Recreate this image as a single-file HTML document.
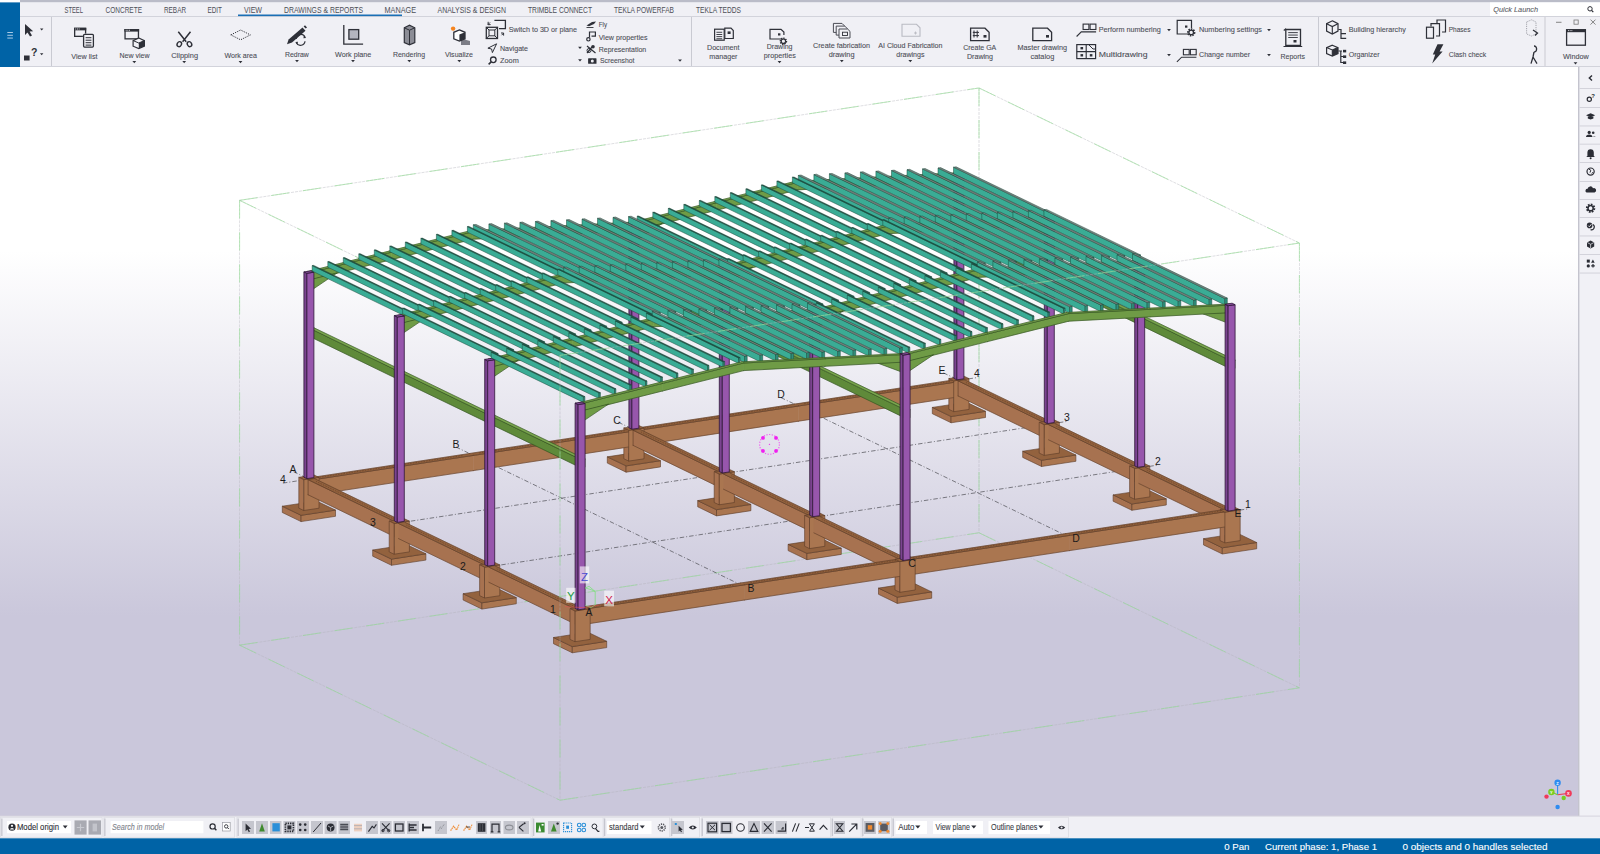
<!DOCTYPE html><html><head><meta charset="utf-8"><style>html,body{margin:0;padding:0;background:#fff;overflow:hidden}svg{display:block;font-family:"Liberation Sans",sans-serif}</style></head><body>
<svg width="1600" height="854" viewBox="0 0 1600 854">
<defs><linearGradient id="bg" x1="0" y1="0" x2="0" y2="1"><stop offset="0" stop-color="#ffffff"/><stop offset="0.245" stop-color="#ffffff"/><stop offset="0.732" stop-color="#cac7db"/><stop offset="1" stop-color="#cac7db"/></linearGradient></defs>
<rect x="0" y="67" width="1600" height="750" fill="url(#bg)"/>
<rect x="0" y="0" width="1600" height="67" fill="#f0f0f5"/>
<rect x="20" y="0" width="1580" height="2.2" fill="#babcc8"/>
<rect x="0" y="0" width="20" height="2.4" fill="#ffffff"/>
<rect x="0" y="2.4" width="20" height="64.6" fill="#0063a6"/>
<rect x="7.3" y="32.0" width="5.6" height="0.9" fill="#bcd6ee"/>
<rect x="7.3" y="34.8" width="5.6" height="0.9" fill="#bcd6ee"/>
<rect x="7.3" y="37.6" width="5.6" height="0.9" fill="#bcd6ee"/>
<rect x="20" y="16" width="1580" height="1" fill="#d2d3db"/>
<rect x="20" y="66" width="1580" height="1" fill="#d2d3db"/>
<text x="64.50" y="12.57" font-size="8.6" fill="#4d4f57" textLength="18.50" lengthAdjust="spacingAndGlyphs">STEEL</text>
<text x="105.50" y="12.57" font-size="8.6" fill="#4d4f57" textLength="36.50" lengthAdjust="spacingAndGlyphs">CONCRETE</text>
<text x="164.00" y="12.57" font-size="8.6" fill="#4d4f57" textLength="22.00" lengthAdjust="spacingAndGlyphs">REBAR</text>
<text x="207.50" y="12.57" font-size="8.6" fill="#4d4f57" textLength="14.50" lengthAdjust="spacingAndGlyphs">EDIT</text>
<text x="244.00" y="12.57" font-size="8.6" fill="#4d4f57" textLength="18.00" lengthAdjust="spacingAndGlyphs">VIEW</text>
<text x="284.00" y="12.57" font-size="8.6" fill="#4d4f57" textLength="79.00" lengthAdjust="spacingAndGlyphs">DRAWINGS &amp; REPORTS</text>
<text x="384.50" y="12.57" font-size="8.6" fill="#4d4f57" textLength="31.50" lengthAdjust="spacingAndGlyphs">MANAGE</text>
<text x="437.50" y="12.57" font-size="8.6" fill="#4d4f57" textLength="68.50" lengthAdjust="spacingAndGlyphs">ANALYSIS &amp; DESIGN</text>
<text x="528.00" y="12.57" font-size="8.6" fill="#4d4f57" textLength="64.00" lengthAdjust="spacingAndGlyphs">TRIMBLE CONNECT</text>
<text x="614.00" y="12.57" font-size="8.6" fill="#4d4f57" textLength="60.00" lengthAdjust="spacingAndGlyphs">TEKLA POWERFAB</text>
<text x="696.00" y="12.57" font-size="8.6" fill="#4d4f57" textLength="45.00" lengthAdjust="spacingAndGlyphs">TEKLA TEDDS</text>
<rect x="238" y="14.5" width="164" height="1.6" fill="#1a6fb5"/>
<rect x="1490" y="2.5" width="110" height="13.5" fill="#ffffff"/>
<text x="1493.30" y="12.22" font-size="8.00" fill="#5b5d66" stroke="#5b5d66" stroke-width="0.1" textLength="44.70" lengthAdjust="spacingAndGlyphs" font-style="italic">Quick Launch</text>
<circle cx="1590" cy="8.8" r="2.2" fill="none" stroke="#2b2d35" stroke-width="1"/><line x1="1591.6" y1="10.4" x2="1593.3" y2="12.2" stroke="#2b2d35" stroke-width="1.2"/>
<rect x="51.0" y="17" width="1" height="49" fill="#c9cad2"/>
<rect x="691.0" y="17" width="1" height="49" fill="#c9cad2"/>
<rect x="1318.0" y="17" width="1" height="49" fill="#c9cad2"/>
<rect x="1544.5" y="17" width="1" height="49" fill="#c9cad2"/>
<path d="M25,24 L25,35 L27.5,32.5 L30,36.5 L32,35.5 L29.6,31.6 L33.2,31.3 Z" fill="#2e3038"/>
<path d="M40,28.6 L43.4,28.6 L41.7,30.6Z" fill="#2e3038"/>
<rect x="24" y="55.5" width="5.6" height="5" fill="#2e3038"/>
<text x="31" y="56" font-size="10.5" font-weight="bold" fill="#2e3038">?</text>
<path d="M40,53.2 L43.4,53.2 L41.7,55.2Z" fill="#2e3038"/>
<text x="71.25" y="58.99" font-size="7.90" fill="#4b4d55" stroke="#4b4d55" stroke-width="0.1" textLength="26.25" lengthAdjust="spacingAndGlyphs">View list</text>
<text x="119.50" y="57.69" font-size="7.90" fill="#4b4d55" stroke="#4b4d55" stroke-width="0.1" textLength="30.00" lengthAdjust="spacingAndGlyphs">New view</text>
<path d="M132.4,61.0 L136.2,61.0 L134.3,63.2 Z" fill="#2e3038"/>
<text x="171.25" y="57.69" font-size="7.90" fill="#4b4d55" stroke="#4b4d55" stroke-width="0.1" textLength="26.75" lengthAdjust="spacingAndGlyphs">Clipping</text>
<path d="M182.3,61.0 L186.1,61.0 L184.2,63.2 Z" fill="#2e3038"/>
<text x="224.50" y="57.69" font-size="7.90" fill="#4b4d55" stroke="#4b4d55" stroke-width="0.1" textLength="32.50" lengthAdjust="spacingAndGlyphs">Work area</text>
<path d="M238.6,61.0 L242.4,61.0 L240.5,63.2 Z" fill="#2e3038"/>
<text x="285.00" y="57.19" font-size="7.90" fill="#4b4d55" stroke="#4b4d55" stroke-width="0.1" textLength="23.75" lengthAdjust="spacingAndGlyphs">Redraw</text>
<path d="M295.1,60.0 L298.9,60.0 L297.0,62.2 Z" fill="#2e3038"/>
<text x="335.00" y="57.19" font-size="7.90" fill="#4b4d55" stroke="#4b4d55" stroke-width="0.1" textLength="36.25" lengthAdjust="spacingAndGlyphs">Work plane</text>
<path d="M351.1,60.0 L354.9,60.0 L353.0,62.2 Z" fill="#2e3038"/>
<text x="393.00" y="56.69" font-size="7.90" fill="#4b4d55" stroke="#4b4d55" stroke-width="0.1" textLength="32.00" lengthAdjust="spacingAndGlyphs">Rendering</text>
<path d="M407.4,60.0 L411.2,60.0 L409.3,62.2 Z" fill="#2e3038"/>
<text x="445.00" y="56.69" font-size="7.90" fill="#4b4d55" stroke="#4b4d55" stroke-width="0.1" textLength="28.00" lengthAdjust="spacingAndGlyphs">Visualize</text>
<path d="M457.4,60.0 L461.2,60.0 L459.3,62.2 Z" fill="#2e3038"/>
<text x="508.75" y="31.69" font-size="7.90" fill="#4b4d55" stroke="#4b4d55" stroke-width="0.1" textLength="68.25" lengthAdjust="spacingAndGlyphs">Switch to 3D or plane</text>
<text x="500.00" y="50.69" font-size="7.90" fill="#4b4d55" stroke="#4b4d55" stroke-width="0.1" textLength="28.00" lengthAdjust="spacingAndGlyphs">Navigate</text>
<text x="500.00" y="63.19" font-size="7.90" fill="#4b4d55" stroke="#4b4d55" stroke-width="0.1" textLength="18.75" lengthAdjust="spacingAndGlyphs">Zoom</text>
<path d="M578.1,46.8 L581.9,46.8 L580.0,49.0 Z" fill="#2e3038"/>
<path d="M578.1,59.2 L581.9,59.2 L580.0,61.4 Z" fill="#2e3038"/>
<text x="598.75" y="27.19" font-size="7.90" fill="#4b4d55" stroke="#4b4d55" stroke-width="0.1" textLength="8.25" lengthAdjust="spacingAndGlyphs">Fly</text>
<text x="598.75" y="39.69" font-size="7.90" fill="#4b4d55" stroke="#4b4d55" stroke-width="0.1" textLength="48.75" lengthAdjust="spacingAndGlyphs">View properties</text>
<text x="598.75" y="51.69" font-size="7.90" fill="#4b4d55" stroke="#4b4d55" stroke-width="0.1" textLength="47.50" lengthAdjust="spacingAndGlyphs">Representation</text>
<text x="600.00" y="63.19" font-size="7.90" fill="#4b4d55" stroke="#4b4d55" stroke-width="0.1" textLength="34.50" lengthAdjust="spacingAndGlyphs">Screenshot</text>
<path d="M678.1,59.5 L681.9,59.5 L680.0,61.7 Z" fill="#2e3038"/>
<text x="707.00" y="49.69" font-size="7.90" fill="#4b4d55" stroke="#4b4d55" stroke-width="0.1" textLength="32.50" lengthAdjust="spacingAndGlyphs">Document</text>
<text x="709.25" y="59.19" font-size="7.90" fill="#4b4d55" stroke="#4b4d55" stroke-width="0.1" textLength="28.25" lengthAdjust="spacingAndGlyphs">manager</text>
<text x="766.75" y="48.69" font-size="7.90" fill="#4b4d55" stroke="#4b4d55" stroke-width="0.1" textLength="25.75" lengthAdjust="spacingAndGlyphs">Drawing</text>
<text x="763.75" y="57.69" font-size="7.90" fill="#4b4d55" stroke="#4b4d55" stroke-width="0.1" textLength="32.00" lengthAdjust="spacingAndGlyphs">properties</text>
<path d="M777.6,61.0 L781.4,61.0 L779.5,63.2 Z" fill="#2e3038"/>
<text x="813.00" y="47.69" font-size="7.90" fill="#4b4d55" stroke="#4b4d55" stroke-width="0.1" textLength="57.00" lengthAdjust="spacingAndGlyphs">Create fabrication</text>
<text x="828.75" y="57.19" font-size="7.90" fill="#4b4d55" stroke="#4b4d55" stroke-width="0.1" textLength="25.75" lengthAdjust="spacingAndGlyphs">drawing</text>
<path d="M839.9,60.0 L843.7,60.0 L841.8,62.2 Z" fill="#2e3038"/>
<text x="878.25" y="47.69" font-size="7.90" fill="#4b4d55" stroke="#4b4d55" stroke-width="0.1" textLength="64.25" lengthAdjust="spacingAndGlyphs">AI Cloud Fabrication</text>
<text x="896.25" y="57.19" font-size="7.90" fill="#4b4d55" stroke="#4b4d55" stroke-width="0.1" textLength="28.25" lengthAdjust="spacingAndGlyphs">drawings</text>
<path d="M908.4,60.0 L912.2,60.0 L910.3,62.2 Z" fill="#2e3038"/>
<text x="963.25" y="49.69" font-size="7.90" fill="#4b4d55" stroke="#4b4d55" stroke-width="0.1" textLength="33.00" lengthAdjust="spacingAndGlyphs">Create GA</text>
<text x="967.00" y="59.19" font-size="7.90" fill="#4b4d55" stroke="#4b4d55" stroke-width="0.1" textLength="26.00" lengthAdjust="spacingAndGlyphs">Drawing</text>
<text x="1017.50" y="49.69" font-size="7.90" fill="#4b4d55" stroke="#4b4d55" stroke-width="0.1" textLength="49.50" lengthAdjust="spacingAndGlyphs">Master drawing</text>
<text x="1030.50" y="59.19" font-size="7.90" fill="#4b4d55" stroke="#4b4d55" stroke-width="0.1" textLength="23.75" lengthAdjust="spacingAndGlyphs">catalog</text>
<text x="1098.75" y="32.19" font-size="7.90" fill="#4b4d55" stroke="#4b4d55" stroke-width="0.1" textLength="62.00" lengthAdjust="spacingAndGlyphs">Perform numbering</text>
<path d="M1167.1,29.0 L1170.9,29.0 L1169.0,31.2 Z" fill="#2e3038"/>
<text x="1098.75" y="57.19" font-size="7.90" fill="#4b4d55" stroke="#4b4d55" stroke-width="0.1" textLength="48.75" lengthAdjust="spacingAndGlyphs">Multidrawing</text>
<path d="M1167.1,54.0 L1170.9,54.0 L1169.0,56.2 Z" fill="#2e3038"/>
<text x="1199.00" y="32.19" font-size="7.90" fill="#4b4d55" stroke="#4b4d55" stroke-width="0.1" textLength="63.00" lengthAdjust="spacingAndGlyphs">Numbering settings</text>
<path d="M1267.1,29.0 L1270.9,29.0 L1269.0,31.2 Z" fill="#2e3038"/>
<text x="1199.00" y="57.19" font-size="7.90" fill="#4b4d55" stroke="#4b4d55" stroke-width="0.1" textLength="51.00" lengthAdjust="spacingAndGlyphs">Change number</text>
<path d="M1267.1,54.0 L1270.9,54.0 L1269.0,56.2 Z" fill="#2e3038"/>
<text x="1280.50" y="59.19" font-size="7.90" fill="#4b4d55" stroke="#4b4d55" stroke-width="0.1" textLength="24.50" lengthAdjust="spacingAndGlyphs">Reports</text>
<text x="1348.75" y="32.19" font-size="7.90" fill="#4b4d55" stroke="#4b4d55" stroke-width="0.1" textLength="57.00" lengthAdjust="spacingAndGlyphs">Building hierarchy</text>
<text x="1348.75" y="57.19" font-size="7.90" fill="#4b4d55" stroke="#4b4d55" stroke-width="0.1" textLength="30.75" lengthAdjust="spacingAndGlyphs">Organizer</text>
<text x="1448.75" y="32.19" font-size="7.90" fill="#4b4d55" stroke="#4b4d55" stroke-width="0.1" textLength="21.75" lengthAdjust="spacingAndGlyphs">Phases</text>
<text x="1448.75" y="57.19" font-size="7.90" fill="#4b4d55" stroke="#4b4d55" stroke-width="0.1" textLength="37.50" lengthAdjust="spacingAndGlyphs">Clash check</text>
<text x="1563.00" y="59.19" font-size="7.90" fill="#4b4d55" stroke="#4b4d55" stroke-width="0.1" textLength="25.75" lengthAdjust="spacingAndGlyphs">Window</text>
<path d="M1573.6,62.3 L1577.4,62.3 L1575.5,64.5 Z" fill="#2e3038"/>
<rect x="1556" y="21.8" width="5.5" height="0.9" fill="#777"/>
<rect x="1574" y="20" width="4.2" height="4.2" fill="none" stroke="#777" stroke-width="0.8"/>
<path d="M1590.5,19.6 L1595.5,24.6 M1595.5,19.6 L1590.5,24.6" stroke="#777" stroke-width="0.9"/>
<rect x="74.65" y="28.40" width="10.95" height="7.95" fill="none" stroke="#2e3038" stroke-width="1.30"/>
<rect x="74.00" y="27.75" width="12.25" height="2.6" fill="#2e3038"/>
<rect x="75.30" y="28.55" width="0.9" height="0.9" fill="#f0f0f5"/>
<rect x="77.00" y="28.55" width="0.9" height="0.9" fill="#f0f0f5"/>
<rect x="78.70" y="28.55" width="0.9" height="0.9" fill="#f0f0f5"/>
<rect x="82.9" y="33.6" width="11.2" height="14.15" fill="#f0f0f5"/>
<rect x="83.6" y="34.3" width="9.8" height="12.75" rx="1" fill="none" stroke="#2e3038" stroke-width="1.3"/>
<rect x="85.6" y="37.2" width="5.8" height="1" fill="#2e3038"/>
<rect x="85.6" y="39.7" width="5.8" height="1" fill="#2e3038"/>
<rect x="85.6" y="42.2" width="5.8" height="1" fill="#2e3038"/>
<rect x="85.6" y="44.6" width="5.8" height="1" fill="#2e3038"/>
<rect x="125.05" y="29.65" width="13.40" height="9.20" fill="none" stroke="#2e3038" stroke-width="1.30"/>
<rect x="124.40" y="29.00" width="14.70" height="2.6" fill="#2e3038"/>
<rect x="125.70" y="29.80" width="0.9" height="0.9" fill="#f0f0f5"/>
<rect x="127.40" y="29.80" width="0.9" height="0.9" fill="#f0f0f5"/>
<rect x="129.10" y="29.80" width="0.9" height="0.9" fill="#f0f0f5"/>
<path d="M138.8,38 L144.4,40.6 L144.4,46.2 L138.8,48.6 L133.1,46.2 L133.1,40.6 Z" fill="#f0f0f5" stroke="#2e3038" stroke-width="1.2"/>
<path d="M138.8,43 L144.4,40.6 L144.4,46.2 L138.8,48.6 Z" fill="#2e3038"/><path d="M133.1,40.6 L138.8,43 L144.4,40.6" stroke="#2e3038" stroke-width="1" fill="none"/>
<path d="M178.3,31.8 L186.2,41.8 M190.5,31.8 L182.6,41.8" stroke="#2e3038" stroke-width="1.5"/>
<ellipse cx="179.3" cy="44.2" rx="2.1" ry="2.6" fill="none" stroke="#2e3038" stroke-width="1.4" transform="rotate(30 179.3 44.2)"/>
<ellipse cx="189.5" cy="44.2" rx="2.1" ry="2.6" fill="none" stroke="#2e3038" stroke-width="1.4" transform="rotate(-30 189.5 44.2)"/>
<path d="M230.8,34.9 L240.6,30 L250.4,34.9 L240.6,39.8 Z" fill="none" stroke="#2e3038" stroke-width="1" stroke-dasharray="1.2,1.2"/>
<path d="M287,44.2 L288.6,39.5 L302.5,27.5 L305.5,30.8 L292,42.6 Z" fill="#2e3038"/>
<path d="M303.6,26.4 L305,25.2 L307,27.4 L305.7,28.6 Z" fill="#2e3038"/>
<path d="M296.2,39 A4.6,4.6 0 0 1 305,37.2 M305,41.2 A4.6,4.6 0 0 1 296.4,43" stroke="#2e3038" stroke-width="1.2" fill="none"/>
<path d="M304,35.6 L306.2,37.9 L303.4,38.2Z M297.4,44.4 L295.2,42 L298,41.8Z" fill="#2e3038"/>
<path d="M343.8,24.9 L343.8,44.2 L363.1,44.2" stroke="#2e3038" stroke-width="1.3" fill="none"/>
<rect x="348.9" y="29.6" width="9.8" height="9.6" fill="#b4b5bf" stroke="#2e3038" stroke-width="1.3"/>
<path d="M404.3,27.8 L409.5,25.2 L414.8,27.8 L414.8,42.5 L409.5,44.8 L404.3,42.5 Z" fill="#8c8d96" stroke="#2e3038" stroke-width="1.2"/>
<path d="M404.3,27.8 L409.5,30.2 L414.8,27.8 M409.5,30.2 L409.5,44.8" stroke="#2e3038" stroke-width="1" fill="none"/>
<path d="M461,38.6 L470,41 L470,44.9 L461,44.9Z" fill="#7c7d86"/>
<path d="M459.4,29.9 L465,32.3 L465,38.8 L459.4,41.1 L453.8,38.8 L453.8,32.3 Z" fill="#fff" stroke="#2e3038" stroke-width="1.3"/>
<path d="M459.4,34.6 L465,32.3 L465,38.8 L459.4,41.1 Z" fill="#2e3038"/>
<circle cx="453.1" cy="28.6" r="2.2" fill="#f5841f"/>
<rect x="486.3" y="27.3" width="11.2" height="11.2" fill="none" stroke="#2e3038" stroke-width="1.3"/>
<rect x="489" y="30" width="5.8" height="5.8" fill="none" stroke="#2e3038" stroke-width="1"/>
<path d="M486.3,27.3 L489,30 M497.5,27.3 L494.8,30 M486.3,38.5 L489,35.8 M497.5,38.5 L494.8,35.8" stroke="#2e3038" stroke-width="1"/>
<path d="M494.4,20.4 L505.4,20.4 L505.4,28.6 L499,28.6" stroke="#2e3038" stroke-width="1.3" fill="none"/>
<path d="M490,22.5 L488,24.5 M488.2,21.8 L488,24.7 L490.6,24.6" stroke="#2e3038" stroke-width="1" fill="none"/>
<path d="M501.6,35.2 L503.6,33.2 M501,33 L503.6,33 L503.6,35.6" stroke="#2e3038" stroke-width="1" fill="none"/>
<path d="M487.9,48.2 L496.6,43.8 L492.4,52.6 L491.6,49 Z" fill="none" stroke="#2e3038" stroke-width="1"/>
<circle cx="493.3" cy="59.8" r="2.8" fill="none" stroke="#2e3038" stroke-width="1.3"/><path d="M491.2,61.9 L488.6,64.4" stroke="#2e3038" stroke-width="1.5"/>
<path d="M586.5,25.5 L592,22 L596,21.4 L594,24 L589,26.2 Z" fill="#2e3038"/><rect x="586.5" y="27" width="7" height="0.9" fill="#2e3038"/>
<path d="M589.5,37.5 L589.5,32 L595.4,32 L595.4,36.2 L591.5,36.2" stroke="#2e3038" stroke-width="1.2" fill="none"/><circle cx="588.4" cy="39.3" r="1.7" fill="none" stroke="#2e3038" stroke-width="1.2"/>
<path d="M587,46 L595.5,53 M587,53 L592,47" stroke="#2e3038" stroke-width="1.2"/><circle cx="593" cy="46.8" r="1.8" fill="#2e3038"/><circle cx="589" cy="50.5" r="2" fill="none" stroke="#2e3038" stroke-width="1"/>
<rect x="588.1" y="58.2" width="8.4" height="5.6" rx="0.6" fill="#2e3038"/><circle cx="592.3" cy="61" r="1.5" fill="#f0f0f5"/>
<rect x="714.6" y="29.2" width="9.6" height="11" fill="#f0f0f5" stroke="#2e3038" stroke-width="1.2"/>
<rect x="716.4" y="31.8" width="5.8" height="0.9" fill="#2e3038"/>
<rect x="716.4" y="34.0" width="5.8" height="0.9" fill="#2e3038"/>
<rect x="716.4" y="36.2" width="5.8" height="0.9" fill="#2e3038"/>
<rect x="716.4" y="38.3" width="5.8" height="0.9" fill="#2e3038"/>
<path d="M724.8,28.2 L731,28.2 L733.3,30.5 L733.3,38.5 L724.8,38.5 Z" fill="#f0f0f5" stroke="#2e3038" stroke-width="1.2"/><rect x="727.6" y="31.4" width="3" height="2.6" fill="#2e3038"/>
<path d="M781,39 L770,39 L770,29.3 L781,29.3 L783.9,32 L783.9,35" stroke="#2e3038" stroke-width="1.2" fill="none"/><rect x="778" y="33.3" width="2.4" height="2.2" fill="#2e3038"/>
<circle cx="783.4" cy="41.2" r="2.9" fill="none" stroke="#2e3038" stroke-width="1.8" stroke-dasharray="1.3,0.9"/><circle cx="783.4" cy="41.2" r="2.2" fill="none" stroke="#2e3038" stroke-width="1.2"/>
<path d="M833.4,23.4 l8.6,0 l2.4,2.4 l0,6.6 l-11,0 Z" fill="#f0f0f5" stroke="#4a4c54" stroke-width="1"/>
<path d="M836.2,26.1 l8.6,0 l2.4,2.4 l0,6.6 l-11,0 Z" fill="#f0f0f5" stroke="#4a4c54" stroke-width="1"/>
<path d="M839.0,29.0 l8.6,0 l2.4,2.4 l0,6.6 l-11,0 Z" fill="#f0f0f5" stroke="#4a4c54" stroke-width="1"/>
<rect x="842.5" y="32.2" width="5" height="3.3" fill="none" stroke="#2e3038" stroke-width="0.9"/>
<path d="M902,24.3 L916.5,24.3 L920,27.8 L920,36.2 L902,36.2 Z" fill="none" stroke="#b9bac2" stroke-width="1.1"/><path d="M914,33 l3,0 m-1.5,-1.5 l0,3" stroke="#b9bac2" stroke-width="0.9"/>
<path d="M970.6,28.2 L985,28.2 L989.1,32.3 L989.1,40.7 L970.6,40.7 Z" fill="none" stroke="#2e3038" stroke-width="1.3"/>
<path d="M974,30.5 L974,37.5 M977.2,30.5 L977.2,37.5 M972.8,32.4 L979,32.4 M972.8,35.6 L979,35.6" stroke="#2e3038" stroke-width="1"/><rect x="983.5" y="35" width="3" height="2.6" fill="#2e3038"/>
<path d="M1032.8,28.2 L1047.5,28.2 L1051.6,32.3 L1051.6,40.7 L1032.8,40.7 Z" fill="none" stroke="#2e3038" stroke-width="1.3"/><rect x="1046" y="35" width="3" height="2.6" fill="#2e3038"/>
<rect x="1083.1" y="24.1" width="5.8" height="5.4" fill="none" stroke="#2e3038" stroke-width="1.1"/>
<rect x="1090.1" y="24.1" width="5.8" height="5.4" fill="none" stroke="#2e3038" stroke-width="1.1"/>
<path d="M1076.6,36.5 L1081.3,31.9 L1096.1,31.9" stroke="#2e3038" stroke-width="1.1" fill="none"/>
<rect x="1183.4" y="49.4" width="5.8" height="5.4" fill="none" stroke="#2e3038" stroke-width="1.1"/>
<rect x="1190.4" y="49.4" width="5.8" height="5.4" fill="none" stroke="#2e3038" stroke-width="1.1"/>
<path d="M1176.9,61.8 L1181.6,57.2 L1196.4,57.2" stroke="#2e3038" stroke-width="1.1" fill="none"/>
<rect x="1076.8" y="44.6" width="18.8" height="14" fill="none" stroke="#2e3038" stroke-width="1.2"/><path d="M1076.8,51.6 L1095.6,51.6 M1086.2,44.6 L1086.2,58.6" stroke="#2e3038" stroke-width="1.1"/>
<rect x="1080.5" y="47.0" width="2.6" height="2.4" fill="#2e3038"/>
<rect x="1080.5" y="54.1" width="2.6" height="2.4" fill="#2e3038"/>
<rect x="1089.8" y="54.1" width="2.6" height="2.4" fill="#2e3038"/>
<path d="M1089,45 L1093,49 L1095,49" stroke="#2e3038" stroke-width="1" fill="none"/>
<path d="M1188,34 L1177.2,34 L1177.2,20.3 L1191.5,20.3 L1191.5,28" stroke="#2e3038" stroke-width="1.2" fill="none"/><rect x="1185" y="25.5" width="2.4" height="2.2" fill="#2e3038"/>
<circle cx="1191.2" cy="32.4" r="3.2" fill="none" stroke="#2e3038" stroke-width="2" stroke-dasharray="1.4,1"/><circle cx="1191.2" cy="32.4" r="2.3" fill="none" stroke="#2e3038" stroke-width="1.3"/>
<path d="M1285.8,29.5 L1300.5,29.5 L1300.5,45.5 L1285.8,45.5 Z" fill="none" stroke="#2e3038" stroke-width="1.3"/><path d="M1283.8,30.5 L1286,28.6 M1283.5,46.5 L1302.2,46.5" stroke="#2e3038" stroke-width="1.2"/>
<rect x="1288.2" y="32.2" width="9.6" height="0.9" fill="#2e3038"/>
<rect x="1288.2" y="34.6" width="9.6" height="0.9" fill="#2e3038"/>
<rect x="1288.2" y="37.0" width="9.6" height="0.9" fill="#2e3038"/>
<rect x="1293.5" y="40" width="3" height="2.5" fill="#2e3038"/>
<path d="M1332.3,20.8 L1338.0,23.7 L1338.0,31.1 L1332.3,34.0 L1326.6,31.1 L1326.6,23.7 Z" fill="#f0f0f5" stroke="#2e3038" stroke-width="1.2"/>
<path d="M1326.6,23.7 L1332.3,26.6 L1338.0,23.7 M1332.3,26.6 L1332.3,34.0" stroke="#2e3038" stroke-width="1.1" fill="none"/>
<path d="M1341,29 L1341,38.4 L1346.2,38.4 M1341,33.6 L1346,33.6 M1338.4,29.5 L1341,29.5" stroke="#2e3038" stroke-width="1.2" fill="none"/>
<path d="M1332.3,45.2 L1338.0,47.6 L1338.0,53.6 L1332.3,56.0 L1326.6,53.6 L1326.6,47.6 Z" fill="#f0f0f5" stroke="#2e3038" stroke-width="1.2"/>
<path d="M1326.6,47.6 L1332.3,50.0 L1338.0,47.6 M1332.3,50.0 L1332.3,56.0" stroke="#2e3038" stroke-width="1.1" fill="none"/>
<path d="M1332.3,50.0 L1338.0,47.6 L1338.0,53.6 L1332.3,56.0 Z" fill="#2e3038"/>
<path d="M1340.8,51 L1340.8,63 M1338.4,51 L1342,51 M1340.8,56.5 L1343,56.5 M1340.8,62.5 L1343,62.5" stroke="#2e3038" stroke-width="1.2" fill="none"/>
<rect x="1343" y="49.8" width="3.2" height="2.6" fill="#2e3038"/>
<rect x="1343" y="55.4" width="3.2" height="2.6" fill="#2e3038"/>
<rect x="1343" y="61.4" width="3.2" height="2.6" fill="#2e3038"/>
<rect x="1426.5" y="27.2" width="7" height="11" fill="none" stroke="#2e3038" stroke-width="1.2"/><path d="M1436,36 L1439.5,36 L1439.5,23.6 L1431,23.6 L1431,26.6" stroke="#2e3038" stroke-width="1.2" fill="none"/><path d="M1442,32 L1445.5,32 L1445.5,20 L1437,20 L1437,23" stroke="#2e3038" stroke-width="1.2" fill="none"/>
<path d="M1437.5,44.2 L1443.4,44.2 L1439.6,51.4 L1442.6,51.4 L1432.2,63.4 L1435.2,54.4 L1432.8,54.4 Z" fill="#2e3038"/>
<path d="M1526.6,22 L1531.5,19.8 L1536,22 L1536,34 L1531.5,36 L1526.6,34Z" fill="none" stroke="#9a9ba3" stroke-width="0.9" stroke-dasharray="1.2,1"/><path d="M1533,30 L1537.5,33 L1535,35.5" stroke="#2e3038" stroke-width="1.3" fill="none"/>
<path d="M1534,46 A2.5,3 0 1 1 1534.2,52 M1534,52 L1533,57 L1531,63.6 M1533,57 L1537,63.6" stroke="#2e3038" stroke-width="1.3" fill="none"/>
<rect x="1566.6" y="29.8" width="18.8" height="15.4" fill="none" stroke="#2e3038" stroke-width="1.3"/><rect x="1566" y="29.2" width="20" height="3" fill="#2e3038"/>
<rect x="1568.0" y="30.2" width="0.9" height="0.9" fill="#f0f0f5"/>
<rect x="1569.7" y="30.2" width="0.9" height="0.9" fill="#f0f0f5"/>
<rect x="1571.4" y="30.2" width="0.9" height="0.9" fill="#f0f0f5"/>
<rect x="1578.6" y="67" width="21.4" height="749" fill="#f1f1f6"/>
<rect x="1578" y="67" width="1.4" height="749" fill="#c4c4ce"/>
<rect x="1579.4" y="88.0" width="20.6" height="0.9" fill="#d0d0d8"/>
<rect x="1579.4" y="107.0" width="20.6" height="0.9" fill="#d0d0d8"/>
<rect x="1579.4" y="125.5" width="20.6" height="0.9" fill="#d0d0d8"/>
<rect x="1579.4" y="143.7" width="20.6" height="0.9" fill="#d0d0d8"/>
<rect x="1579.4" y="162.0" width="20.6" height="0.9" fill="#d0d0d8"/>
<rect x="1579.4" y="181.0" width="20.6" height="0.9" fill="#d0d0d8"/>
<rect x="1579.4" y="199.0" width="20.6" height="0.9" fill="#d0d0d8"/>
<rect x="1579.4" y="217.0" width="20.6" height="0.9" fill="#d0d0d8"/>
<rect x="1579.4" y="235.5" width="20.6" height="0.9" fill="#d0d0d8"/>
<rect x="1579.4" y="254.0" width="20.6" height="0.9" fill="#d0d0d8"/>
<rect x="1579.4" y="272.6" width="20.6" height="0.9" fill="#d0d0d8"/>
<path d="M1592,75.5 L1589.3,78 L1592,80.5" stroke="#2b2d35" stroke-width="1.4" fill="none"/>
<circle cx="1589.3" cy="99.3" r="2.1" fill="none" stroke="#2b2d35" stroke-width="1.2"/><text x="1591.2" y="98" font-size="6" font-weight="bold" fill="#2b2d35">?</text>
<path d="M1586,115.2 L1590.6,113.2 L1595.2,115.2 L1590.6,117.2Z" fill="#2b2d35"/><path d="M1587.8,116.4 L1587.8,118.6 L1590.6,119.6 L1593.4,118.6 L1593.4,116.4" fill="#2b2d35"/>
<circle cx="1589.2" cy="132.4" r="1.6" fill="#2b2d35"/><path d="M1586,137 A3.2,2.6 0 0 1 1592.4,137 Z" fill="#2b2d35"/><circle cx="1593.2" cy="132.8" r="1.3" fill="#2b2d35"/><path d="M1592.6,136.6 A2.6,2.2 0 0 1 1596,136.6Z" fill="#2b2d35"/>
<path d="M1587.4,156 L1587.4,152.6 A3.2,3.4 0 0 1 1593.8,152.6 L1593.8,156 L1595,157 L1586.2,157 Z" fill="#2b2d35"/><circle cx="1590.6" cy="158.3" r="1" fill="#2b2d35"/>
<circle cx="1590.6" cy="171.6" r="3.6" fill="none" stroke="#2b2d35" stroke-width="1.2"/><path d="M1588.6,169 L1590.8,170.2 L1590,172.6 M1591.8,173.6 L1593.2,172" stroke="#2b2d35" stroke-width="1" fill="none"/>
<path d="M1586.6,192.6 A2,2 0 0 1 1587.6,188.8 A2.8,2.8 0 0 1 1593,188.2 A2.2,2.2 0 0 1 1594.6,192.6 Z" fill="#2b2d35"/>
<circle cx="1590.6" cy="208.2" r="3.5" fill="none" stroke="#2b2d35" stroke-width="2.4" stroke-dasharray="1.6,1.1"/><circle cx="1590.6" cy="208.2" r="2.6" fill="none" stroke="#2b2d35" stroke-width="1.4"/>
<circle cx="1589.6" cy="225.4" r="2.8" fill="#2b2d35"/><path d="M1588.2,225.6 L1589.4,226.8 L1591.4,224.2" stroke="#f1f1f6" stroke-width="0.9" fill="none"/><path d="M1593,224.6 A2.8,2.8 0 0 1 1590.6,229.6" stroke="#2b2d35" stroke-width="1.2" fill="none"/>
<path d="M1590.6,240.6 L1594.2,242.4 L1594.2,246.6 L1590.6,248.4 L1587,246.6 L1587,242.4Z" fill="#2b2d35"/><path d="M1587.4,242.6 L1590.6,244.3 L1593.8,242.6 M1590.6,244.3 L1590.6,248" stroke="#f1f1f6" stroke-width="0.7" fill="none"/>
<rect x="1586.8" y="259.6" width="3" height="3" fill="#2b2d35"/><path d="M1592.9,259.4 L1594.7,262.7 L1591.1,262.7Z" fill="#2b2d35"/><circle cx="1588.3" cy="265.9" r="1.6" fill="#2b2d35"/><path d="M1593,264 L1593,267.6 M1591.2,265.8 L1594.8,265.8" stroke="#2b2d35" stroke-width="1.2"/>
<line x1="1557.6" y1="794.8" x2="1557.6" y2="783" stroke="#2f8cf0" stroke-width="1.1"/>
<line x1="1557.6" y1="794.8" x2="1568.5" y2="793.4" stroke="#f03a5a" stroke-width="1.1"/>
<line x1="1557.6" y1="794.8" x2="1551.4" y2="792" stroke="#7acc22" stroke-width="1.1"/>
<circle cx="1557.6" cy="782.8" r="3.2" fill="#2f8cf0"/><circle cx="1551.4" cy="792" r="3.2" fill="#7acc22"/><circle cx="1568.5" cy="793.4" r="3.3" fill="#f03a5a"/>
<circle cx="1546.5" cy="796.6" r="2.2" fill="#f03a5a"/><circle cx="1563.7" cy="798" r="2.2" fill="#7acc22"/><circle cx="1557.6" cy="807" r="2.2" fill="#2f8cf0"/>
<text x="1556.2" y="784.5" font-size="4" fill="#fff" font-weight="bold">Z</text><text x="1550" y="793.7" font-size="4" fill="#fff" font-weight="bold">Y</text><text x="1567.1" y="795.1" font-size="4" fill="#fff" font-weight="bold">X</text>
<rect x="0" y="816" width="1600" height="22.3" fill="#f0f0f5"/>
<rect x="0" y="815.6" width="1600" height="1" fill="#d6d5de"/>
<rect x="0" y="838.3" width="1600" height="15.7" fill="#0063a6"/>
<rect x="0.4" y="817.3" width="101.7" height="20" fill="none" stroke="#dcdce3" stroke-width="0.8"/>
<rect x="103.9" y="817.3" width="130.7" height="20" fill="none" stroke="#dcdce3" stroke-width="0.8"/>
<rect x="236.9" y="817.3" width="294.2" height="20" fill="none" stroke="#dcdce3" stroke-width="0.8"/>
<rect x="532.4" y="817.3" width="70.7" height="20" fill="none" stroke="#dcdce3" stroke-width="0.8"/>
<rect x="603.9" y="817.3" width="65.7" height="20" fill="none" stroke="#dcdce3" stroke-width="0.8"/>
<rect x="670.9" y="817.3" width="28.7" height="20" fill="none" stroke="#dcdce3" stroke-width="0.8"/>
<rect x="701.9" y="817.3" width="128.7" height="20" fill="none" stroke="#dcdce3" stroke-width="0.8"/>
<rect x="831.9" y="817.3" width="29.2" height="20" fill="none" stroke="#dcdce3" stroke-width="0.8"/>
<rect x="862.4" y="817.3" width="29.2" height="20" fill="none" stroke="#dcdce3" stroke-width="0.8"/>
<rect x="892.9" y="817.3" width="175.7" height="20" fill="none" stroke="#dcdce3" stroke-width="0.8"/>
<rect x="1.2" y="818.5" width="1.3" height="17.5" fill="#c6c6cf"/>
<rect x="104.2" y="818.5" width="1.3" height="17.5" fill="#c6c6cf"/>
<rect x="237.5" y="818.5" width="1.3" height="17.5" fill="#c6c6cf"/>
<rect x="533.0" y="818.5" width="1.3" height="17.5" fill="#c6c6cf"/>
<rect x="604.0" y="818.5" width="1.3" height="17.5" fill="#c6c6cf"/>
<rect x="671.0" y="818.5" width="1.3" height="17.5" fill="#c6c6cf"/>
<rect x="701.6" y="818.5" width="1.3" height="17.5" fill="#c6c6cf"/>
<rect x="831.8" y="818.5" width="1.3" height="17.5" fill="#c6c6cf"/>
<rect x="862.2" y="818.5" width="1.3" height="17.5" fill="#c6c6cf"/>
<rect x="892.6" y="818.5" width="1.3" height="17.5" fill="#c6c6cf"/>
<rect x="7" y="821" width="64" height="12.2" fill="#ffffff"/>
<circle cx="12" cy="827.2" r="3.6" fill="#2b2d35"/><circle cx="12" cy="825.8" r="1.1" fill="#fff"/><path d="M10,829.6 A2,1.6 0 0 1 14,829.6Z" fill="#fff"/>
<text x="16.90" y="830.12" font-size="8.60" fill="#2b2d35" stroke="#2b2d35" stroke-width="0.1" textLength="42.10" lengthAdjust="spacingAndGlyphs">Model origin</text>
<path d="M62.8,825.6 L67.6,825.6 L65.2,828.6Z" fill="#2b2d35"/>
<rect x="74.5" y="820.4" width="12.1" height="14.2" fill="#a9aab2"/><path d="M80.5,823.8 L80.5,831.2 M76.8,827.5 L84.2,827.5" stroke="#c8c9d0" stroke-width="1.2"/>
<rect x="88.5" y="820.4" width="12.5" height="14.2" fill="#a9aab2"/><rect x="92.6" y="823.6" width="4.4" height="7.8" fill="#c3c4cb"/>
<rect x="110.6" y="821" width="92.8" height="12.2" fill="#ffffff"/>
<text x="112.00" y="830.06" font-size="8.40" fill="#80828a" stroke="#80828a" stroke-width="0.1" textLength="52.00" lengthAdjust="spacingAndGlyphs" font-style="italic">Search in model</text>
<circle cx="212.6" cy="826.4" r="2.6" fill="none" stroke="#2b2d35" stroke-width="1.2"/><path d="M214.5,828.3 L216.4,830.2" stroke="#2b2d35" stroke-width="1.4"/>
<rect x="222.6" y="822.4" width="7.6" height="8.6" fill="#fff" stroke="#9a9ba3" stroke-width="0.7"/><circle cx="226.2" cy="826.4" r="1.7" fill="none" stroke="#2b2d35" stroke-width="0.9"/><path d="M227.4,827.6 L228.8,829" stroke="#2b2d35" stroke-width="1"/>
<rect x="242.0" y="821" width="12.0" height="13" fill="#c5c6ce"/>
<rect x="256.0" y="821" width="12.0" height="13" fill="#c5c6ce"/>
<rect x="270.0" y="821" width="11.5" height="13" fill="#c5c6ce"/>
<rect x="283.4" y="821" width="12.0" height="13" fill="#c5c6ce"/>
<rect x="297.0" y="821" width="12.0" height="13" fill="#c5c6ce"/>
<rect x="311.0" y="821" width="12.0" height="13" fill="#c5c6ce"/>
<rect x="324.6" y="821" width="12.0" height="13" fill="#c5c6ce"/>
<rect x="338.5" y="821" width="11.5" height="13" fill="#c5c6ce"/>
<rect x="366.0" y="821" width="12.0" height="13" fill="#c5c6ce"/>
<rect x="380.0" y="821" width="11.6" height="13" fill="#c5c6ce"/>
<rect x="393.4" y="821" width="11.6" height="13" fill="#c5c6ce"/>
<rect x="407.0" y="821" width="12.0" height="13" fill="#c5c6ce"/>
<rect x="435.0" y="821" width="12.0" height="13" fill="#c5c6ce"/>
<rect x="476.0" y="821" width="11.0" height="13" fill="#c5c6ce"/>
<rect x="490.0" y="821" width="11.0" height="13" fill="#c5c6ce"/>
<rect x="503.5" y="821" width="11.5" height="13" fill="#c5c6ce"/>
<rect x="517.0" y="821" width="12.0" height="13" fill="#c5c6ce"/>
<rect x="548.0" y="821" width="12.0" height="13" fill="#c5c6ce"/>
<rect x="672.0" y="821" width="12.0" height="13" fill="#c5c6ce"/>
<rect x="706.0" y="821" width="12.5" height="13" fill="#c5c6ce"/>
<rect x="720.0" y="821" width="12.5" height="13" fill="#c5c6ce"/>
<rect x="748.0" y="821" width="12.0" height="13" fill="#c5c6ce"/>
<rect x="761.6" y="821" width="12.4" height="13" fill="#c5c6ce"/>
<rect x="775.6" y="821" width="11.4" height="13" fill="#c5c6ce"/>
<rect x="834.0" y="821" width="11.0" height="13" fill="#c5c6ce"/>
<rect x="864.0" y="821" width="12.0" height="13" fill="#c5c6ce"/>
<rect x="878.0" y="821" width="12.0" height="13" fill="#c5c6ce"/>
<path d="M245.6,823.6 L245.6,831.2 L247.4,829.6 L248.8,832.2 L250,831.6 L248.6,829 L251,828.8Z" fill="#2b2d35"/>
<path d="M262,823.2 L259.2,831.6 L264.8,831.6Z" fill="#3f8a2e"/>
<rect x="272.4" y="823.2" width="7.4" height="8.2" fill="#2a8fd8"/>
<rect x="285.4" y="823.4" width="8" height="8" fill="none" stroke="#2b2d35" stroke-width="1.6" stroke-dasharray="1.4,0.9"/><rect x="287.4" y="825.4" width="4" height="4" fill="#2b2d35"/>
<circle cx="300.2" cy="824.6" r="1.3" fill="#2b2d35"/>
<circle cx="305.2" cy="824.6" r="1.3" fill="#2b2d35"/>
<circle cx="300.2" cy="830.0" r="1.3" fill="#2b2d35"/>
<circle cx="305.2" cy="830.0" r="1.3" fill="#2b2d35"/>
<path d="M313.2,832 L321,823" stroke="#2b2d35" stroke-width="1"/>
<circle cx="330.6" cy="827.5" r="3.9" fill="#2b2d35"/><path d="M328,826 L330.6,827.5 L333.4,826 M330.6,827.5 L330.6,831" stroke="#c5c6ce" stroke-width="0.8" fill="none"/>
<rect x="340.2" y="823.8" width="8" height="1" fill="#2b2d35"/>
<rect x="340.2" y="825.6" width="8" height="1" fill="#2b2d35"/>
<rect x="340.2" y="827.4" width="8" height="1" fill="#2b2d35"/>
<rect x="340.2" y="829.2" width="8" height="1" fill="#2b2d35"/>
<path d="M355,823.8 L355,831.4 M357,823.8 L357,831.4 M359,823.8 L359,831.4 M361,823.8 L361,831.4" stroke="#e8a070" stroke-width="0.8"/><path d="M354,825.6 L362,825.6 M354,828.8 L362,828.8" stroke="#a9aab2" stroke-width="0.8"/>
<path d="M368.4,831.6 L372.2,826.4 L374,828 L376.4,824.4" stroke="#2b2d35" stroke-width="1.1" fill="none"/>
<path d="M382,823.4 L389.6,831.4 M389.6,823.4 L382,831.4" stroke="#2b2d35" stroke-width="1.1"/><circle cx="383" cy="830.6" r="1.2" fill="none" stroke="#2b2d35" stroke-width="0.9"/><circle cx="388.6" cy="830.6" r="1.2" fill="none" stroke="#2b2d35" stroke-width="0.9"/>
<rect x="395.4" y="824" width="7.6" height="7" fill="none" stroke="#2b2d35" stroke-width="1.3"/>
<path d="M409.2,823.4 L409.2,831.6 M409.2,825 L416.6,825 M409.2,830 L416.6,830 M410,827.5 L414,827.5" stroke="#2b2d35" stroke-width="1.3"/>
<path d="M423,823.8 L423,831.2 M423,827.5 L431.2,827.5" stroke="#2b2d35" stroke-width="1.8"/>
<path d="M438,831 L441,826 M441,829 L444.4,824" stroke="#8e9097" stroke-width="0.9" stroke-dasharray="1.2,0.6"/>
<path d="M450.6,830.6 L453.6,826.2 L456.6,830 L459,824.6" stroke="#f08a30" stroke-width="1.1" fill="none" stroke-dasharray="1.5,0.6"/>
<path d="M463.6,830.6 L466.6,826.2 L469.6,830 L472,824.6" stroke="#f08a30" stroke-width="1.1" fill="none" stroke-dasharray="1.5,0.6"/><path d="M466,827 L470,827" stroke="#2b2d35" stroke-width="0.8"/>
<rect x="477.8" y="823.2" width="7.6" height="8.6" fill="#2b2d35"/><path d="M480,824 L480,831 M482.6,824 L482.6,831" stroke="#6a6b72" stroke-width="0.6"/>
<path d="M492,831.8 L492,824.2 L499,824.2 L499,831.8 M490.8,831.8 L493.4,831.8 M497.6,831.8 L500.2,831.8" stroke="#2b2d35" stroke-width="1.2" fill="none"/>
<ellipse cx="509.2" cy="827.5" rx="3.8" ry="2.4" fill="none" stroke="#8e9097" stroke-width="1.1"/>
<path d="M519,827.4 L523.6,823.8 M519,827.4 L523.4,831.4" stroke="#2b2d35" stroke-width="1.2"/><circle cx="524.6" cy="823.2" r="1" fill="#2b2d35"/>
<rect x="536" y="822.6" width="8.6" height="9.8" fill="#3b8b32"/><path d="M538.2,831.6 L539.6,825 L541.2,831.6Z" fill="#fff"/><rect x="541.6" y="824" width="2" height="1.6" fill="#fff"/>
<path d="M553.8,823.4 L551,831.6 L556.6,831.6Z" fill="#3f8a2e"/><circle cx="557.6" cy="823.6" r="1.2" fill="#2b2d35"/>
<rect x="563.6" y="823" width="8" height="8.6" fill="none" stroke="#2a8fd8" stroke-width="1.1" stroke-dasharray="1.2,0.8"/><rect x="566.2" y="825.6" width="2.8" height="3.2" fill="#2a8fd8"/>
<circle cx="579.2" cy="825.0" r="1.8" fill="none" stroke="#2a8fd8" stroke-width="1.1"/>
<circle cx="583.8" cy="825.0" r="1.8" fill="none" stroke="#2a8fd8" stroke-width="1.1"/>
<circle cx="579.2" cy="830.0" r="1.8" fill="none" stroke="#2a8fd8" stroke-width="1.1"/>
<circle cx="583.8" cy="830.0" r="1.8" fill="none" stroke="#2a8fd8" stroke-width="1.1"/>
<circle cx="594.4" cy="826.4" r="2.4" fill="none" stroke="#2b2d35" stroke-width="1"/><path d="M595.6,828.6 L598,831.4 L599.4,831.4" stroke="#2b2d35" stroke-width="1.2" fill="none"/>
<rect x="607" y="821" width="44.5" height="13" fill="#fff"/>
<text x="609.10" y="830.32" font-size="8.60" fill="#3a3c44" stroke="#3a3c44" stroke-width="0.1" textLength="29.30" lengthAdjust="spacingAndGlyphs">standard</text>
<path d="M639.7,825.6 L644.8,825.6 L642.3,828.6Z" fill="#2b2d35"/>
<circle cx="661.8" cy="827.5" r="3.4" fill="none" stroke="#5a5b62" stroke-width="1.6" stroke-dasharray="1.2,0.9"/><circle cx="661.8" cy="827.5" r="1.5" fill="#5a5b62"/>
<rect x="674.8" y="823" width="2" height="2" fill="#2a8fd8"/><path d="M678.6,825.8 L678.6,831.6 L680,830.4 L681,832.2 L682,831.8 L681,830 L682.8,829.8Z" fill="#2b2d35"/>
<path d="M688.8,827.5 Q692.8,823.6 696.8,827.5 Q692.8,831.4 688.8,827.5Z" fill="#2b2d35"/><circle cx="692.8" cy="827.5" r="1.1" fill="#f0f0f5"/>
<rect x="708" y="823.2" width="8.6" height="8.6" fill="none" stroke="#2b2d35" stroke-width="1.2"/><path d="M709.6,824.8 L715,830.2 M715,824.8 L709.6,830.2" stroke="#2b2d35" stroke-width="1"/>
<rect x="722" y="823.4" width="8.4" height="8.2" fill="none" stroke="#2b2d35" stroke-width="1.3"/>
<circle cx="740.5" cy="827.5" r="3.8" fill="none" stroke="#2b2d35" stroke-width="1.1"/>
<path d="M754,823.6 L750.2,831.4 L757.8,831.4Z" fill="none" stroke="#2b2d35" stroke-width="1.1"/>
<path d="M764,823.4 L771.6,831.6 M771.6,823.4 L764,831.6" stroke="#2b2d35" stroke-width="1.1"/>
<path d="M777.6,831.2 L785.6,831.2 L785.6,823.4 M781.2,829 L783,829 L783,827" stroke="#2b2d35" stroke-width="1.2" fill="none"/>
<path d="M792.4,831.6 L795.6,823.4 M796,831.6 L799.2,823.4" stroke="#2b2d35" stroke-width="1.1"/>
<path d="M805,827.5 L809,827.5 M809.4,823.8 L814.4,823.8 L809.6,831.2 L814.4,831.2 Z" stroke="#2b2d35" stroke-width="1" fill="none"/>
<path d="M819.6,829.6 L823.4,825.4 L827.4,829.6" stroke="#2b2d35" stroke-width="1.2" fill="none"/>
<path d="M836.4,823.8 L842.8,823.8 L836.6,831.2 L842.8,831.2 Z" stroke="#2b2d35" stroke-width="1.1" fill="none"/>
<path d="M849.2,831.6 L856.6,824.2 M851.4,824 L856.8,824 L856.8,829.4" stroke="#2b2d35" stroke-width="1.2" fill="none"/>
<rect x="865.6" y="823" width="8.8" height="8.8" fill="#5a5b62"/><rect x="867.8" y="825.2" width="4.4" height="4.4" fill="#f08a30"/>
<rect x="880.2" y="823.6" width="7.6" height="7.6" fill="#5a5b62"/>
<circle cx="880.2" cy="823.6" r="1.5" fill="#f08a30"/>
<circle cx="887.8" cy="823.6" r="1.5" fill="#f08a30"/>
<circle cx="880.2" cy="831.2" r="1.5" fill="#f08a30"/>
<circle cx="887.8" cy="831.2" r="1.5" fill="#f08a30"/>
<rect x="895.6" y="821" width="31.4" height="13" fill="#fff"/>
<text x="898.20" y="830.32" font-size="8.60" fill="#3a3c44" stroke="#3a3c44" stroke-width="0.1" textLength="16.20" lengthAdjust="spacingAndGlyphs">Auto</text>
<path d="M915.2,825.6 L920.4,825.6 L917.8,828.6Z" fill="#2b2d35"/>
<rect x="933.0" y="821" width="50.0" height="13" fill="#fff"/>
<text x="935.60" y="830.32" font-size="8.60" fill="#3a3c44" stroke="#3a3c44" stroke-width="0.1" textLength="34.20" lengthAdjust="spacingAndGlyphs">View plane</text>
<path d="M971.2,825.6 L976.4,825.6 L973.8,828.6Z" fill="#2b2d35"/>
<rect x="988.5" y="821" width="61.5" height="13" fill="#fff"/>
<text x="991.10" y="830.32" font-size="8.60" fill="#3a3c44" stroke="#3a3c44" stroke-width="0.1" textLength="46.20" lengthAdjust="spacingAndGlyphs">Outline planes</text>
<path d="M1038.3,825.6 L1043.5,825.6 L1040.9,828.6Z" fill="#2b2d35"/>
<path d="M1058,827.5 Q1061.6,823.8 1065.2,827.5 Q1061.6,831.2 1058,827.5Z" fill="#2b2d35"/><circle cx="1061.6" cy="827.5" r="1.1" fill="#f0f0f5"/>
<text x="1224.25" y="850.13" font-size="9.80" fill="#ffffff" stroke="#ffffff" stroke-width="0.1" textLength="25.25" lengthAdjust="spacingAndGlyphs">0 Pan</text>
<text x="1265.00" y="850.13" font-size="9.80" fill="#ffffff" stroke="#ffffff" stroke-width="0.1" textLength="112.00" lengthAdjust="spacingAndGlyphs">Current phase: 1, Phase 1</text>
<text x="1402.50" y="850.13" font-size="9.80" fill="#ffffff" stroke="#ffffff" stroke-width="0.1" textLength="145.00" lengthAdjust="spacingAndGlyphs">0 objects and 0 handles selected</text>
<line x1="239.62" y1="200.35" x2="979.00" y2="87.97" stroke="#b4b4bc" stroke-width="0.6" stroke-dasharray="3,1" opacity="0.7"/>
<line x1="239.62" y1="200.35" x2="979.00" y2="87.97" stroke="#8ee08e" stroke-width="0.8" stroke-dasharray="18,14" opacity="0.7"/>
<line x1="979.00" y1="87.97" x2="1299.38" y2="243.02" stroke="#b4b4bc" stroke-width="0.6" stroke-dasharray="3,1" opacity="0.7"/>
<line x1="979.00" y1="87.97" x2="1299.38" y2="243.02" stroke="#8ee08e" stroke-width="0.8" stroke-dasharray="18,14" opacity="0.7"/>
<line x1="979.00" y1="87.97" x2="979.00" y2="532.78" stroke="#b4b4bc" stroke-width="0.6" stroke-dasharray="3,1" opacity="0.7"/>
<line x1="979.00" y1="87.97" x2="979.00" y2="532.78" stroke="#8ee08e" stroke-width="0.8" stroke-dasharray="18,14" opacity="0.7"/>
<line x1="239.62" y1="645.17" x2="979.00" y2="532.78" stroke="#b4b4bc" stroke-width="0.6" stroke-dasharray="3,1" opacity="0.7"/>
<line x1="239.62" y1="645.17" x2="979.00" y2="532.78" stroke="#8ee08e" stroke-width="0.8" stroke-dasharray="18,14" opacity="0.7"/>
<line x1="979.00" y1="532.78" x2="1299.38" y2="687.83" stroke="#b4b4bc" stroke-width="0.6" stroke-dasharray="3,1" opacity="0.7"/>
<line x1="979.00" y1="532.78" x2="1299.38" y2="687.83" stroke="#8ee08e" stroke-width="0.8" stroke-dasharray="18,14" opacity="0.7"/>
<line x1="239.62" y1="200.35" x2="239.62" y2="645.17" stroke="#b4b4bc" stroke-width="0.6" stroke-dasharray="3,1" opacity="0.7"/>
<line x1="239.62" y1="200.35" x2="239.62" y2="645.17" stroke="#8ee08e" stroke-width="0.8" stroke-dasharray="18,14" opacity="0.7"/>
<line x1="1299.38" y1="243.02" x2="1299.38" y2="687.83" stroke="#b4b4bc" stroke-width="0.6" stroke-dasharray="3,1" opacity="0.7"/>
<line x1="1299.38" y1="243.02" x2="1299.38" y2="687.83" stroke="#8ee08e" stroke-width="0.8" stroke-dasharray="18,14" opacity="0.7"/>
<line x1="239.62" y1="645.17" x2="560.00" y2="800.22" stroke="#b4b4bc" stroke-width="0.6" stroke-dasharray="3,1" opacity="0.7"/>
<line x1="239.62" y1="645.17" x2="560.00" y2="800.22" stroke="#8ee08e" stroke-width="0.8" stroke-dasharray="18,14" opacity="0.7"/>
<line x1="560.00" y1="800.22" x2="1299.38" y2="687.83" stroke="#b4b4bc" stroke-width="0.6" stroke-dasharray="3,1" opacity="0.7"/>
<line x1="560.00" y1="800.22" x2="1299.38" y2="687.83" stroke="#8ee08e" stroke-width="0.8" stroke-dasharray="18,14" opacity="0.7"/>
<line x1="239.62" y1="200.35" x2="560.00" y2="355.40" stroke="#b4b4bc" stroke-width="0.6" stroke-dasharray="3,1" opacity="0.7"/>
<line x1="239.62" y1="200.35" x2="560.00" y2="355.40" stroke="#8ee08e" stroke-width="0.8" stroke-dasharray="18,14" opacity="0.7"/>
<line x1="554.10" y1="614.35" x2="1247.97" y2="508.88" stroke="#55565c" stroke-width="0.75" stroke-dasharray="4.5,2,1,2" fill="none"/>
<line x1="463.70" y1="570.60" x2="1157.57" y2="465.13" stroke="#55565c" stroke-width="0.75" stroke-dasharray="4.5,2,1,2" fill="none"/>
<line x1="373.30" y1="526.85" x2="1067.17" y2="421.38" stroke="#55565c" stroke-width="0.75" stroke-dasharray="4.5,2,1,2" fill="none"/>
<line x1="282.90" y1="483.10" x2="976.77" y2="377.63" stroke="#55565c" stroke-width="0.75" stroke-dasharray="4.5,2,1,2" fill="none"/>
<line x1="588.24" y1="614.34" x2="293.53" y2="471.71" stroke="#55565c" stroke-width="0.75" stroke-dasharray="4.5,2,1,2" fill="none"/>
<line x1="750.74" y1="589.64" x2="456.03" y2="447.01" stroke="#55565c" stroke-width="0.75" stroke-dasharray="4.5,2,1,2" fill="none"/>
<line x1="913.24" y1="564.94" x2="618.53" y2="422.31" stroke="#55565c" stroke-width="0.75" stroke-dasharray="4.5,2,1,2" fill="none"/>
<line x1="1075.74" y1="540.24" x2="781.03" y2="397.61" stroke="#55565c" stroke-width="0.75" stroke-dasharray="4.5,2,1,2" fill="none"/>
<line x1="1238.24" y1="515.54" x2="943.53" y2="372.91" stroke="#55565c" stroke-width="0.75" stroke-dasharray="4.5,2,1,2" fill="none"/>
<path d="M951.1,422.8 L951.1,416.5 L932.3,407.4 L932.3,413.7 Z" fill="#a77250" stroke="#5a3a26" stroke-width="0.60" stroke-linejoin="round"/>
<path d="M951.1,422.8 L985.5,417.5 L985.5,411.3 L951.1,416.5 Z" fill="#aa7650" stroke="#5a3a26" stroke-width="0.60" stroke-linejoin="round"/>
<path d="M951.1,416.5 L985.5,411.3 L966.7,402.2 L932.3,407.4 Z" fill="#93623e" stroke="#5a3a26" stroke-width="0.60" stroke-linejoin="round"/>
<path d="M953.7,411.7 L953.7,380.9 L948.8,378.5 L948.8,409.3 Z" fill="#a77250" stroke="#5a3a26" stroke-width="0.60" stroke-linejoin="round"/>
<path d="M798.3,421.2 L798.3,406.0 L794.5,404.1 L794.5,419.3 Z" fill="#a77250" stroke="#a77250" stroke-width="0.3"/>
<path d="M798.3,421.2 L960.8,396.5 L960.8,381.3 L798.3,406.0 Z" fill="#aa7650" stroke="#aa7650" stroke-width="0.3"/>
<path d="M798.3,421.2L960.8,396.5M960.8,396.5L960.8,381.3M960.8,381.3L798.3,406.0" fill="none" stroke="#5a3a26" stroke-width="0.60" stroke-linecap="round"/>
<path d="M798.3,406.0 L960.8,381.3 L957.0,379.4 L794.5,404.1 Z" fill="#93623e" stroke="#93623e" stroke-width="0.3"/>
<path d="M798.3,406.0L960.8,381.3M960.8,381.3L957.0,379.4M957.0,379.4L794.5,404.1" fill="none" stroke="#5a3a26" stroke-width="0.60" stroke-linecap="round"/>
<path d="M804.2,403.6 L950.4,381.4" fill="none" stroke="#6b4428" stroke-width="0.70" stroke-dasharray="1.6,1.1"/>
<path d="M953.7,411.7 L969.0,409.4 L969.0,378.6 L953.7,380.9 Z" fill="#aa7650" stroke="#5a3a26" stroke-width="0.60" stroke-linejoin="round"/>
<path d="M1050.1,281.5 L1050.1,273.3 L959.7,229.5 L959.7,237.7 Z" fill="#5f8a3a" stroke="#5f8a3a" stroke-width="0.3"/>
<path d="M1050.1,273.3L959.7,229.5M959.7,229.5L959.7,237.7M959.7,237.7L1050.1,281.5" fill="none" stroke="#2c4a1c" stroke-width="0.60" stroke-linecap="round"/>
<path d="M1050.1,281.5 L1054.2,280.9 L1054.2,272.6 L1050.1,273.3 Z" fill="#6f9b46" stroke="#6f9b46" stroke-width="0.3"/>
<path d="M1050.1,273.3 L1054.2,272.6 L963.8,228.9 L959.7,229.5 Z" fill="#78a44c" stroke="#78a44c" stroke-width="0.3"/>
<path d="M1054.2,272.6L963.8,228.9M963.8,228.9L959.7,229.5M959.7,229.5L1050.1,273.3" fill="none" stroke="#2c4a1c" stroke-width="0.60" stroke-linecap="round"/>
<path d="M955.9,181.2 L931.6,182.5 L955.9,191.6 Z" fill="#6f9b46" stroke="#2c4a1c" stroke-width="0.60" stroke-linejoin="round"/>
<path d="M1048.5,439.8 L1048.5,424.6 L958.1,380.8 L958.1,396.0 Z" fill="#a77250" stroke="#a77250" stroke-width="0.3"/>
<path d="M1048.5,424.6L958.1,380.8M958.1,380.8L958.1,396.0M958.1,396.0L1048.5,439.8" fill="none" stroke="#5a3a26" stroke-width="0.60" stroke-linecap="round"/>
<path d="M1048.5,439.8 L1055.0,438.8 L1055.0,423.6 L1048.5,424.6 Z" fill="#aa7650" stroke="#aa7650" stroke-width="0.3"/>
<path d="M1048.5,424.6 L1055.0,423.6 L964.6,379.8 L958.1,380.8 Z" fill="#93623e" stroke="#93623e" stroke-width="0.3"/>
<path d="M1055.0,423.6L964.6,379.8M964.6,379.8L958.1,380.8M958.1,380.8L1048.5,424.6" fill="none" stroke="#5a3a26" stroke-width="0.60" stroke-linecap="round"/>
<path d="M1047.2,421.9 L965.9,382.5" fill="none" stroke="#6b4428" stroke-width="0.70" stroke-dasharray="1.6,1.1"/>
<path d="M878.8,185.6 L878.8,178.1 L876.5,177.0 L876.5,184.5 Z" fill="#5f8a3a" stroke="#5f8a3a" stroke-width="0.3"/>
<path d="M878.8,185.6 L960.0,181.3 L960.0,173.8 L878.8,178.1 Z" fill="#6f9b46" stroke="#6f9b46" stroke-width="0.3"/>
<path d="M878.8,185.6L960.0,181.3M960.0,181.3L960.0,173.8M960.0,173.8L878.8,178.1" fill="none" stroke="#2c4a1c" stroke-width="0.60" stroke-linecap="round"/>
<path d="M878.8,178.1 L960.0,173.8 L957.8,172.7 L876.5,177.0 Z" fill="#78a44c" stroke="#78a44c" stroke-width="0.3"/>
<path d="M878.8,178.1L960.0,173.8M960.0,173.8L957.8,172.7M957.8,172.7L876.5,177.0" fill="none" stroke="#2c4a1c" stroke-width="0.60" stroke-linecap="round"/>
<path d="M953.7,380.9 L969.0,378.6 L964.1,376.2 L948.8,378.5 Z" fill="#93623e" stroke="#5a3a26" stroke-width="0.60" stroke-linejoin="round"/>
<path d="M956.9,379.8 L956.9,174.5 L953.9,173.1 L953.9,378.4 Z" fill="#7b4490" stroke="#2e1838" stroke-width="0.80" stroke-linejoin="round"/>
<path d="M956.9,379.8 L963.9,378.8 L963.9,173.4 L956.9,174.5 Z" fill="#9756ac" stroke="#2e1838" stroke-width="0.80" stroke-linejoin="round"/>
<path d="M956.9,174.5 L963.9,173.4 L960.9,172.0 L953.9,173.1 Z" fill="#8b4ca0" stroke="#2e1838" stroke-width="0.80" stroke-linejoin="round"/>
<path d="M797.5,189.9 L797.5,182.4 L795.3,181.3 L795.3,188.8 Z" fill="#5f8a3a" stroke="#5f8a3a" stroke-width="0.3"/>
<path d="M797.5,189.9 L878.8,185.6 L878.8,178.1 L797.5,182.4 Z" fill="#6f9b46" stroke="#6f9b46" stroke-width="0.3"/>
<path d="M797.5,189.9L878.8,185.6M878.8,178.1L797.5,182.4" fill="none" stroke="#2c4a1c" stroke-width="0.60" stroke-linecap="round"/>
<path d="M797.5,182.4 L878.8,178.1 L876.5,177.0 L795.3,181.3 Z" fill="#78a44c" stroke="#78a44c" stroke-width="0.3"/>
<path d="M797.5,182.4L878.8,178.1M876.5,177.0L795.3,181.3" fill="none" stroke="#2c4a1c" stroke-width="0.60" stroke-linecap="round"/>
<path d="M635.8,445.9 L635.8,430.7 L632.0,428.8 L632.0,444.0 Z" fill="#a77250" stroke="#a77250" stroke-width="0.3"/>
<path d="M635.8,445.9 L798.3,421.2 L798.3,406.0 L635.8,430.7 Z" fill="#aa7650" stroke="#aa7650" stroke-width="0.3"/>
<path d="M635.8,445.9L798.3,421.2M798.3,406.0L635.8,430.7" fill="none" stroke="#5a3a26" stroke-width="0.60" stroke-linecap="round"/>
<path d="M635.8,430.7 L798.3,406.0 L794.5,404.1 L632.0,428.8 Z" fill="#93623e" stroke="#93623e" stroke-width="0.3"/>
<path d="M635.8,430.7L798.3,406.0M794.5,404.1L632.0,428.8" fill="none" stroke="#5a3a26" stroke-width="0.60" stroke-linecap="round"/>
<path d="M641.7,428.3 L787.9,406.1" fill="none" stroke="#6b4428" stroke-width="0.70" stroke-dasharray="1.6,1.1"/>
<path d="M1041.5,466.5 L1041.5,460.3 L1022.7,451.2 L1022.7,457.4 Z" fill="#a77250" stroke="#5a3a26" stroke-width="0.60" stroke-linejoin="round"/>
<path d="M1041.5,466.5 L1075.9,461.3 L1075.9,455.0 L1041.5,460.3 Z" fill="#aa7650" stroke="#5a3a26" stroke-width="0.60" stroke-linejoin="round"/>
<path d="M1041.5,460.3 L1075.9,455.0 L1057.1,445.9 L1022.7,451.2 Z" fill="#93623e" stroke="#5a3a26" stroke-width="0.60" stroke-linejoin="round"/>
<path d="M1045.7,218.3 L1045.7,211.8 L953.5,167.2 L953.5,173.7 Z" fill="#3aac95" stroke="#1c4a3d" stroke-width="0.50" stroke-linejoin="round"/>
<path d="M1045.7,218.3 L1048.3,217.9 L1048.3,211.4 L1045.7,211.8 Z" fill="#2f8e7b" stroke="#1c4a3d" stroke-width="0.50" stroke-linejoin="round"/>
<path d="M1045.7,211.8 L1048.3,211.4 L956.1,166.8 L953.5,167.2 Z" fill="#7d8583" stroke="#1c4a3d" stroke-width="0.50" stroke-linejoin="round"/>
<path d="M1030.2,219.1 L1030.2,212.7 L938.0,168.0 L938.0,174.5 Z" fill="#3aac95" stroke="#1c4a3d" stroke-width="0.50" stroke-linejoin="round"/>
<path d="M1030.2,219.1 L1032.8,218.7 L1032.8,212.3 L1030.2,212.7 Z" fill="#2f8e7b" stroke="#1c4a3d" stroke-width="0.50" stroke-linejoin="round"/>
<path d="M1030.2,212.7 L1032.8,212.3 L940.6,167.6 L938.0,168.0 Z" fill="#7d8583" stroke="#1c4a3d" stroke-width="0.50" stroke-linejoin="round"/>
<path d="M626.1,472.2 L626.1,465.9 L607.3,456.8 L607.3,463.1 Z" fill="#a77250" stroke="#5a3a26" stroke-width="0.60" stroke-linejoin="round"/>
<path d="M626.1,472.2 L660.5,466.9 L660.5,460.7 L626.1,465.9 Z" fill="#aa7650" stroke="#5a3a26" stroke-width="0.60" stroke-linejoin="round"/>
<path d="M626.1,465.9 L660.5,460.7 L641.7,451.6 L607.3,456.8 Z" fill="#93623e" stroke="#5a3a26" stroke-width="0.60" stroke-linejoin="round"/>
<path d="M1014.7,219.9 L1014.7,213.5 L922.5,168.9 L922.5,175.3 Z" fill="#3aac95" stroke="#1c4a3d" stroke-width="0.50" stroke-linejoin="round"/>
<path d="M1014.7,219.9 L1017.3,219.5 L1017.3,213.1 L1014.7,213.5 Z" fill="#2f8e7b" stroke="#1c4a3d" stroke-width="0.50" stroke-linejoin="round"/>
<path d="M1014.7,213.5 L1017.3,213.1 L925.1,168.5 L922.5,168.9 Z" fill="#7d8583" stroke="#1c4a3d" stroke-width="0.50" stroke-linejoin="round"/>
<path d="M628.7,461.1 L628.7,430.3 L623.8,427.9 L623.8,458.7 Z" fill="#a77250" stroke="#5a3a26" stroke-width="0.60" stroke-linejoin="round"/>
<path d="M999.2,220.7 L999.2,214.3 L907.0,169.7 L907.0,176.1 Z" fill="#3aac95" stroke="#1c4a3d" stroke-width="0.50" stroke-linejoin="round"/>
<path d="M999.2,220.7 L1001.8,220.4 L1001.8,213.9 L999.2,214.3 Z" fill="#2f8e7b" stroke="#1c4a3d" stroke-width="0.50" stroke-linejoin="round"/>
<path d="M999.2,214.3 L1001.8,213.9 L909.6,169.3 L907.0,169.7 Z" fill="#7d8583" stroke="#1c4a3d" stroke-width="0.50" stroke-linejoin="round"/>
<path d="M716.3,210.3 L716.3,202.8 L714.0,201.7 L714.0,209.2 Z" fill="#5f8a3a" stroke="#5f8a3a" stroke-width="0.3"/>
<path d="M716.3,210.3 L797.5,189.9 L797.5,182.4 L716.3,202.8 Z" fill="#6f9b46" stroke="#6f9b46" stroke-width="0.3"/>
<path d="M716.3,210.3L797.5,189.9M797.5,182.4L716.3,202.8" fill="none" stroke="#2c4a1c" stroke-width="0.60" stroke-linecap="round"/>
<path d="M716.3,202.8 L797.5,182.4 L795.3,181.3 L714.0,201.7 Z" fill="#78a44c" stroke="#78a44c" stroke-width="0.3"/>
<path d="M716.3,202.8L797.5,182.4M795.3,181.3L714.0,201.7" fill="none" stroke="#2c4a1c" stroke-width="0.60" stroke-linecap="round"/>
<path d="M983.7,221.6 L983.7,215.1 L891.5,170.5 L891.5,176.9 Z" fill="#3aac95" stroke="#1c4a3d" stroke-width="0.50" stroke-linejoin="round"/>
<path d="M983.7,221.6 L986.3,221.2 L986.3,214.7 L983.7,215.1 Z" fill="#2f8e7b" stroke="#1c4a3d" stroke-width="0.50" stroke-linejoin="round"/>
<path d="M983.7,215.1 L986.3,214.7 L894.1,170.1 L891.5,170.5 Z" fill="#7d8583" stroke="#1c4a3d" stroke-width="0.50" stroke-linejoin="round"/>
<path d="M968.2,222.4 L968.2,215.9 L875.9,171.3 L875.9,177.8 Z" fill="#3aac95" stroke="#1c4a3d" stroke-width="0.50" stroke-linejoin="round"/>
<path d="M968.2,222.4 L970.8,222.0 L970.8,215.5 L968.2,215.9 Z" fill="#2f8e7b" stroke="#1c4a3d" stroke-width="0.50" stroke-linejoin="round"/>
<path d="M968.2,215.9 L970.8,215.5 L878.5,170.9 L875.9,171.3 Z" fill="#7d8583" stroke="#1c4a3d" stroke-width="0.50" stroke-linejoin="round"/>
<path d="M952.6,223.2 L952.6,216.8 L860.4,172.1 L860.4,178.6 Z" fill="#3aac95" stroke="#1c4a3d" stroke-width="0.50" stroke-linejoin="round"/>
<path d="M952.6,223.2 L955.2,222.8 L955.2,216.4 L952.6,216.8 Z" fill="#2f8e7b" stroke="#1c4a3d" stroke-width="0.50" stroke-linejoin="round"/>
<path d="M952.6,216.8 L955.2,216.4 L863.0,171.7 L860.4,172.1 Z" fill="#7d8583" stroke="#1c4a3d" stroke-width="0.50" stroke-linejoin="round"/>
<path d="M937.1,224.0 L937.1,217.6 L844.9,173.0 L844.9,179.4 Z" fill="#3aac95" stroke="#1c4a3d" stroke-width="0.50" stroke-linejoin="round"/>
<path d="M937.1,224.0 L939.7,223.6 L939.7,217.2 L937.1,217.6 Z" fill="#2f8e7b" stroke="#1c4a3d" stroke-width="0.50" stroke-linejoin="round"/>
<path d="M937.1,217.6 L939.7,217.2 L847.5,172.6 L844.9,173.0 Z" fill="#7d8583" stroke="#1c4a3d" stroke-width="0.50" stroke-linejoin="round"/>
<path d="M635.0,230.7 L635.0,223.2 L632.8,222.1 L632.8,229.6 Z" fill="#5f8a3a" stroke="#5f8a3a" stroke-width="0.3"/>
<path d="M635.0,230.7 L716.3,210.3 L716.3,202.8 L635.0,223.2 Z" fill="#6f9b46" stroke="#6f9b46" stroke-width="0.3"/>
<path d="M635.0,230.7L716.3,210.3M716.3,202.8L635.0,223.2" fill="none" stroke="#2c4a1c" stroke-width="0.60" stroke-linecap="round"/>
<path d="M635.0,223.2 L716.3,202.8 L714.0,201.7 L632.8,222.1 Z" fill="#78a44c" stroke="#78a44c" stroke-width="0.3"/>
<path d="M635.0,223.2L716.3,202.8M714.0,201.7L632.8,222.1" fill="none" stroke="#2c4a1c" stroke-width="0.60" stroke-linecap="round"/>
<path d="M921.6,224.8 L921.6,218.4 L829.4,173.8 L829.4,180.2 Z" fill="#3aac95" stroke="#1c4a3d" stroke-width="0.50" stroke-linejoin="round"/>
<path d="M921.6,224.8 L924.2,224.5 L924.2,218.0 L921.6,218.4 Z" fill="#2f8e7b" stroke="#1c4a3d" stroke-width="0.50" stroke-linejoin="round"/>
<path d="M921.6,218.4 L924.2,218.0 L832.0,173.4 L829.4,173.8 Z" fill="#7d8583" stroke="#1c4a3d" stroke-width="0.50" stroke-linejoin="round"/>
<path d="M473.3,470.6 L473.3,455.4 L469.5,453.5 L469.5,468.7 Z" fill="#a77250" stroke="#a77250" stroke-width="0.3"/>
<path d="M473.3,470.6 L635.8,445.9 L635.8,430.7 L473.3,455.4 Z" fill="#aa7650" stroke="#aa7650" stroke-width="0.3"/>
<path d="M473.3,470.6L635.8,445.9M635.8,430.7L473.3,455.4" fill="none" stroke="#5a3a26" stroke-width="0.60" stroke-linecap="round"/>
<path d="M473.3,455.4 L635.8,430.7 L632.0,428.8 L469.5,453.5 Z" fill="#93623e" stroke="#93623e" stroke-width="0.3"/>
<path d="M473.3,455.4L635.8,430.7M632.0,428.8L469.5,453.5" fill="none" stroke="#5a3a26" stroke-width="0.60" stroke-linecap="round"/>
<path d="M479.2,453.0 L625.4,430.8" fill="none" stroke="#6b4428" stroke-width="0.70" stroke-dasharray="1.6,1.1"/>
<path d="M1044.1,455.4 L1059.4,453.1 L1059.4,422.3 L1044.1,424.7 Z" fill="#aa7650" stroke="#5a3a26" stroke-width="0.60" stroke-linejoin="round"/>
<path d="M1140.5,325.2 L1140.5,317.0 L1050.1,273.3 L1050.1,281.5 Z" fill="#5f8a3a" stroke="#5f8a3a" stroke-width="0.3"/>
<path d="M1140.5,317.0L1050.1,273.3M1050.1,281.5L1140.5,325.2" fill="none" stroke="#2c4a1c" stroke-width="0.60" stroke-linecap="round"/>
<path d="M1140.5,325.2 L1144.6,324.6 L1144.6,316.4 L1140.5,317.0 Z" fill="#6f9b46" stroke="#6f9b46" stroke-width="0.3"/>
<path d="M1140.5,317.0 L1144.6,316.4 L1054.2,272.6 L1050.1,273.3 Z" fill="#78a44c" stroke="#78a44c" stroke-width="0.3"/>
<path d="M1144.6,316.4L1054.2,272.6M1050.1,273.3L1140.5,317.0" fill="none" stroke="#2c4a1c" stroke-width="0.60" stroke-linecap="round"/>
<path d="M906.1,225.7 L906.1,219.2 L813.9,174.6 L813.9,181.0 Z" fill="#3aac95" stroke="#1c4a3d" stroke-width="0.50" stroke-linejoin="round"/>
<path d="M906.1,225.7 L908.7,225.3 L908.7,218.8 L906.1,219.2 Z" fill="#2f8e7b" stroke="#1c4a3d" stroke-width="0.50" stroke-linejoin="round"/>
<path d="M906.1,219.2 L908.7,218.8 L816.5,174.2 L813.9,174.6 Z" fill="#7d8583" stroke="#1c4a3d" stroke-width="0.50" stroke-linejoin="round"/>
<path d="M1046.3,225.0 L1022.0,226.3 L1046.3,235.3 Z" fill="#6f9b46" stroke="#2c4a1c" stroke-width="0.60" stroke-linejoin="round"/>
<path d="M637.9,229.6 L637.9,239.9 L662.3,223.4 Z" fill="#6f9b46" stroke="#2c4a1c" stroke-width="0.60" stroke-linejoin="round"/>
<path d="M890.6,226.5 L890.6,220.0 L798.3,175.4 L798.3,181.9 Z" fill="#3aac95" stroke="#1c4a3d" stroke-width="0.50" stroke-linejoin="round"/>
<path d="M890.6,226.5 L893.2,226.1 L893.2,219.6 L890.6,220.0 Z" fill="#2f8e7b" stroke="#1c4a3d" stroke-width="0.50" stroke-linejoin="round"/>
<path d="M890.6,220.0 L893.2,219.6 L801.0,175.0 L798.3,175.4 Z" fill="#7d8583" stroke="#1c4a3d" stroke-width="0.50" stroke-linejoin="round"/>
<path d="M1138.9,483.5 L1138.9,468.3 L1048.5,424.6 L1048.5,439.8 Z" fill="#a77250" stroke="#a77250" stroke-width="0.3"/>
<path d="M1138.9,468.3L1048.5,424.6M1048.5,439.8L1138.9,483.5" fill="none" stroke="#5a3a26" stroke-width="0.60" stroke-linecap="round"/>
<path d="M1138.9,483.5 L1145.4,482.6 L1145.4,467.3 L1138.9,468.3 Z" fill="#aa7650" stroke="#aa7650" stroke-width="0.3"/>
<path d="M1138.9,468.3 L1145.4,467.3 L1055.0,423.6 L1048.5,424.6 Z" fill="#93623e" stroke="#93623e" stroke-width="0.3"/>
<path d="M1145.4,467.3L1055.0,423.6M1048.5,424.6L1138.9,468.3" fill="none" stroke="#5a3a26" stroke-width="0.60" stroke-linecap="round"/>
<path d="M884.6,227.4 L884.6,221.8 L792.4,177.2 L792.4,182.8 Z" fill="#3aac95" stroke="#1c4a3d" stroke-width="0.50" stroke-linejoin="round"/>
<path d="M884.6,227.4 L886.1,227.2 L886.1,221.6 L884.6,221.8 Z" fill="#2f8e7b" stroke="#1c4a3d" stroke-width="0.50" stroke-linejoin="round"/>
<path d="M884.6,221.8 L886.1,221.6 L793.9,177.0 L792.4,177.2 Z" fill="#1f5246" stroke="#1c4a3d" stroke-width="0.50" stroke-linejoin="round"/>
<path d="M1137.6,465.6 L1056.3,426.3" fill="none" stroke="#6b4428" stroke-width="0.70" stroke-dasharray="1.6,1.1"/>
<path d="M628.7,461.1 L644.0,458.8 L644.0,428.0 L628.7,430.3 Z" fill="#aa7650" stroke="#5a3a26" stroke-width="0.60" stroke-linejoin="round"/>
<path d="M725.1,330.9 L725.1,322.7 L634.7,278.9 L634.7,287.1 Z" fill="#5f8a3a" stroke="#5f8a3a" stroke-width="0.3"/>
<path d="M725.1,322.7L634.7,278.9M634.7,278.9L634.7,287.1M634.7,287.1L725.1,330.9" fill="none" stroke="#2c4a1c" stroke-width="0.60" stroke-linecap="round"/>
<path d="M725.1,330.9 L729.2,330.3 L729.2,322.0 L725.1,322.7 Z" fill="#6f9b46" stroke="#6f9b46" stroke-width="0.3"/>
<path d="M725.1,322.7 L729.2,322.0 L638.8,278.3 L634.7,278.9 Z" fill="#78a44c" stroke="#78a44c" stroke-width="0.3"/>
<path d="M729.2,322.0L638.8,278.3M638.8,278.3L634.7,278.9M634.7,278.9L725.1,322.7" fill="none" stroke="#2c4a1c" stroke-width="0.60" stroke-linecap="round"/>
<path d="M969.2,229.4 L969.2,221.8 L966.9,220.7 L966.9,228.3 Z" fill="#5f8a3a" stroke="#5f8a3a" stroke-width="0.3"/>
<path d="M969.2,229.4 L1050.4,225.1 L1050.4,217.5 L969.2,221.8 Z" fill="#6f9b46" stroke="#6f9b46" stroke-width="0.3"/>
<path d="M969.2,229.4L1050.4,225.1M1050.4,225.1L1050.4,217.5M1050.4,217.5L969.2,221.8" fill="none" stroke="#2c4a1c" stroke-width="0.60" stroke-linecap="round"/>
<path d="M969.2,221.8 L1050.4,217.5 L1048.2,216.5 L966.9,220.7 Z" fill="#78a44c" stroke="#78a44c" stroke-width="0.3"/>
<path d="M969.2,221.8L1050.4,217.5M1050.4,217.5L1048.2,216.5M1048.2,216.5L966.9,220.7" fill="none" stroke="#2c4a1c" stroke-width="0.60" stroke-linecap="round"/>
<path d="M630.9,230.6 L606.6,231.9 L630.9,241.0 Z" fill="#6f9b46" stroke="#2c4a1c" stroke-width="0.60" stroke-linejoin="round"/>
<path d="M869.1,231.3 L869.1,225.7 L776.9,181.1 L776.9,186.7 Z" fill="#3aac95" stroke="#1c4a3d" stroke-width="0.50" stroke-linejoin="round"/>
<path d="M869.1,231.3 L870.6,231.1 L870.6,225.5 L869.1,225.7 Z" fill="#2f8e7b" stroke="#1c4a3d" stroke-width="0.50" stroke-linejoin="round"/>
<path d="M869.1,225.7 L870.6,225.5 L778.4,180.9 L776.9,181.1 Z" fill="#1f5246" stroke="#1c4a3d" stroke-width="0.50" stroke-linejoin="round"/>
<path d="M1044.1,424.7 L1059.4,422.3 L1054.5,420.0 L1039.2,422.3 Z" fill="#93623e" stroke="#5a3a26" stroke-width="0.60" stroke-linejoin="round"/>
<path d="M1047.3,423.6 L1047.3,218.2 L1044.3,216.8 L1044.3,422.1 Z" fill="#7b4490" stroke="#2e1838" stroke-width="0.80" stroke-linejoin="round"/>
<path d="M1047.3,423.6 L1054.3,422.5 L1054.3,217.2 L1047.3,218.2 Z" fill="#9756ac" stroke="#2e1838" stroke-width="0.80" stroke-linejoin="round"/>
<path d="M1047.3,218.2 L1054.3,217.2 L1051.3,215.7 L1044.3,216.8 Z" fill="#8b4ca0" stroke="#2e1838" stroke-width="0.80" stroke-linejoin="round"/>
<path d="M853.6,235.2 L853.6,229.6 L761.4,185.0 L761.4,190.6 Z" fill="#3aac95" stroke="#1c4a3d" stroke-width="0.50" stroke-linejoin="round"/>
<path d="M853.6,235.2 L855.1,235.0 L855.1,229.4 L853.6,229.6 Z" fill="#2f8e7b" stroke="#1c4a3d" stroke-width="0.50" stroke-linejoin="round"/>
<path d="M853.6,229.6 L855.1,229.4 L762.8,184.8 L761.4,185.0 Z" fill="#1f5246" stroke="#1c4a3d" stroke-width="0.50" stroke-linejoin="round"/>
<path d="M723.5,489.2 L723.5,474.0 L633.1,430.2 L633.1,445.4 Z" fill="#a77250" stroke="#a77250" stroke-width="0.3"/>
<path d="M723.5,474.0L633.1,430.2M633.1,430.2L633.1,445.4M633.1,445.4L723.5,489.2" fill="none" stroke="#5a3a26" stroke-width="0.60" stroke-linecap="round"/>
<path d="M723.5,489.2 L730.0,488.2 L730.0,473.0 L723.5,474.0 Z" fill="#aa7650" stroke="#aa7650" stroke-width="0.3"/>
<path d="M723.5,474.0 L730.0,473.0 L639.6,429.2 L633.1,430.2 Z" fill="#93623e" stroke="#93623e" stroke-width="0.3"/>
<path d="M730.0,473.0L639.6,429.2M639.6,429.2L633.1,430.2M633.1,430.2L723.5,474.0" fill="none" stroke="#5a3a26" stroke-width="0.60" stroke-linecap="round"/>
<path d="M1044.1,455.4 L1044.1,424.7 L1039.2,422.3 L1039.2,453.1 Z" fill="#a77250" stroke="#5a3a26" stroke-width="0.60" stroke-linejoin="round"/>
<path d="M722.2,471.3 L640.9,431.9" fill="none" stroke="#6b4428" stroke-width="0.70" stroke-dasharray="1.6,1.1"/>
<path d="M553.8,235.0 L553.8,227.5 L551.5,226.4 L551.5,233.9 Z" fill="#5f8a3a" stroke="#5f8a3a" stroke-width="0.3"/>
<path d="M553.8,235.0 L635.0,230.7 L635.0,223.2 L553.8,227.5 Z" fill="#6f9b46" stroke="#6f9b46" stroke-width="0.3"/>
<path d="M553.8,235.0L635.0,230.7M635.0,223.2L553.8,227.5" fill="none" stroke="#2c4a1c" stroke-width="0.60" stroke-linecap="round"/>
<path d="M553.8,227.5 L635.0,223.2 L632.8,222.1 L551.5,226.4 Z" fill="#78a44c" stroke="#78a44c" stroke-width="0.3"/>
<path d="M553.8,227.5L635.0,223.2M632.8,222.1L551.5,226.4" fill="none" stroke="#2c4a1c" stroke-width="0.60" stroke-linecap="round"/>
<path d="M838.1,239.1 L838.1,233.5 L745.9,188.9 L745.9,194.5 Z" fill="#3aac95" stroke="#1c4a3d" stroke-width="0.50" stroke-linejoin="round"/>
<path d="M838.1,239.1 L839.5,238.9 L839.5,233.3 L838.1,233.5 Z" fill="#2f8e7b" stroke="#1c4a3d" stroke-width="0.50" stroke-linejoin="round"/>
<path d="M838.1,233.5 L839.5,233.3 L747.3,188.7 L745.9,188.9 Z" fill="#1f5246" stroke="#1c4a3d" stroke-width="0.50" stroke-linejoin="round"/>
<path d="M628.7,430.3 L644.0,428.0 L639.1,425.6 L623.8,427.9 Z" fill="#93623e" stroke="#5a3a26" stroke-width="0.60" stroke-linejoin="round"/>
<path d="M631.9,429.2 L631.9,223.9 L628.9,222.5 L628.9,427.8 Z" fill="#7b4490" stroke="#2e1838" stroke-width="0.80" stroke-linejoin="round"/>
<path d="M631.9,429.2 L638.9,428.2 L638.9,222.8 L631.9,223.9 Z" fill="#9756ac" stroke="#2e1838" stroke-width="0.80" stroke-linejoin="round"/>
<path d="M631.9,223.9 L638.9,222.8 L635.9,221.4 L628.9,222.5 Z" fill="#8b4ca0" stroke="#2e1838" stroke-width="0.80" stroke-linejoin="round"/>
<path d="M822.6,243.0 L822.6,237.4 L730.3,192.8 L730.3,198.4 Z" fill="#3aac95" stroke="#1c4a3d" stroke-width="0.50" stroke-linejoin="round"/>
<path d="M822.6,243.0 L824.0,242.8 L824.0,237.2 L822.6,237.4 Z" fill="#2f8e7b" stroke="#1c4a3d" stroke-width="0.50" stroke-linejoin="round"/>
<path d="M822.6,237.4 L824.0,237.2 L731.8,192.6 L730.3,192.8 Z" fill="#1f5246" stroke="#1c4a3d" stroke-width="0.50" stroke-linejoin="round"/>
<path d="M807.0,246.9 L807.0,241.3 L714.8,196.7 L714.8,202.3 Z" fill="#3aac95" stroke="#1c4a3d" stroke-width="0.50" stroke-linejoin="round"/>
<path d="M807.0,246.9 L808.5,246.7 L808.5,241.1 L807.0,241.3 Z" fill="#2f8e7b" stroke="#1c4a3d" stroke-width="0.50" stroke-linejoin="round"/>
<path d="M807.0,241.3 L808.5,241.1 L716.3,196.5 L714.8,196.7 Z" fill="#1f5246" stroke="#1c4a3d" stroke-width="0.50" stroke-linejoin="round"/>
<path d="M791.5,250.8 L791.5,245.2 L699.3,200.6 L699.3,206.1 Z" fill="#3aac95" stroke="#1c4a3d" stroke-width="0.50" stroke-linejoin="round"/>
<path d="M791.5,250.8 L793.0,250.6 L793.0,245.0 L791.5,245.2 Z" fill="#2f8e7b" stroke="#1c4a3d" stroke-width="0.50" stroke-linejoin="round"/>
<path d="M791.5,245.2 L793.0,245.0 L700.8,200.4 L699.3,200.6 Z" fill="#1f5246" stroke="#1c4a3d" stroke-width="0.50" stroke-linejoin="round"/>
<path d="M887.9,233.7 L887.9,226.1 L885.7,225.0 L885.7,232.6 Z" fill="#5f8a3a" stroke="#5f8a3a" stroke-width="0.3"/>
<path d="M887.9,233.7 L969.2,229.4 L969.2,221.8 L887.9,226.1 Z" fill="#6f9b46" stroke="#6f9b46" stroke-width="0.3"/>
<path d="M887.9,233.7L969.2,229.4M969.2,221.8L887.9,226.1" fill="none" stroke="#2c4a1c" stroke-width="0.60" stroke-linecap="round"/>
<path d="M887.9,226.1 L969.2,221.8 L966.9,220.7 L885.7,225.0 Z" fill="#78a44c" stroke="#78a44c" stroke-width="0.3"/>
<path d="M887.9,226.1L969.2,221.8M966.9,220.7L885.7,225.0" fill="none" stroke="#2c4a1c" stroke-width="0.60" stroke-linecap="round"/>
<path d="M776.0,254.7 L776.0,249.1 L683.8,204.5 L683.8,210.0 Z" fill="#3aac95" stroke="#1c4a3d" stroke-width="0.50" stroke-linejoin="round"/>
<path d="M776.0,254.7 L777.5,254.4 L777.5,248.9 L776.0,249.1 Z" fill="#2f8e7b" stroke="#1c4a3d" stroke-width="0.50" stroke-linejoin="round"/>
<path d="M776.0,249.1 L777.5,248.9 L685.2,204.3 L683.8,204.5 Z" fill="#1f5246" stroke="#1c4a3d" stroke-width="0.50" stroke-linejoin="round"/>
<path d="M1131.9,510.3 L1131.9,504.0 L1113.1,494.9 L1113.1,501.2 Z" fill="#a77250" stroke="#5a3a26" stroke-width="0.60" stroke-linejoin="round"/>
<path d="M1131.9,510.3 L1166.3,505.0 L1166.3,498.8 L1131.9,504.0 Z" fill="#aa7650" stroke="#5a3a26" stroke-width="0.60" stroke-linejoin="round"/>
<path d="M1131.9,504.0 L1166.3,498.8 L1147.5,489.7 L1113.1,494.9 Z" fill="#93623e" stroke="#5a3a26" stroke-width="0.60" stroke-linejoin="round"/>
<path d="M760.5,258.6 L760.5,253.0 L668.3,208.4 L668.3,213.9 Z" fill="#3aac95" stroke="#1c4a3d" stroke-width="0.50" stroke-linejoin="round"/>
<path d="M760.5,258.6 L761.9,258.3 L761.9,252.8 L760.5,253.0 Z" fill="#2f8e7b" stroke="#1c4a3d" stroke-width="0.50" stroke-linejoin="round"/>
<path d="M760.5,253.0 L761.9,252.8 L669.7,208.2 L668.3,208.4 Z" fill="#1f5246" stroke="#1c4a3d" stroke-width="0.50" stroke-linejoin="round"/>
<path d="M1137.9,261.8 L1137.9,255.3 L1043.9,209.8 L1043.9,216.3 Z" fill="#3aac95" stroke="#1c4a3d" stroke-width="0.50" stroke-linejoin="round"/>
<path d="M1137.9,261.8 L1140.5,261.4 L1140.5,254.9 L1137.9,255.3 Z" fill="#2f8e7b" stroke="#1c4a3d" stroke-width="0.50" stroke-linejoin="round"/>
<path d="M1137.9,255.3 L1140.5,254.9 L1046.5,209.4 L1043.9,209.8 Z" fill="#7d8583" stroke="#1c4a3d" stroke-width="0.50" stroke-linejoin="round"/>
<path d="M472.5,239.3 L472.5,231.8 L470.3,230.7 L470.3,238.2 Z" fill="#5f8a3a" stroke="#5f8a3a" stroke-width="0.3"/>
<path d="M472.5,239.3 L553.8,235.0 L553.8,227.5 L472.5,231.8 Z" fill="#6f9b46" stroke="#6f9b46" stroke-width="0.3"/>
<path d="M472.5,239.3L553.8,235.0M553.8,227.5L472.5,231.8" fill="none" stroke="#2c4a1c" stroke-width="0.60" stroke-linecap="round"/>
<path d="M472.5,231.8 L553.8,227.5 L551.5,226.4 L470.3,230.7 Z" fill="#78a44c" stroke="#78a44c" stroke-width="0.3"/>
<path d="M472.5,231.8L553.8,227.5M551.5,226.4L470.3,230.7" fill="none" stroke="#2c4a1c" stroke-width="0.60" stroke-linecap="round"/>
<path d="M310.8,495.3 L310.8,480.1 L307.0,478.2 L307.0,493.4 Z" fill="#a77250" stroke="#5a3a26" stroke-width="0.60" stroke-linejoin="round"/>
<path d="M310.8,495.3 L473.3,470.6 L473.3,455.4 L310.8,480.1 Z" fill="#aa7650" stroke="#aa7650" stroke-width="0.3"/>
<path d="M310.8,495.3L473.3,470.6M473.3,455.4L310.8,480.1M310.8,480.1L310.8,495.3" fill="none" stroke="#5a3a26" stroke-width="0.60" stroke-linecap="round"/>
<path d="M310.8,480.1 L473.3,455.4 L469.5,453.5 L307.0,478.2 Z" fill="#93623e" stroke="#93623e" stroke-width="0.3"/>
<path d="M310.8,480.1L473.3,455.4M469.5,453.5L307.0,478.2M307.0,478.2L310.8,480.1" fill="none" stroke="#5a3a26" stroke-width="0.60" stroke-linecap="round"/>
<path d="M745.0,262.5 L745.0,256.9 L652.8,212.3 L652.8,217.8 Z" fill="#3aac95" stroke="#1c4a3d" stroke-width="0.50" stroke-linejoin="round"/>
<path d="M745.0,262.5 L746.4,262.2 L746.4,256.7 L745.0,256.9 Z" fill="#2f8e7b" stroke="#1c4a3d" stroke-width="0.50" stroke-linejoin="round"/>
<path d="M745.0,256.9 L746.4,256.7 L654.2,212.1 L652.8,212.3 Z" fill="#1f5246" stroke="#1c4a3d" stroke-width="0.50" stroke-linejoin="round"/>
<path d="M1122.4,262.6 L1122.4,256.1 L1028.4,210.6 L1028.4,217.1 Z" fill="#3aac95" stroke="#1c4a3d" stroke-width="0.50" stroke-linejoin="round"/>
<path d="M1122.4,262.6 L1125.0,262.2 L1125.0,255.7 L1122.4,256.1 Z" fill="#2f8e7b" stroke="#1c4a3d" stroke-width="0.50" stroke-linejoin="round"/>
<path d="M1122.4,256.1 L1125.0,255.7 L1031.0,210.2 L1028.4,210.6 Z" fill="#7d8583" stroke="#1c4a3d" stroke-width="0.50" stroke-linejoin="round"/>
<path d="M316.7,477.7 L462.9,455.5" fill="none" stroke="#6b4428" stroke-width="0.70" stroke-dasharray="1.6,1.1"/>
<path d="M729.4,266.4 L729.4,260.8 L637.2,216.2 L637.2,221.7 Z" fill="#3aac95" stroke="#1c4a3d" stroke-width="0.50" stroke-linejoin="round"/>
<path d="M729.4,266.4 L730.9,266.1 L730.9,260.6 L729.4,260.8 Z" fill="#2f8e7b" stroke="#1c4a3d" stroke-width="0.50" stroke-linejoin="round"/>
<path d="M729.4,260.8 L730.9,260.6 L638.7,216.0 L637.2,216.2 Z" fill="#1f5246" stroke="#1c4a3d" stroke-width="0.50" stroke-linejoin="round"/>
<path d="M716.5,515.9 L716.5,509.7 L697.7,500.6 L697.7,506.8 Z" fill="#a77250" stroke="#5a3a26" stroke-width="0.60" stroke-linejoin="round"/>
<path d="M716.5,515.9 L750.9,510.7 L750.9,504.4 L716.5,509.7 Z" fill="#aa7650" stroke="#5a3a26" stroke-width="0.60" stroke-linejoin="round"/>
<path d="M716.5,509.7 L750.9,504.4 L732.1,495.3 L697.7,500.6 Z" fill="#93623e" stroke="#5a3a26" stroke-width="0.60" stroke-linejoin="round"/>
<path d="M1106.9,263.4 L1106.9,257.0 L1012.9,211.5 L1012.9,217.9 Z" fill="#3aac95" stroke="#1c4a3d" stroke-width="0.50" stroke-linejoin="round"/>
<path d="M1106.9,263.4 L1109.5,263.0 L1109.5,256.6 L1106.9,257.0 Z" fill="#2f8e7b" stroke="#1c4a3d" stroke-width="0.50" stroke-linejoin="round"/>
<path d="M1106.9,257.0 L1109.5,256.6 L1015.5,211.1 L1012.9,211.5 Z" fill="#7d8583" stroke="#1c4a3d" stroke-width="0.50" stroke-linejoin="round"/>
<path d="M720.7,267.7 L720.7,261.2 L628.5,216.6 L628.5,223.1 Z" fill="#3aac95" stroke="#1c4a3d" stroke-width="0.50" stroke-linejoin="round"/>
<path d="M720.7,267.7 L723.3,267.3 L723.3,260.8 L720.7,261.2 Z" fill="#2f8e7b" stroke="#1c4a3d" stroke-width="0.50" stroke-linejoin="round"/>
<path d="M720.7,261.2 L723.3,260.8 L631.1,216.2 L628.5,216.6 Z" fill="#7d8583" stroke="#1c4a3d" stroke-width="0.50" stroke-linejoin="round"/>
<path d="M1091.4,264.2 L1091.4,257.8 L997.4,212.3 L997.4,218.7 Z" fill="#3aac95" stroke="#1c4a3d" stroke-width="0.50" stroke-linejoin="round"/>
<path d="M1091.4,264.2 L1094.0,263.8 L1094.0,257.4 L1091.4,257.8 Z" fill="#2f8e7b" stroke="#1c4a3d" stroke-width="0.50" stroke-linejoin="round"/>
<path d="M1091.4,257.8 L1094.0,257.4 L1000.0,211.9 L997.4,212.3 Z" fill="#7d8583" stroke="#1c4a3d" stroke-width="0.50" stroke-linejoin="round"/>
<path d="M705.2,268.5 L705.2,262.1 L613.0,217.4 L613.0,223.9 Z" fill="#3aac95" stroke="#1c4a3d" stroke-width="0.50" stroke-linejoin="round"/>
<path d="M705.2,268.5 L707.8,268.1 L707.8,261.7 L705.2,262.1 Z" fill="#2f8e7b" stroke="#1c4a3d" stroke-width="0.50" stroke-linejoin="round"/>
<path d="M705.2,262.1 L707.8,261.7 L615.6,217.0 L613.0,217.4 Z" fill="#7d8583" stroke="#1c4a3d" stroke-width="0.50" stroke-linejoin="round"/>
<path d="M806.7,254.1 L806.7,246.5 L804.4,245.4 L804.4,253.0 Z" fill="#5f8a3a" stroke="#5f8a3a" stroke-width="0.3"/>
<path d="M806.7,254.1 L887.9,233.7 L887.9,226.1 L806.7,246.5 Z" fill="#6f9b46" stroke="#6f9b46" stroke-width="0.3"/>
<path d="M806.7,254.1L887.9,233.7M887.9,226.1L806.7,246.5" fill="none" stroke="#2c4a1c" stroke-width="0.60" stroke-linecap="round"/>
<path d="M806.7,246.5 L887.9,226.1 L885.7,225.0 L804.4,245.4 Z" fill="#78a44c" stroke="#78a44c" stroke-width="0.3"/>
<path d="M806.7,246.5L887.9,226.1M885.7,225.0L804.4,245.4" fill="none" stroke="#2c4a1c" stroke-width="0.60" stroke-linecap="round"/>
<path d="M301.1,521.6 L301.1,515.3 L282.3,506.2 L282.3,512.5 Z" fill="#a77250" stroke="#5a3a26" stroke-width="0.60" stroke-linejoin="round"/>
<path d="M301.1,521.6 L335.5,516.3 L335.5,510.1 L301.1,515.3 Z" fill="#aa7650" stroke="#5a3a26" stroke-width="0.60" stroke-linejoin="round"/>
<path d="M301.1,515.3 L335.5,510.1 L316.7,501.0 L282.3,506.2 Z" fill="#93623e" stroke="#5a3a26" stroke-width="0.60" stroke-linejoin="round"/>
<path d="M1075.9,265.0 L1075.9,258.6 L981.8,213.1 L981.8,219.5 Z" fill="#3aac95" stroke="#1c4a3d" stroke-width="0.50" stroke-linejoin="round"/>
<path d="M1075.9,265.0 L1078.5,264.6 L1078.5,258.2 L1075.9,258.6 Z" fill="#2f8e7b" stroke="#1c4a3d" stroke-width="0.50" stroke-linejoin="round"/>
<path d="M1075.9,258.6 L1078.5,258.2 L984.4,212.7 L981.8,213.1 Z" fill="#7d8583" stroke="#1c4a3d" stroke-width="0.50" stroke-linejoin="round"/>
<path d="M689.7,269.3 L689.7,262.9 L597.5,218.3 L597.5,224.7 Z" fill="#3aac95" stroke="#1c4a3d" stroke-width="0.50" stroke-linejoin="round"/>
<path d="M689.7,269.3 L692.3,268.9 L692.3,262.5 L689.7,262.9 Z" fill="#2f8e7b" stroke="#1c4a3d" stroke-width="0.50" stroke-linejoin="round"/>
<path d="M689.7,262.9 L692.3,262.5 L600.1,217.9 L597.5,218.3 Z" fill="#7d8583" stroke="#1c4a3d" stroke-width="0.50" stroke-linejoin="round"/>
<path d="M1060.3,265.9 L1060.3,259.4 L966.3,213.9 L966.3,220.4 Z" fill="#3aac95" stroke="#1c4a3d" stroke-width="0.50" stroke-linejoin="round"/>
<path d="M1060.3,265.9 L1062.9,265.5 L1062.9,259.0 L1060.3,259.4 Z" fill="#2f8e7b" stroke="#1c4a3d" stroke-width="0.50" stroke-linejoin="round"/>
<path d="M1060.3,259.4 L1062.9,259.0 L968.9,213.5 L966.3,213.9 Z" fill="#7d8583" stroke="#1c4a3d" stroke-width="0.50" stroke-linejoin="round"/>
<path d="M674.2,270.1 L674.2,263.7 L582.0,219.1 L582.0,225.5 Z" fill="#3aac95" stroke="#1c4a3d" stroke-width="0.50" stroke-linejoin="round"/>
<path d="M674.2,270.1 L676.8,269.8 L676.8,263.3 L674.2,263.7 Z" fill="#2f8e7b" stroke="#1c4a3d" stroke-width="0.50" stroke-linejoin="round"/>
<path d="M674.2,263.7 L676.8,263.3 L584.6,218.7 L582.0,219.1 Z" fill="#7d8583" stroke="#1c4a3d" stroke-width="0.50" stroke-linejoin="round"/>
<path d="M391.3,259.7 L391.3,252.2 L389.0,251.1 L389.0,258.6 Z" fill="#5f8a3a" stroke="#5f8a3a" stroke-width="0.3"/>
<path d="M391.3,259.7 L472.5,239.3 L472.5,231.8 L391.3,252.2 Z" fill="#6f9b46" stroke="#6f9b46" stroke-width="0.3"/>
<path d="M391.3,259.7L472.5,239.3M472.5,231.8L391.3,252.2" fill="none" stroke="#2c4a1c" stroke-width="0.60" stroke-linecap="round"/>
<path d="M391.3,252.2 L472.5,231.8 L470.3,230.7 L389.0,251.1 Z" fill="#78a44c" stroke="#78a44c" stroke-width="0.3"/>
<path d="M391.3,252.2L472.5,231.8M470.3,230.7L389.0,251.1" fill="none" stroke="#2c4a1c" stroke-width="0.60" stroke-linecap="round"/>
<path d="M1044.8,266.7 L1044.8,260.2 L950.8,214.7 L950.8,221.2 Z" fill="#3aac95" stroke="#1c4a3d" stroke-width="0.50" stroke-linejoin="round"/>
<path d="M1044.8,266.7 L1047.4,266.3 L1047.4,259.8 L1044.8,260.2 Z" fill="#2f8e7b" stroke="#1c4a3d" stroke-width="0.50" stroke-linejoin="round"/>
<path d="M1044.8,260.2 L1047.4,259.8 L953.4,214.3 L950.8,214.7 Z" fill="#7d8583" stroke="#1c4a3d" stroke-width="0.50" stroke-linejoin="round"/>
<path d="M658.7,271.0 L658.7,264.5 L566.5,219.9 L566.5,226.3 Z" fill="#3aac95" stroke="#1c4a3d" stroke-width="0.50" stroke-linejoin="round"/>
<path d="M658.7,271.0 L661.3,270.6 L661.3,264.1 L658.7,264.5 Z" fill="#2f8e7b" stroke="#1c4a3d" stroke-width="0.50" stroke-linejoin="round"/>
<path d="M658.7,264.5 L661.3,264.1 L569.1,219.5 L566.5,219.9 Z" fill="#7d8583" stroke="#1c4a3d" stroke-width="0.50" stroke-linejoin="round"/>
<path d="M1029.3,267.5 L1029.3,261.1 L935.3,215.6 L935.3,222.0 Z" fill="#3aac95" stroke="#1c4a3d" stroke-width="0.50" stroke-linejoin="round"/>
<path d="M1029.3,267.5 L1031.9,267.1 L1031.9,260.7 L1029.3,261.1 Z" fill="#2f8e7b" stroke="#1c4a3d" stroke-width="0.50" stroke-linejoin="round"/>
<path d="M1029.3,261.1 L1031.9,260.7 L937.9,215.2 L935.3,215.6 Z" fill="#7d8583" stroke="#1c4a3d" stroke-width="0.50" stroke-linejoin="round"/>
<path d="M643.2,271.8 L643.2,265.3 L550.9,220.7 L550.9,227.2 Z" fill="#3aac95" stroke="#1c4a3d" stroke-width="0.50" stroke-linejoin="round"/>
<path d="M643.2,271.8 L645.8,271.4 L645.8,264.9 L643.2,265.3 Z" fill="#2f8e7b" stroke="#1c4a3d" stroke-width="0.50" stroke-linejoin="round"/>
<path d="M643.2,265.3 L645.8,264.9 L553.5,220.3 L550.9,220.7 Z" fill="#7d8583" stroke="#1c4a3d" stroke-width="0.50" stroke-linejoin="round"/>
<path d="M1013.8,268.3 L1013.8,261.9 L919.8,216.4 L919.8,222.8 Z" fill="#3aac95" stroke="#1c4a3d" stroke-width="0.50" stroke-linejoin="round"/>
<path d="M1013.8,268.3 L1016.4,267.9 L1016.4,261.5 L1013.8,261.9 Z" fill="#2f8e7b" stroke="#1c4a3d" stroke-width="0.50" stroke-linejoin="round"/>
<path d="M1013.8,261.9 L1016.4,261.5 L922.4,216.0 L919.8,216.4 Z" fill="#7d8583" stroke="#1c4a3d" stroke-width="0.50" stroke-linejoin="round"/>
<path d="M725.4,274.5 L725.4,266.9 L723.2,265.9 L723.2,273.4 Z" fill="#5f8a3a" stroke="#5f8a3a" stroke-width="0.3"/>
<path d="M725.4,274.5 L806.7,254.1 L806.7,246.5 L725.4,266.9 Z" fill="#6f9b46" stroke="#6f9b46" stroke-width="0.3"/>
<path d="M725.4,274.5L806.7,254.1M806.7,246.5L725.4,266.9" fill="none" stroke="#2c4a1c" stroke-width="0.60" stroke-linecap="round"/>
<path d="M725.4,266.9 L806.7,246.5 L804.4,245.4 L723.2,265.9 Z" fill="#78a44c" stroke="#78a44c" stroke-width="0.3"/>
<path d="M725.4,266.9L806.7,246.5M804.4,245.4L723.2,265.9" fill="none" stroke="#2c4a1c" stroke-width="0.60" stroke-linecap="round"/>
<path d="M627.6,272.6 L627.6,266.2 L535.4,221.5 L535.4,228.0 Z" fill="#3aac95" stroke="#1c4a3d" stroke-width="0.50" stroke-linejoin="round"/>
<path d="M627.6,272.6 L630.2,272.2 L630.2,265.8 L627.6,266.2 Z" fill="#2f8e7b" stroke="#1c4a3d" stroke-width="0.50" stroke-linejoin="round"/>
<path d="M627.6,266.2 L630.2,265.8 L538.0,221.1 L535.4,221.5 Z" fill="#7d8583" stroke="#1c4a3d" stroke-width="0.50" stroke-linejoin="round"/>
<path d="M998.3,269.1 L998.3,262.7 L904.2,217.2 L904.2,223.6 Z" fill="#3aac95" stroke="#1c4a3d" stroke-width="0.50" stroke-linejoin="round"/>
<path d="M998.3,269.1 L1000.9,268.8 L1000.9,262.3 L998.3,262.7 Z" fill="#2f8e7b" stroke="#1c4a3d" stroke-width="0.50" stroke-linejoin="round"/>
<path d="M998.3,262.7 L1000.9,262.3 L906.8,216.8 L904.2,217.2 Z" fill="#7d8583" stroke="#1c4a3d" stroke-width="0.50" stroke-linejoin="round"/>
<path d="M1134.5,499.2 L1149.8,496.9 L1149.8,466.1 L1134.5,468.4 Z" fill="#aa7650" stroke="#5a3a26" stroke-width="0.60" stroke-linejoin="round"/>
<path d="M1230.9,369.0 L1230.9,360.8 L1140.5,317.0 L1140.5,325.2 Z" fill="#5f8a3a" stroke="#5f8a3a" stroke-width="0.3"/>
<path d="M1230.9,369.0L1230.9,360.8M1230.9,360.8L1140.5,317.0M1140.5,325.2L1230.9,369.0" fill="none" stroke="#2c4a1c" stroke-width="0.60" stroke-linecap="round"/>
<path d="M1230.9,369.0 L1235.0,368.4 L1235.0,360.1 L1230.9,360.8 Z" fill="#6f9b46" stroke="#2c4a1c" stroke-width="0.60" stroke-linejoin="round"/>
<path d="M1230.9,360.8 L1235.0,360.1 L1144.6,316.4 L1140.5,317.0 Z" fill="#78a44c" stroke="#78a44c" stroke-width="0.3"/>
<path d="M1230.9,360.8L1235.0,360.1M1235.0,360.1L1144.6,316.4M1140.5,317.0L1230.9,360.8" fill="none" stroke="#2c4a1c" stroke-width="0.60" stroke-linecap="round"/>
<path d="M612.1,273.4 L612.1,267.0 L519.9,222.4 L519.9,228.8 Z" fill="#3aac95" stroke="#1c4a3d" stroke-width="0.50" stroke-linejoin="round"/>
<path d="M612.1,273.4 L614.7,273.0 L614.7,266.6 L612.1,267.0 Z" fill="#2f8e7b" stroke="#1c4a3d" stroke-width="0.50" stroke-linejoin="round"/>
<path d="M612.1,267.0 L614.7,266.6 L522.5,222.0 L519.9,222.4 Z" fill="#7d8583" stroke="#1c4a3d" stroke-width="0.50" stroke-linejoin="round"/>
<path d="M1136.7,268.7 L1112.4,270.0 L1136.7,279.1 Z" fill="#6f9b46" stroke="#2c4a1c" stroke-width="0.60" stroke-linejoin="round"/>
<path d="M728.3,273.3 L728.3,283.7 L752.7,267.2 Z" fill="#6f9b46" stroke="#2c4a1c" stroke-width="0.60" stroke-linejoin="round"/>
<path d="M982.7,270.0 L982.7,263.5 L888.7,218.0 L888.7,224.5 Z" fill="#3aac95" stroke="#1c4a3d" stroke-width="0.50" stroke-linejoin="round"/>
<path d="M982.7,270.0 L985.3,269.6 L985.3,263.1 L982.7,263.5 Z" fill="#2f8e7b" stroke="#1c4a3d" stroke-width="0.50" stroke-linejoin="round"/>
<path d="M982.7,263.5 L985.3,263.1 L891.3,217.6 L888.7,218.0 Z" fill="#7d8583" stroke="#1c4a3d" stroke-width="0.50" stroke-linejoin="round"/>
<path d="M310.0,280.1 L310.0,272.6 L307.8,271.5 L307.8,279.0 Z" fill="#5f8a3a" stroke="#2c4a1c" stroke-width="0.60" stroke-linejoin="round"/>
<path d="M310.0,280.1 L391.3,259.7 L391.3,252.2 L310.0,272.6 Z" fill="#6f9b46" stroke="#6f9b46" stroke-width="0.3"/>
<path d="M310.0,280.1L391.3,259.7M391.3,252.2L310.0,272.6M310.0,272.6L310.0,280.1" fill="none" stroke="#2c4a1c" stroke-width="0.60" stroke-linecap="round"/>
<path d="M310.0,272.6 L391.3,252.2 L389.0,251.1 L307.8,271.5 Z" fill="#78a44c" stroke="#78a44c" stroke-width="0.3"/>
<path d="M310.0,272.6L391.3,252.2M389.0,251.1L307.8,271.5M307.8,271.5L310.0,272.6" fill="none" stroke="#2c4a1c" stroke-width="0.60" stroke-linecap="round"/>
<path d="M596.6,274.2 L596.6,267.8 L504.4,223.2 L504.4,229.6 Z" fill="#3aac95" stroke="#1c4a3d" stroke-width="0.50" stroke-linejoin="round"/>
<path d="M596.6,274.2 L599.2,273.9 L599.2,267.4 L596.6,267.8 Z" fill="#2f8e7b" stroke="#1c4a3d" stroke-width="0.50" stroke-linejoin="round"/>
<path d="M596.6,267.8 L599.2,267.4 L507.0,222.8 L504.4,223.2 Z" fill="#7d8583" stroke="#1c4a3d" stroke-width="0.50" stroke-linejoin="round"/>
<path d="M976.8,270.9 L976.8,265.3 L882.8,219.8 L882.8,225.4 Z" fill="#3aac95" stroke="#1c4a3d" stroke-width="0.50" stroke-linejoin="round"/>
<path d="M976.8,270.9 L978.3,270.6 L978.3,265.1 L976.8,265.3 Z" fill="#2f8e7b" stroke="#1c4a3d" stroke-width="0.50" stroke-linejoin="round"/>
<path d="M976.8,265.3 L978.3,265.1 L884.3,219.6 L882.8,219.8 Z" fill="#1f5246" stroke="#1c4a3d" stroke-width="0.50" stroke-linejoin="round"/>
<path d="M1229.3,527.3 L1229.3,512.1 L1138.9,468.3 L1138.9,483.5 Z" fill="#a77250" stroke="#a77250" stroke-width="0.3"/>
<path d="M1229.3,527.3L1229.3,512.1M1229.3,512.1L1138.9,468.3M1138.9,483.5L1229.3,527.3" fill="none" stroke="#5a3a26" stroke-width="0.60" stroke-linecap="round"/>
<path d="M1229.3,527.3 L1235.8,526.3 L1235.8,511.1 L1229.3,512.1 Z" fill="#aa7650" stroke="#5a3a26" stroke-width="0.60" stroke-linejoin="round"/>
<path d="M1229.3,512.1 L1235.8,511.1 L1145.4,467.3 L1138.9,468.3 Z" fill="#93623e" stroke="#93623e" stroke-width="0.3"/>
<path d="M1229.3,512.1L1235.8,511.1M1235.8,511.1L1145.4,467.3M1138.9,468.3L1229.3,512.1" fill="none" stroke="#5a3a26" stroke-width="0.60" stroke-linecap="round"/>
<path d="M1228.0,509.4 L1146.7,470.0" fill="none" stroke="#6b4428" stroke-width="0.70" stroke-dasharray="1.6,1.1"/>
<path d="M719.1,504.8 L734.4,502.5 L734.4,471.7 L719.1,474.1 Z" fill="#aa7650" stroke="#5a3a26" stroke-width="0.60" stroke-linejoin="round"/>
<path d="M815.5,374.6 L815.5,366.4 L725.1,322.7 L725.1,330.9 Z" fill="#5f8a3a" stroke="#5f8a3a" stroke-width="0.3"/>
<path d="M815.5,366.4L725.1,322.7M725.1,330.9L815.5,374.6" fill="none" stroke="#2c4a1c" stroke-width="0.60" stroke-linecap="round"/>
<path d="M815.5,374.6 L819.6,374.0 L819.6,365.8 L815.5,366.4 Z" fill="#6f9b46" stroke="#6f9b46" stroke-width="0.3"/>
<path d="M815.5,366.4 L819.6,365.8 L729.2,322.0 L725.1,322.7 Z" fill="#78a44c" stroke="#78a44c" stroke-width="0.3"/>
<path d="M819.6,365.8L729.2,322.0M725.1,322.7L815.5,366.4" fill="none" stroke="#2c4a1c" stroke-width="0.60" stroke-linecap="round"/>
<path d="M1059.6,273.1 L1059.6,265.6 L1057.3,264.5 L1057.3,272.0 Z" fill="#5f8a3a" stroke="#5f8a3a" stroke-width="0.3"/>
<path d="M1059.6,273.1 L1140.8,268.8 L1140.8,261.3 L1059.6,265.6 Z" fill="#6f9b46" stroke="#6f9b46" stroke-width="0.3"/>
<path d="M1059.6,273.1L1140.8,268.8M1140.8,268.8L1140.8,261.3M1140.8,261.3L1059.6,265.6" fill="none" stroke="#2c4a1c" stroke-width="0.60" stroke-linecap="round"/>
<path d="M1059.6,265.6 L1140.8,261.3 L1138.6,260.2 L1057.3,264.5 Z" fill="#78a44c" stroke="#78a44c" stroke-width="0.3"/>
<path d="M1059.6,265.6L1140.8,261.3M1140.8,261.3L1138.6,260.2M1138.6,260.2L1057.3,264.5" fill="none" stroke="#2c4a1c" stroke-width="0.60" stroke-linecap="round"/>
<path d="M961.3,274.8 L961.3,269.2 L867.3,223.7 L867.3,229.3 Z" fill="#3aac95" stroke="#1c4a3d" stroke-width="0.50" stroke-linejoin="round"/>
<path d="M961.3,274.8 L962.8,274.5 L962.8,269.0 L961.3,269.2 Z" fill="#2f8e7b" stroke="#1c4a3d" stroke-width="0.50" stroke-linejoin="round"/>
<path d="M961.3,269.2 L962.8,269.0 L868.7,223.5 L867.3,223.7 Z" fill="#1f5246" stroke="#1c4a3d" stroke-width="0.50" stroke-linejoin="round"/>
<path d="M581.1,275.1 L581.1,268.6 L488.9,224.0 L488.9,230.4 Z" fill="#3aac95" stroke="#1c4a3d" stroke-width="0.50" stroke-linejoin="round"/>
<path d="M581.1,275.1 L583.7,274.7 L583.7,268.2 L581.1,268.6 Z" fill="#2f8e7b" stroke="#1c4a3d" stroke-width="0.50" stroke-linejoin="round"/>
<path d="M581.1,268.6 L583.7,268.2 L491.5,223.6 L488.9,224.0 Z" fill="#7d8583" stroke="#1c4a3d" stroke-width="0.50" stroke-linejoin="round"/>
<path d="M721.3,274.4 L697.0,275.7 L721.3,284.7 Z" fill="#6f9b46" stroke="#2c4a1c" stroke-width="0.60" stroke-linejoin="round"/>
<path d="M312.9,279.0 L312.9,289.3 L337.3,272.8 Z" fill="#6f9b46" stroke="#2c4a1c" stroke-width="0.60" stroke-linejoin="round"/>
<path d="M1134.5,468.4 L1149.8,466.1 L1144.9,463.7 L1129.6,466.0 Z" fill="#93623e" stroke="#5a3a26" stroke-width="0.60" stroke-linejoin="round"/>
<path d="M1137.7,467.3 L1137.7,262.0 L1134.7,260.6 L1134.7,465.9 Z" fill="#7b4490" stroke="#2e1838" stroke-width="0.80" stroke-linejoin="round"/>
<path d="M1137.7,467.3 L1144.7,466.3 L1144.7,260.9 L1137.7,262.0 Z" fill="#9756ac" stroke="#2e1838" stroke-width="0.80" stroke-linejoin="round"/>
<path d="M1137.7,262.0 L1144.7,260.9 L1141.7,259.5 L1134.7,260.6 Z" fill="#8b4ca0" stroke="#2e1838" stroke-width="0.80" stroke-linejoin="round"/>
<path d="M945.8,278.7 L945.8,273.1 L851.8,227.6 L851.8,233.2 Z" fill="#3aac95" stroke="#1c4a3d" stroke-width="0.50" stroke-linejoin="round"/>
<path d="M945.8,278.7 L947.2,278.4 L947.2,272.9 L945.8,273.1 Z" fill="#2f8e7b" stroke="#1c4a3d" stroke-width="0.50" stroke-linejoin="round"/>
<path d="M945.8,273.1 L947.2,272.9 L853.2,227.4 L851.8,227.6 Z" fill="#1f5246" stroke="#1c4a3d" stroke-width="0.50" stroke-linejoin="round"/>
<path d="M565.6,275.9 L565.6,269.4 L473.3,224.8 L473.3,231.3 Z" fill="#3aac95" stroke="#1c4a3d" stroke-width="0.50" stroke-linejoin="round"/>
<path d="M565.6,275.9 L568.2,275.5 L568.2,269.0 L565.6,269.4 Z" fill="#2f8e7b" stroke="#1c4a3d" stroke-width="0.50" stroke-linejoin="round"/>
<path d="M565.6,269.4 L568.2,269.0 L476.0,224.4 L473.3,224.8 Z" fill="#7d8583" stroke="#1c4a3d" stroke-width="0.50" stroke-linejoin="round"/>
<path d="M813.9,532.9 L813.9,517.7 L723.5,474.0 L723.5,489.2 Z" fill="#a77250" stroke="#a77250" stroke-width="0.3"/>
<path d="M813.9,517.7L723.5,474.0M723.5,489.2L813.9,532.9" fill="none" stroke="#5a3a26" stroke-width="0.60" stroke-linecap="round"/>
<path d="M813.9,532.9 L820.4,532.0 L820.4,516.7 L813.9,517.7 Z" fill="#aa7650" stroke="#aa7650" stroke-width="0.3"/>
<path d="M813.9,517.7 L820.4,516.7 L730.0,473.0 L723.5,474.0 Z" fill="#93623e" stroke="#93623e" stroke-width="0.3"/>
<path d="M820.4,516.7L730.0,473.0M723.5,474.0L813.9,517.7" fill="none" stroke="#5a3a26" stroke-width="0.60" stroke-linecap="round"/>
<path d="M559.6,276.8 L559.6,271.2 L467.4,226.6 L467.4,232.2 Z" fill="#3aac95" stroke="#1c4a3d" stroke-width="0.50" stroke-linejoin="round"/>
<path d="M559.6,276.8 L561.1,276.6 L561.1,271.0 L559.6,271.2 Z" fill="#2f8e7b" stroke="#1c4a3d" stroke-width="0.50" stroke-linejoin="round"/>
<path d="M559.6,271.2 L561.1,271.0 L468.9,226.4 L467.4,226.6 Z" fill="#1f5246" stroke="#1c4a3d" stroke-width="0.50" stroke-linejoin="round"/>
<path d="M1134.5,499.2 L1134.5,468.4 L1129.6,466.0 L1129.6,496.8 Z" fill="#a77250" stroke="#5a3a26" stroke-width="0.60" stroke-linejoin="round"/>
<path d="M812.6,515.0 L731.3,475.7" fill="none" stroke="#6b4428" stroke-width="0.70" stroke-dasharray="1.6,1.1"/>
<path d="M303.7,510.5 L319.0,508.2 L319.0,477.4 L303.7,479.7 Z" fill="#aa7650" stroke="#5a3a26" stroke-width="0.60" stroke-linejoin="round"/>
<path d="M930.3,282.6 L930.3,277.0 L836.2,231.5 L836.2,237.1 Z" fill="#3aac95" stroke="#1c4a3d" stroke-width="0.50" stroke-linejoin="round"/>
<path d="M930.3,282.6 L931.7,282.3 L931.7,276.8 L930.3,277.0 Z" fill="#2f8e7b" stroke="#1c4a3d" stroke-width="0.50" stroke-linejoin="round"/>
<path d="M930.3,277.0 L931.7,276.8 L837.7,231.3 L836.2,231.5 Z" fill="#1f5246" stroke="#1c4a3d" stroke-width="0.50" stroke-linejoin="round"/>
<path d="M400.1,380.3 L400.1,372.1 L309.7,328.3 L309.7,336.5 Z" fill="#5f8a3a" stroke="#5f8a3a" stroke-width="0.3"/>
<path d="M400.1,372.1L309.7,328.3M309.7,328.3L309.7,336.5M309.7,336.5L400.1,380.3" fill="none" stroke="#2c4a1c" stroke-width="0.60" stroke-linecap="round"/>
<path d="M400.1,380.3 L404.2,379.7 L404.2,371.4 L400.1,372.1 Z" fill="#6f9b46" stroke="#6f9b46" stroke-width="0.3"/>
<path d="M400.1,372.1 L404.2,371.4 L313.8,327.7 L309.7,328.3 Z" fill="#78a44c" stroke="#78a44c" stroke-width="0.3"/>
<path d="M404.2,371.4L313.8,327.7M313.8,327.7L309.7,328.3M309.7,328.3L400.1,372.1" fill="none" stroke="#2c4a1c" stroke-width="0.60" stroke-linecap="round"/>
<path d="M644.2,278.8 L644.2,271.2 L641.9,270.1 L641.9,277.7 Z" fill="#5f8a3a" stroke="#5f8a3a" stroke-width="0.3"/>
<path d="M644.2,278.8 L725.4,274.5 L725.4,266.9 L644.2,271.2 Z" fill="#6f9b46" stroke="#6f9b46" stroke-width="0.3"/>
<path d="M644.2,278.8L725.4,274.5M725.4,266.9L644.2,271.2" fill="none" stroke="#2c4a1c" stroke-width="0.60" stroke-linecap="round"/>
<path d="M644.2,271.2 L725.4,266.9 L723.2,265.9 L641.9,270.1 Z" fill="#78a44c" stroke="#78a44c" stroke-width="0.3"/>
<path d="M644.2,271.2L725.4,266.9M723.2,265.9L641.9,270.1" fill="none" stroke="#2c4a1c" stroke-width="0.60" stroke-linecap="round"/>
<path d="M544.1,280.7 L544.1,275.1 L451.9,230.5 L451.9,236.1 Z" fill="#3aac95" stroke="#1c4a3d" stroke-width="0.50" stroke-linejoin="round"/>
<path d="M544.1,280.7 L545.6,280.5 L545.6,274.9 L544.1,275.1 Z" fill="#2f8e7b" stroke="#1c4a3d" stroke-width="0.50" stroke-linejoin="round"/>
<path d="M544.1,275.1 L545.6,274.9 L453.4,230.3 L451.9,230.5 Z" fill="#1f5246" stroke="#1c4a3d" stroke-width="0.50" stroke-linejoin="round"/>
<path d="M719.1,474.1 L734.4,471.7 L729.5,469.4 L714.2,471.7 Z" fill="#93623e" stroke="#5a3a26" stroke-width="0.60" stroke-linejoin="round"/>
<path d="M722.3,473.0 L722.3,267.6 L719.3,266.2 L719.3,471.5 Z" fill="#7b4490" stroke="#2e1838" stroke-width="0.80" stroke-linejoin="round"/>
<path d="M722.3,473.0 L729.3,471.9 L729.3,266.6 L722.3,267.6 Z" fill="#9756ac" stroke="#2e1838" stroke-width="0.80" stroke-linejoin="round"/>
<path d="M722.3,267.6 L729.3,266.6 L726.3,265.1 L719.3,266.2 Z" fill="#8b4ca0" stroke="#2e1838" stroke-width="0.80" stroke-linejoin="round"/>
<path d="M914.7,286.5 L914.7,280.9 L820.7,235.4 L820.7,241.0 Z" fill="#3aac95" stroke="#1c4a3d" stroke-width="0.50" stroke-linejoin="round"/>
<path d="M914.7,286.5 L916.2,286.2 L916.2,280.7 L914.7,280.9 Z" fill="#2f8e7b" stroke="#1c4a3d" stroke-width="0.50" stroke-linejoin="round"/>
<path d="M914.7,280.9 L916.2,280.7 L822.2,235.2 L820.7,235.4 Z" fill="#1f5246" stroke="#1c4a3d" stroke-width="0.50" stroke-linejoin="round"/>
<path d="M528.6,284.6 L528.6,279.0 L436.4,234.4 L436.4,240.0 Z" fill="#3aac95" stroke="#1c4a3d" stroke-width="0.50" stroke-linejoin="round"/>
<path d="M528.6,284.6 L530.1,284.4 L530.1,278.8 L528.6,279.0 Z" fill="#2f8e7b" stroke="#1c4a3d" stroke-width="0.50" stroke-linejoin="round"/>
<path d="M528.6,279.0 L530.1,278.8 L437.8,234.2 L436.4,234.4 Z" fill="#1f5246" stroke="#1c4a3d" stroke-width="0.50" stroke-linejoin="round"/>
<path d="M398.5,538.6 L398.5,523.4 L308.1,479.6 L308.1,494.8 Z" fill="#a77250" stroke="#a77250" stroke-width="0.3"/>
<path d="M398.5,523.4L308.1,479.6M308.1,479.6L308.1,494.8M308.1,494.8L398.5,538.6" fill="none" stroke="#5a3a26" stroke-width="0.60" stroke-linecap="round"/>
<path d="M398.5,538.6 L405.0,537.6 L405.0,522.4 L398.5,523.4 Z" fill="#aa7650" stroke="#aa7650" stroke-width="0.3"/>
<path d="M398.5,523.4 L405.0,522.4 L314.6,478.6 L308.1,479.6 Z" fill="#93623e" stroke="#93623e" stroke-width="0.3"/>
<path d="M405.0,522.4L314.6,478.6M314.6,478.6L308.1,479.6M308.1,479.6L398.5,523.4" fill="none" stroke="#5a3a26" stroke-width="0.60" stroke-linecap="round"/>
<path d="M719.1,504.8 L719.1,474.1 L714.2,471.7 L714.2,502.5 Z" fill="#a77250" stroke="#5a3a26" stroke-width="0.60" stroke-linejoin="round"/>
<path d="M899.2,290.4 L899.2,284.8 L805.2,239.3 L805.2,244.9 Z" fill="#3aac95" stroke="#1c4a3d" stroke-width="0.50" stroke-linejoin="round"/>
<path d="M899.2,290.4 L900.7,290.1 L900.7,284.6 L899.2,284.8 Z" fill="#2f8e7b" stroke="#1c4a3d" stroke-width="0.50" stroke-linejoin="round"/>
<path d="M899.2,284.8 L900.7,284.6 L806.7,239.1 L805.2,239.3 Z" fill="#1f5246" stroke="#1c4a3d" stroke-width="0.50" stroke-linejoin="round"/>
<path d="M397.2,520.7 L315.9,481.3" fill="none" stroke="#6b4428" stroke-width="0.70" stroke-dasharray="1.6,1.1"/>
<path d="M513.1,288.5 L513.1,282.9 L420.9,238.3 L420.9,243.9 Z" fill="#3aac95" stroke="#1c4a3d" stroke-width="0.50" stroke-linejoin="round"/>
<path d="M513.1,288.5 L514.5,288.3 L514.5,282.7 L513.1,282.9 Z" fill="#2f8e7b" stroke="#1c4a3d" stroke-width="0.50" stroke-linejoin="round"/>
<path d="M513.1,282.9 L514.5,282.7 L422.3,238.1 L420.9,238.3 Z" fill="#1f5246" stroke="#1c4a3d" stroke-width="0.50" stroke-linejoin="round"/>
<path d="M303.7,479.7 L319.0,477.4 L314.1,475.0 L298.8,477.3 Z" fill="#93623e" stroke="#5a3a26" stroke-width="0.60" stroke-linejoin="round"/>
<path d="M883.7,294.3 L883.7,288.7 L789.7,243.2 L789.7,248.8 Z" fill="#3aac95" stroke="#1c4a3d" stroke-width="0.50" stroke-linejoin="round"/>
<path d="M883.7,294.3 L885.2,294.0 L885.2,288.5 L883.7,288.7 Z" fill="#2f8e7b" stroke="#1c4a3d" stroke-width="0.50" stroke-linejoin="round"/>
<path d="M883.7,288.7 L885.2,288.5 L791.1,243.0 L789.7,243.2 Z" fill="#1f5246" stroke="#1c4a3d" stroke-width="0.50" stroke-linejoin="round"/>
<path d="M306.9,478.6 L306.9,273.3 L303.9,271.9 L303.9,477.2 Z" fill="#7b4490" stroke="#2e1838" stroke-width="0.80" stroke-linejoin="round"/>
<path d="M306.9,478.6 L313.9,477.6 L313.9,272.2 L306.9,273.3 Z" fill="#9756ac" stroke="#2e1838" stroke-width="0.80" stroke-linejoin="round"/>
<path d="M306.9,273.3 L313.9,272.2 L310.9,270.8 L303.9,271.9 Z" fill="#8b4ca0" stroke="#2e1838" stroke-width="0.80" stroke-linejoin="round"/>
<path d="M497.6,292.4 L497.6,286.8 L405.3,242.2 L405.3,247.8 Z" fill="#3aac95" stroke="#1c4a3d" stroke-width="0.50" stroke-linejoin="round"/>
<path d="M497.6,292.4 L499.0,292.2 L499.0,286.6 L497.6,286.8 Z" fill="#2f8e7b" stroke="#1c4a3d" stroke-width="0.50" stroke-linejoin="round"/>
<path d="M497.6,286.8 L499.0,286.6 L406.8,242.0 L405.3,242.2 Z" fill="#1f5246" stroke="#1c4a3d" stroke-width="0.50" stroke-linejoin="round"/>
<path d="M978.3,277.4 L978.3,269.9 L976.1,268.8 L976.1,276.3 Z" fill="#5f8a3a" stroke="#5f8a3a" stroke-width="0.3"/>
<path d="M978.3,277.4 L1059.6,273.1 L1059.6,265.6 L978.3,269.9 Z" fill="#6f9b46" stroke="#6f9b46" stroke-width="0.3"/>
<path d="M978.3,277.4L1059.6,273.1M1059.6,265.6L978.3,269.9" fill="none" stroke="#2c4a1c" stroke-width="0.60" stroke-linecap="round"/>
<path d="M978.3,269.9 L1059.6,265.6 L1057.3,264.5 L976.1,268.8 Z" fill="#78a44c" stroke="#78a44c" stroke-width="0.3"/>
<path d="M978.3,269.9L1059.6,265.6M1057.3,264.5L976.1,268.8" fill="none" stroke="#2c4a1c" stroke-width="0.60" stroke-linecap="round"/>
<path d="M868.2,298.1 L868.2,292.6 L774.2,247.1 L774.2,252.6 Z" fill="#3aac95" stroke="#1c4a3d" stroke-width="0.50" stroke-linejoin="round"/>
<path d="M868.2,298.1 L869.6,297.9 L869.6,292.4 L868.2,292.6 Z" fill="#2f8e7b" stroke="#1c4a3d" stroke-width="0.50" stroke-linejoin="round"/>
<path d="M868.2,292.6 L869.6,292.4 L775.6,246.9 L774.2,247.1 Z" fill="#1f5246" stroke="#1c4a3d" stroke-width="0.50" stroke-linejoin="round"/>
<path d="M303.7,510.5 L303.7,479.7 L298.8,477.3 L298.8,508.1 Z" fill="#a77250" stroke="#5a3a26" stroke-width="0.60" stroke-linejoin="round"/>
<path d="M482.0,296.3 L482.0,290.7 L389.8,246.1 L389.8,251.7 Z" fill="#3aac95" stroke="#1c4a3d" stroke-width="0.50" stroke-linejoin="round"/>
<path d="M482.0,296.3 L483.5,296.1 L483.5,290.5 L482.0,290.7 Z" fill="#2f8e7b" stroke="#1c4a3d" stroke-width="0.50" stroke-linejoin="round"/>
<path d="M482.0,290.7 L483.5,290.5 L391.3,245.9 L389.8,246.1 Z" fill="#1f5246" stroke="#1c4a3d" stroke-width="0.50" stroke-linejoin="round"/>
<path d="M852.7,302.0 L852.7,296.5 L758.6,251.0 L758.6,256.5 Z" fill="#3aac95" stroke="#1c4a3d" stroke-width="0.50" stroke-linejoin="round"/>
<path d="M852.7,302.0 L854.1,301.8 L854.1,296.3 L852.7,296.5 Z" fill="#2f8e7b" stroke="#1c4a3d" stroke-width="0.50" stroke-linejoin="round"/>
<path d="M852.7,296.5 L854.1,296.3 L760.1,250.8 L758.6,251.0 Z" fill="#1f5246" stroke="#1c4a3d" stroke-width="0.50" stroke-linejoin="round"/>
<path d="M1224.7,304.9 L1224.7,298.5 L1132.5,253.8 L1132.5,260.3 Z" fill="#3aac95" stroke="#1c4a3d" stroke-width="0.50" stroke-linejoin="round"/>
<path d="M1224.7,304.9 L1227.3,304.5 L1227.3,298.1 L1224.7,298.5 Z" fill="#2f8e7b" stroke="#1c4a3d" stroke-width="0.50" stroke-linejoin="round"/>
<path d="M1224.7,298.5 L1227.3,298.1 L1135.1,253.4 L1132.5,253.8 Z" fill="#7d8583" stroke="#1c4a3d" stroke-width="0.50" stroke-linejoin="round"/>
<path d="M1222.3,554.0 L1222.3,547.8 L1203.5,538.7 L1203.5,544.9 Z" fill="#a77250" stroke="#5a3a26" stroke-width="0.60" stroke-linejoin="round"/>
<path d="M1222.3,554.0 L1256.7,548.8 L1256.7,542.5 L1222.3,547.8 Z" fill="#aa7650" stroke="#5a3a26" stroke-width="0.60" stroke-linejoin="round"/>
<path d="M1222.3,547.8 L1256.7,542.5 L1237.9,533.4 L1203.5,538.7 Z" fill="#93623e" stroke="#5a3a26" stroke-width="0.60" stroke-linejoin="round"/>
<path d="M466.5,300.2 L466.5,294.6 L374.3,250.0 L374.3,255.5 Z" fill="#3aac95" stroke="#1c4a3d" stroke-width="0.50" stroke-linejoin="round"/>
<path d="M466.5,300.2 L468.0,300.0 L468.0,294.4 L466.5,294.6 Z" fill="#2f8e7b" stroke="#1c4a3d" stroke-width="0.50" stroke-linejoin="round"/>
<path d="M466.5,294.6 L468.0,294.4 L375.8,249.8 L374.3,250.0 Z" fill="#1f5246" stroke="#1c4a3d" stroke-width="0.50" stroke-linejoin="round"/>
<path d="M562.9,283.1 L562.9,275.5 L560.7,274.4 L560.7,282.0 Z" fill="#5f8a3a" stroke="#5f8a3a" stroke-width="0.3"/>
<path d="M562.9,283.1 L644.2,278.8 L644.2,271.2 L562.9,275.5 Z" fill="#6f9b46" stroke="#6f9b46" stroke-width="0.3"/>
<path d="M562.9,283.1L644.2,278.8M644.2,271.2L562.9,275.5" fill="none" stroke="#2c4a1c" stroke-width="0.60" stroke-linecap="round"/>
<path d="M562.9,275.5 L644.2,271.2 L641.9,270.1 L560.7,274.4 Z" fill="#78a44c" stroke="#78a44c" stroke-width="0.3"/>
<path d="M562.9,275.5L644.2,271.2M641.9,270.1L560.7,274.4" fill="none" stroke="#2c4a1c" stroke-width="0.60" stroke-linecap="round"/>
<path d="M837.1,305.9 L837.1,300.4 L743.1,254.9 L743.1,260.4 Z" fill="#3aac95" stroke="#1c4a3d" stroke-width="0.50" stroke-linejoin="round"/>
<path d="M837.1,305.9 L838.6,305.7 L838.6,300.2 L837.1,300.4 Z" fill="#2f8e7b" stroke="#1c4a3d" stroke-width="0.50" stroke-linejoin="round"/>
<path d="M837.1,300.4 L838.6,300.2 L744.6,254.7 L743.1,254.9 Z" fill="#1f5246" stroke="#1c4a3d" stroke-width="0.50" stroke-linejoin="round"/>
<path d="M1209.2,305.7 L1209.2,299.3 L1117.0,254.7 L1117.0,261.1 Z" fill="#3aac95" stroke="#1c4a3d" stroke-width="0.50" stroke-linejoin="round"/>
<path d="M1209.2,305.7 L1211.8,305.3 L1211.8,298.9 L1209.2,299.3 Z" fill="#2f8e7b" stroke="#1c4a3d" stroke-width="0.50" stroke-linejoin="round"/>
<path d="M1209.2,299.3 L1211.8,298.9 L1119.6,254.3 L1117.0,254.7 Z" fill="#7d8583" stroke="#1c4a3d" stroke-width="0.50" stroke-linejoin="round"/>
<path d="M1224.9,542.9 L1224.9,512.2 L1220.0,509.8 L1220.0,540.6 Z" fill="#a77250" stroke="#5a3a26" stroke-width="0.60" stroke-linejoin="round"/>
<path d="M451.0,304.1 L451.0,298.5 L358.8,253.9 L358.8,259.4 Z" fill="#3aac95" stroke="#1c4a3d" stroke-width="0.50" stroke-linejoin="round"/>
<path d="M451.0,304.1 L452.5,303.8 L452.5,298.3 L451.0,298.5 Z" fill="#2f8e7b" stroke="#1c4a3d" stroke-width="0.50" stroke-linejoin="round"/>
<path d="M451.0,298.5 L452.5,298.3 L360.2,253.7 L358.8,253.9 Z" fill="#1f5246" stroke="#1c4a3d" stroke-width="0.50" stroke-linejoin="round"/>
<path d="M821.6,309.8 L821.6,304.3 L727.6,258.8 L727.6,264.3 Z" fill="#3aac95" stroke="#1c4a3d" stroke-width="0.50" stroke-linejoin="round"/>
<path d="M821.6,309.8 L823.1,309.6 L823.1,304.1 L821.6,304.3 Z" fill="#2f8e7b" stroke="#1c4a3d" stroke-width="0.50" stroke-linejoin="round"/>
<path d="M821.6,304.3 L823.1,304.1 L729.1,258.6 L727.6,258.8 Z" fill="#1f5246" stroke="#1c4a3d" stroke-width="0.50" stroke-linejoin="round"/>
<path d="M1193.7,306.6 L1193.7,300.1 L1101.5,255.5 L1101.5,261.9 Z" fill="#3aac95" stroke="#1c4a3d" stroke-width="0.50" stroke-linejoin="round"/>
<path d="M1193.7,306.6 L1196.3,306.2 L1196.3,299.7 L1193.7,300.1 Z" fill="#2f8e7b" stroke="#1c4a3d" stroke-width="0.50" stroke-linejoin="round"/>
<path d="M1193.7,300.1 L1196.3,299.7 L1104.1,255.1 L1101.5,255.5 Z" fill="#7d8583" stroke="#1c4a3d" stroke-width="0.50" stroke-linejoin="round"/>
<path d="M806.9,559.7 L806.9,553.4 L788.1,544.3 L788.1,550.6 Z" fill="#a77250" stroke="#5a3a26" stroke-width="0.60" stroke-linejoin="round"/>
<path d="M806.9,559.7 L841.3,554.4 L841.3,548.2 L806.9,553.4 Z" fill="#aa7650" stroke="#5a3a26" stroke-width="0.60" stroke-linejoin="round"/>
<path d="M806.9,553.4 L841.3,548.2 L822.5,539.1 L788.1,544.3 Z" fill="#93623e" stroke="#5a3a26" stroke-width="0.60" stroke-linejoin="round"/>
<path d="M435.5,308.0 L435.5,302.4 L343.3,257.8 L343.3,263.3 Z" fill="#3aac95" stroke="#1c4a3d" stroke-width="0.50" stroke-linejoin="round"/>
<path d="M435.5,308.0 L436.9,307.7 L436.9,302.2 L435.5,302.4 Z" fill="#2f8e7b" stroke="#1c4a3d" stroke-width="0.50" stroke-linejoin="round"/>
<path d="M435.5,302.4 L436.9,302.2 L344.7,257.6 L343.3,257.8 Z" fill="#1f5246" stroke="#1c4a3d" stroke-width="0.50" stroke-linejoin="round"/>
<path d="M812.9,311.2 L812.9,304.7 L718.9,259.2 L718.9,265.7 Z" fill="#3aac95" stroke="#1c4a3d" stroke-width="0.50" stroke-linejoin="round"/>
<path d="M812.9,311.2 L815.5,310.8 L815.5,304.3 L812.9,304.7 Z" fill="#2f8e7b" stroke="#1c4a3d" stroke-width="0.50" stroke-linejoin="round"/>
<path d="M812.9,304.7 L815.5,304.3 L721.5,258.8 L718.9,259.2 Z" fill="#7d8583" stroke="#1c4a3d" stroke-width="0.50" stroke-linejoin="round"/>
<path d="M420.0,311.9 L420.0,306.3 L327.8,261.7 L327.8,267.2 Z" fill="#3aac95" stroke="#1c4a3d" stroke-width="0.50" stroke-linejoin="round"/>
<path d="M420.0,311.9 L421.4,311.6 L421.4,306.1 L420.0,306.3 Z" fill="#2f8e7b" stroke="#1c4a3d" stroke-width="0.50" stroke-linejoin="round"/>
<path d="M420.0,306.3 L421.4,306.1 L329.2,261.5 L327.8,261.7 Z" fill="#1f5246" stroke="#1c4a3d" stroke-width="0.50" stroke-linejoin="round"/>
<path d="M1178.2,307.4 L1178.2,300.9 L1086.0,256.3 L1086.0,262.7 Z" fill="#3aac95" stroke="#1c4a3d" stroke-width="0.50" stroke-linejoin="round"/>
<path d="M1178.2,307.4 L1180.8,307.0 L1180.8,300.5 L1178.2,300.9 Z" fill="#2f8e7b" stroke="#1c4a3d" stroke-width="0.50" stroke-linejoin="round"/>
<path d="M1178.2,300.9 L1180.8,300.5 L1088.6,255.9 L1086.0,256.3 Z" fill="#7d8583" stroke="#1c4a3d" stroke-width="0.50" stroke-linejoin="round"/>
<path d="M797.4,312.0 L797.4,305.5 L703.4,260.0 L703.4,266.5 Z" fill="#3aac95" stroke="#1c4a3d" stroke-width="0.50" stroke-linejoin="round"/>
<path d="M797.4,312.0 L800.0,311.6 L800.0,305.1 L797.4,305.5 Z" fill="#2f8e7b" stroke="#1c4a3d" stroke-width="0.50" stroke-linejoin="round"/>
<path d="M797.4,305.5 L800.0,305.1 L706.0,259.6 L703.4,260.0 Z" fill="#7d8583" stroke="#1c4a3d" stroke-width="0.50" stroke-linejoin="round"/>
<path d="M897.1,297.8 L897.1,290.3 L894.8,289.2 L894.8,296.7 Z" fill="#5f8a3a" stroke="#5f8a3a" stroke-width="0.3"/>
<path d="M897.1,297.8 L978.3,277.4 L978.3,269.9 L897.1,290.3 Z" fill="#6f9b46" stroke="#6f9b46" stroke-width="0.3"/>
<path d="M897.1,297.8L978.3,277.4M978.3,269.9L897.1,290.3" fill="none" stroke="#2c4a1c" stroke-width="0.60" stroke-linecap="round"/>
<path d="M897.1,290.3 L978.3,269.9 L976.1,268.8 L894.8,289.2 Z" fill="#78a44c" stroke="#78a44c" stroke-width="0.3"/>
<path d="M897.1,290.3L978.3,269.9M976.1,268.8L894.8,289.2" fill="none" stroke="#2c4a1c" stroke-width="0.60" stroke-linecap="round"/>
<path d="M404.4,315.8 L404.4,310.2 L312.2,265.6 L312.2,271.1 Z" fill="#3aac95" stroke="#1c4a3d" stroke-width="0.50" stroke-linejoin="round"/>
<path d="M404.4,315.8 L405.9,315.5 L405.9,310.0 L404.4,310.2 Z" fill="#2f8e7b" stroke="#1c4a3d" stroke-width="0.50" stroke-linejoin="round"/>
<path d="M404.4,310.2 L405.9,310.0 L313.7,265.4 L312.2,265.6 Z" fill="#1f5246" stroke="#1c4a3d" stroke-width="0.50" stroke-linejoin="round"/>
<path d="M1162.7,308.2 L1162.7,301.7 L1070.5,257.1 L1070.5,263.6 Z" fill="#3aac95" stroke="#1c4a3d" stroke-width="0.50" stroke-linejoin="round"/>
<path d="M1162.7,308.2 L1165.3,307.8 L1165.3,301.4 L1162.7,301.7 Z" fill="#2f8e7b" stroke="#1c4a3d" stroke-width="0.50" stroke-linejoin="round"/>
<path d="M1162.7,301.7 L1165.3,301.4 L1073.1,256.7 L1070.5,257.1 Z" fill="#7d8583" stroke="#1c4a3d" stroke-width="0.50" stroke-linejoin="round"/>
<path d="M391.5,565.3 L391.5,559.1 L372.7,550.0 L372.7,556.2 Z" fill="#a77250" stroke="#5a3a26" stroke-width="0.60" stroke-linejoin="round"/>
<path d="M391.5,565.3 L425.9,560.1 L425.9,553.8 L391.5,559.1 Z" fill="#aa7650" stroke="#5a3a26" stroke-width="0.60" stroke-linejoin="round"/>
<path d="M391.5,559.1 L425.9,553.8 L407.1,544.7 L372.7,550.0 Z" fill="#93623e" stroke="#5a3a26" stroke-width="0.60" stroke-linejoin="round"/>
<path d="M781.9,312.8 L781.9,306.4 L687.9,260.9 L687.9,267.3 Z" fill="#3aac95" stroke="#1c4a3d" stroke-width="0.50" stroke-linejoin="round"/>
<path d="M781.9,312.8 L784.5,312.4 L784.5,306.0 L781.9,306.4 Z" fill="#2f8e7b" stroke="#1c4a3d" stroke-width="0.50" stroke-linejoin="round"/>
<path d="M781.9,306.4 L784.5,306.0 L690.5,260.5 L687.9,260.9 Z" fill="#7d8583" stroke="#1c4a3d" stroke-width="0.50" stroke-linejoin="round"/>
<path d="M1147.1,309.0 L1147.1,302.6 L1054.9,257.9 L1054.9,264.4 Z" fill="#3aac95" stroke="#1c4a3d" stroke-width="0.50" stroke-linejoin="round"/>
<path d="M1147.1,309.0 L1149.7,308.6 L1149.7,302.2 L1147.1,302.6 Z" fill="#2f8e7b" stroke="#1c4a3d" stroke-width="0.50" stroke-linejoin="round"/>
<path d="M1147.1,302.6 L1149.7,302.2 L1057.5,257.5 L1054.9,257.9 Z" fill="#7d8583" stroke="#1c4a3d" stroke-width="0.50" stroke-linejoin="round"/>
<path d="M766.4,313.6 L766.4,307.2 L672.4,261.7 L672.4,268.1 Z" fill="#3aac95" stroke="#1c4a3d" stroke-width="0.50" stroke-linejoin="round"/>
<path d="M766.4,313.6 L769.0,313.2 L769.0,306.8 L766.4,307.2 Z" fill="#2f8e7b" stroke="#1c4a3d" stroke-width="0.50" stroke-linejoin="round"/>
<path d="M766.4,307.2 L769.0,306.8 L675.0,261.3 L672.4,261.7 Z" fill="#7d8583" stroke="#1c4a3d" stroke-width="0.50" stroke-linejoin="round"/>
<path d="M481.7,303.5 L481.7,295.9 L479.4,294.8 L479.4,302.4 Z" fill="#5f8a3a" stroke="#5f8a3a" stroke-width="0.3"/>
<path d="M481.7,303.5 L562.9,283.1 L562.9,275.5 L481.7,295.9 Z" fill="#6f9b46" stroke="#6f9b46" stroke-width="0.3"/>
<path d="M481.7,303.5L562.9,283.1M562.9,275.5L481.7,295.9" fill="none" stroke="#2c4a1c" stroke-width="0.60" stroke-linecap="round"/>
<path d="M481.7,295.9 L562.9,275.5 L560.7,274.4 L479.4,294.8 Z" fill="#78a44c" stroke="#78a44c" stroke-width="0.3"/>
<path d="M481.7,295.9L562.9,275.5M560.7,274.4L479.4,294.8" fill="none" stroke="#2c4a1c" stroke-width="0.60" stroke-linecap="round"/>
<path d="M1131.6,309.8 L1131.6,303.4 L1039.4,258.8 L1039.4,265.2 Z" fill="#3aac95" stroke="#1c4a3d" stroke-width="0.50" stroke-linejoin="round"/>
<path d="M1131.6,309.8 L1134.2,309.4 L1134.2,303.0 L1131.6,303.4 Z" fill="#2f8e7b" stroke="#1c4a3d" stroke-width="0.50" stroke-linejoin="round"/>
<path d="M1131.6,303.4 L1134.2,303.0 L1042.0,258.4 L1039.4,258.8 Z" fill="#7d8583" stroke="#1c4a3d" stroke-width="0.50" stroke-linejoin="round"/>
<path d="M750.9,314.4 L750.9,308.0 L656.8,262.5 L656.8,268.9 Z" fill="#3aac95" stroke="#1c4a3d" stroke-width="0.50" stroke-linejoin="round"/>
<path d="M750.9,314.4 L753.5,314.0 L753.5,307.6 L750.9,308.0 Z" fill="#2f8e7b" stroke="#1c4a3d" stroke-width="0.50" stroke-linejoin="round"/>
<path d="M750.9,308.0 L753.5,307.6 L659.4,262.1 L656.8,262.5 Z" fill="#7d8583" stroke="#1c4a3d" stroke-width="0.50" stroke-linejoin="round"/>
<path d="M1069.5,550.6 L1069.5,535.4 L1065.7,533.6 L1065.7,548.8 Z" fill="#a77250" stroke="#a77250" stroke-width="0.3"/>
<path d="M1069.5,550.6 L1232.0,525.9 L1232.0,510.7 L1069.5,535.4 Z" fill="#aa7650" stroke="#aa7650" stroke-width="0.3"/>
<path d="M1069.5,550.6L1232.0,525.9M1232.0,525.9L1232.0,510.7M1232.0,510.7L1069.5,535.4" fill="none" stroke="#5a3a26" stroke-width="0.60" stroke-linecap="round"/>
<path d="M1069.5,535.4 L1232.0,510.7 L1228.2,508.9 L1065.7,533.6 Z" fill="#93623e" stroke="#93623e" stroke-width="0.3"/>
<path d="M1069.5,535.4L1232.0,510.7M1232.0,510.7L1228.2,508.9M1228.2,508.9L1065.7,533.6" fill="none" stroke="#5a3a26" stroke-width="0.60" stroke-linecap="round"/>
<path d="M1116.1,310.7 L1116.1,304.2 L1023.9,259.6 L1023.9,266.0 Z" fill="#3aac95" stroke="#1c4a3d" stroke-width="0.50" stroke-linejoin="round"/>
<path d="M1116.1,310.7 L1118.7,310.3 L1118.7,303.8 L1116.1,304.2 Z" fill="#2f8e7b" stroke="#1c4a3d" stroke-width="0.50" stroke-linejoin="round"/>
<path d="M1116.1,304.2 L1118.7,303.8 L1026.5,259.2 L1023.9,259.6 Z" fill="#7d8583" stroke="#1c4a3d" stroke-width="0.50" stroke-linejoin="round"/>
<path d="M735.3,315.3 L735.3,308.8 L641.3,263.3 L641.3,269.8 Z" fill="#3aac95" stroke="#1c4a3d" stroke-width="0.50" stroke-linejoin="round"/>
<path d="M735.3,315.3 L737.9,314.9 L737.9,308.4 L735.3,308.8 Z" fill="#2f8e7b" stroke="#1c4a3d" stroke-width="0.50" stroke-linejoin="round"/>
<path d="M735.3,308.8 L737.9,308.4 L643.9,262.9 L641.3,263.3 Z" fill="#7d8583" stroke="#1c4a3d" stroke-width="0.50" stroke-linejoin="round"/>
<path d="M1075.4,533.1 L1221.6,510.9" fill="none" stroke="#6b4428" stroke-width="0.70" stroke-dasharray="1.6,1.1"/>
<path d="M1100.6,311.5 L1100.6,305.0 L1008.4,260.4 L1008.4,266.8 Z" fill="#3aac95" stroke="#1c4a3d" stroke-width="0.50" stroke-linejoin="round"/>
<path d="M1100.6,311.5 L1103.2,311.1 L1103.2,304.6 L1100.6,305.0 Z" fill="#2f8e7b" stroke="#1c4a3d" stroke-width="0.50" stroke-linejoin="round"/>
<path d="M1100.6,305.0 L1103.2,304.6 L1011.0,260.0 L1008.4,260.4 Z" fill="#7d8583" stroke="#1c4a3d" stroke-width="0.50" stroke-linejoin="round"/>
<path d="M719.8,316.1 L719.8,309.6 L625.8,264.1 L625.8,270.6 Z" fill="#3aac95" stroke="#1c4a3d" stroke-width="0.50" stroke-linejoin="round"/>
<path d="M719.8,316.1 L722.4,315.7 L722.4,309.2 L719.8,309.6 Z" fill="#2f8e7b" stroke="#1c4a3d" stroke-width="0.50" stroke-linejoin="round"/>
<path d="M719.8,309.6 L722.4,309.2 L628.4,263.7 L625.8,264.1 Z" fill="#7d8583" stroke="#1c4a3d" stroke-width="0.50" stroke-linejoin="round"/>
<path d="M815.8,318.2 L815.8,310.7 L813.6,309.6 L813.6,317.1 Z" fill="#5f8a3a" stroke="#5f8a3a" stroke-width="0.3"/>
<path d="M815.8,318.2 L897.1,297.8 L897.1,290.3 L815.8,310.7 Z" fill="#6f9b46" stroke="#6f9b46" stroke-width="0.3"/>
<path d="M815.8,318.2L897.1,297.8M897.1,290.3L815.8,310.7" fill="none" stroke="#2c4a1c" stroke-width="0.60" stroke-linecap="round"/>
<path d="M815.8,310.7 L897.1,290.3 L894.8,289.2 L813.6,309.6 Z" fill="#78a44c" stroke="#78a44c" stroke-width="0.3"/>
<path d="M815.8,310.7L897.1,290.3M894.8,289.2L813.6,309.6" fill="none" stroke="#2c4a1c" stroke-width="0.60" stroke-linecap="round"/>
<path d="M1085.1,312.3 L1085.1,305.8 L992.9,261.2 L992.9,267.7 Z" fill="#3aac95" stroke="#1c4a3d" stroke-width="0.50" stroke-linejoin="round"/>
<path d="M1085.1,312.3 L1087.7,311.9 L1087.7,305.5 L1085.1,305.8 Z" fill="#2f8e7b" stroke="#1c4a3d" stroke-width="0.50" stroke-linejoin="round"/>
<path d="M1085.1,305.8 L1087.7,305.5 L995.5,260.8 L992.9,261.2 Z" fill="#7d8583" stroke="#1c4a3d" stroke-width="0.50" stroke-linejoin="round"/>
<path d="M704.3,316.9 L704.3,310.5 L610.3,265.0 L610.3,271.4 Z" fill="#3aac95" stroke="#1c4a3d" stroke-width="0.50" stroke-linejoin="round"/>
<path d="M704.3,316.9 L706.9,316.5 L706.9,310.1 L704.3,310.5 Z" fill="#2f8e7b" stroke="#1c4a3d" stroke-width="0.50" stroke-linejoin="round"/>
<path d="M704.3,310.5 L706.9,310.1 L612.9,264.6 L610.3,265.0 Z" fill="#7d8583" stroke="#1c4a3d" stroke-width="0.50" stroke-linejoin="round"/>
<path d="M1224.9,542.9 L1240.2,540.6 L1240.2,509.8 L1224.9,512.2 Z" fill="#aa7650" stroke="#5a3a26" stroke-width="0.60" stroke-linejoin="round"/>
<path d="M1227.1,312.5 L1202.8,313.8 L1227.1,322.8 Z" fill="#6f9b46" stroke="#2c4a1c" stroke-width="0.60" stroke-linejoin="round"/>
<path d="M818.7,317.1 L818.7,327.4 L843.1,310.9 Z" fill="#6f9b46" stroke="#2c4a1c" stroke-width="0.60" stroke-linejoin="round"/>
<path d="M1069.5,313.1 L1069.5,306.7 L977.3,262.0 L977.3,268.5 Z" fill="#3aac95" stroke="#1c4a3d" stroke-width="0.50" stroke-linejoin="round"/>
<path d="M1069.5,313.1 L1072.2,312.7 L1072.2,306.3 L1069.5,306.7 Z" fill="#2f8e7b" stroke="#1c4a3d" stroke-width="0.50" stroke-linejoin="round"/>
<path d="M1069.5,306.7 L1072.2,306.3 L979.9,261.6 L977.3,262.0 Z" fill="#7d8583" stroke="#1c4a3d" stroke-width="0.50" stroke-linejoin="round"/>
<path d="M688.8,317.7 L688.8,311.3 L594.8,265.8 L594.8,272.2 Z" fill="#3aac95" stroke="#1c4a3d" stroke-width="0.50" stroke-linejoin="round"/>
<path d="M688.8,317.7 L691.4,317.3 L691.4,310.9 L688.8,311.3 Z" fill="#2f8e7b" stroke="#1c4a3d" stroke-width="0.50" stroke-linejoin="round"/>
<path d="M688.8,311.3 L691.4,310.9 L597.4,265.4 L594.8,265.8 Z" fill="#7d8583" stroke="#1c4a3d" stroke-width="0.50" stroke-linejoin="round"/>
<path d="M400.4,323.9 L400.4,316.3 L398.2,315.3 L398.2,322.8 Z" fill="#5f8a3a" stroke="#2c4a1c" stroke-width="0.60" stroke-linejoin="round"/>
<path d="M400.4,323.9 L481.7,303.5 L481.7,295.9 L400.4,316.3 Z" fill="#6f9b46" stroke="#6f9b46" stroke-width="0.3"/>
<path d="M400.4,323.9L481.7,303.5M481.7,295.9L400.4,316.3M400.4,316.3L400.4,323.9" fill="none" stroke="#2c4a1c" stroke-width="0.60" stroke-linecap="round"/>
<path d="M400.4,316.3 L481.7,295.9 L479.4,294.8 L398.2,315.3 Z" fill="#78a44c" stroke="#78a44c" stroke-width="0.3"/>
<path d="M400.4,316.3L481.7,295.9M479.4,294.8L398.2,315.3M398.2,315.3L400.4,316.3" fill="none" stroke="#2c4a1c" stroke-width="0.60" stroke-linecap="round"/>
<path d="M1063.6,314.0 L1063.6,308.5 L971.4,263.8 L971.4,269.4 Z" fill="#3aac95" stroke="#1c4a3d" stroke-width="0.50" stroke-linejoin="round"/>
<path d="M1063.6,314.0 L1065.1,313.8 L1065.1,308.2 L1063.6,308.5 Z" fill="#2f8e7b" stroke="#1c4a3d" stroke-width="0.50" stroke-linejoin="round"/>
<path d="M1063.6,308.5 L1065.1,308.2 L972.9,263.6 L971.4,263.8 Z" fill="#1f5246" stroke="#1c4a3d" stroke-width="0.50" stroke-linejoin="round"/>
<path d="M673.3,318.5 L673.3,312.1 L579.2,266.6 L579.2,273.0 Z" fill="#3aac95" stroke="#1c4a3d" stroke-width="0.50" stroke-linejoin="round"/>
<path d="M673.3,318.5 L675.9,318.2 L675.9,311.7 L673.3,312.1 Z" fill="#2f8e7b" stroke="#1c4a3d" stroke-width="0.50" stroke-linejoin="round"/>
<path d="M673.3,312.1 L675.9,311.7 L581.8,266.2 L579.2,266.6 Z" fill="#7d8583" stroke="#1c4a3d" stroke-width="0.50" stroke-linejoin="round"/>
<path d="M809.5,548.6 L824.8,546.3 L824.8,515.5 L809.5,517.8 Z" fill="#aa7650" stroke="#5a3a26" stroke-width="0.60" stroke-linejoin="round"/>
<path d="M905.9,418.4 L905.9,410.2 L815.5,366.4 L815.5,374.6 Z" fill="#5f8a3a" stroke="#5f8a3a" stroke-width="0.3"/>
<path d="M905.9,418.4L905.9,410.2M905.9,410.2L815.5,366.4M815.5,374.6L905.9,418.4" fill="none" stroke="#2c4a1c" stroke-width="0.60" stroke-linecap="round"/>
<path d="M905.9,418.4 L910.0,417.8 L910.0,409.5 L905.9,410.2 Z" fill="#6f9b46" stroke="#2c4a1c" stroke-width="0.60" stroke-linejoin="round"/>
<path d="M905.9,410.2 L910.0,409.5 L819.6,365.8 L815.5,366.4 Z" fill="#78a44c" stroke="#78a44c" stroke-width="0.3"/>
<path d="M905.9,410.2L910.0,409.5M910.0,409.5L819.6,365.8M815.5,366.4L905.9,410.2" fill="none" stroke="#2c4a1c" stroke-width="0.60" stroke-linecap="round"/>
<path d="M1150.0,316.9 L1150.0,309.3 L1147.7,308.2 L1147.7,315.8 Z" fill="#5f8a3a" stroke="#5f8a3a" stroke-width="0.3"/>
<path d="M1150.0,316.9 L1231.2,312.6 L1231.2,305.0 L1150.0,309.3 Z" fill="#6f9b46" stroke="#6f9b46" stroke-width="0.3"/>
<path d="M1150.0,316.9L1231.2,312.6M1231.2,312.6L1231.2,305.0M1231.2,305.0L1150.0,309.3" fill="none" stroke="#2c4a1c" stroke-width="0.60" stroke-linecap="round"/>
<path d="M1150.0,309.3 L1231.2,305.0 L1229.0,304.0 L1147.7,308.2 Z" fill="#78a44c" stroke="#78a44c" stroke-width="0.3"/>
<path d="M1150.0,309.3L1231.2,305.0M1231.2,305.0L1229.0,304.0M1229.0,304.0L1147.7,308.2" fill="none" stroke="#2c4a1c" stroke-width="0.60" stroke-linecap="round"/>
<path d="M1048.1,317.9 L1048.1,312.4 L955.9,267.7 L955.9,273.3 Z" fill="#3aac95" stroke="#1c4a3d" stroke-width="0.50" stroke-linejoin="round"/>
<path d="M1048.1,317.9 L1049.6,317.7 L1049.6,312.1 L1048.1,312.4 Z" fill="#2f8e7b" stroke="#1c4a3d" stroke-width="0.50" stroke-linejoin="round"/>
<path d="M1048.1,312.4 L1049.6,312.1 L957.4,267.5 L955.9,267.7 Z" fill="#1f5246" stroke="#1c4a3d" stroke-width="0.50" stroke-linejoin="round"/>
<path d="M811.7,318.1 L787.4,319.4 L811.7,328.5 Z" fill="#6f9b46" stroke="#2c4a1c" stroke-width="0.60" stroke-linejoin="round"/>
<path d="M403.3,322.7 L403.3,333.1 L427.7,316.6 Z" fill="#6f9b46" stroke="#2c4a1c" stroke-width="0.60" stroke-linejoin="round"/>
<path d="M1224.9,512.2 L1240.2,509.8 L1235.3,507.5 L1220.0,509.8 Z" fill="#93623e" stroke="#5a3a26" stroke-width="0.60" stroke-linejoin="round"/>
<path d="M1228.1,511.1 L1228.1,305.7 L1225.1,304.3 L1225.1,509.6 Z" fill="#7b4490" stroke="#2e1838" stroke-width="0.80" stroke-linejoin="round"/>
<path d="M1228.1,511.1 L1235.1,510.0 L1235.1,304.7 L1228.1,305.7 Z" fill="#9756ac" stroke="#2e1838" stroke-width="0.80" stroke-linejoin="round"/>
<path d="M1228.1,305.7 L1235.1,304.7 L1232.1,303.2 L1225.1,304.3 Z" fill="#8b4ca0" stroke="#2e1838" stroke-width="0.80" stroke-linejoin="round"/>
<path d="M657.7,319.4 L657.7,312.9 L563.7,267.4 L563.7,273.9 Z" fill="#3aac95" stroke="#1c4a3d" stroke-width="0.50" stroke-linejoin="round"/>
<path d="M657.7,319.4 L660.3,319.0 L660.3,312.5 L657.7,312.9 Z" fill="#2f8e7b" stroke="#1c4a3d" stroke-width="0.50" stroke-linejoin="round"/>
<path d="M657.7,312.9 L660.3,312.5 L566.3,267.0 L563.7,267.4 Z" fill="#7d8583" stroke="#1c4a3d" stroke-width="0.50" stroke-linejoin="round"/>
<path d="M1032.6,321.8 L1032.6,316.3 L940.4,271.6 L940.4,277.2 Z" fill="#3aac95" stroke="#1c4a3d" stroke-width="0.50" stroke-linejoin="round"/>
<path d="M1032.6,321.8 L1034.0,321.6 L1034.0,316.0 L1032.6,316.3 Z" fill="#2f8e7b" stroke="#1c4a3d" stroke-width="0.50" stroke-linejoin="round"/>
<path d="M1032.6,316.3 L1034.0,316.0 L941.8,271.4 L940.4,271.6 Z" fill="#1f5246" stroke="#1c4a3d" stroke-width="0.50" stroke-linejoin="round"/>
<path d="M651.8,320.3 L651.8,314.7 L557.8,269.2 L557.8,274.8 Z" fill="#3aac95" stroke="#1c4a3d" stroke-width="0.50" stroke-linejoin="round"/>
<path d="M651.8,320.3 L653.3,320.0 L653.3,314.5 L651.8,314.7 Z" fill="#2f8e7b" stroke="#1c4a3d" stroke-width="0.50" stroke-linejoin="round"/>
<path d="M651.8,314.7 L653.3,314.5 L559.3,269.0 L557.8,269.2 Z" fill="#1f5246" stroke="#1c4a3d" stroke-width="0.50" stroke-linejoin="round"/>
<path d="M904.3,576.7 L904.3,561.5 L813.9,517.7 L813.9,532.9 Z" fill="#a77250" stroke="#a77250" stroke-width="0.3"/>
<path d="M904.3,576.7L904.3,561.5M904.3,561.5L813.9,517.7M813.9,532.9L904.3,576.7" fill="none" stroke="#5a3a26" stroke-width="0.60" stroke-linecap="round"/>
<path d="M904.3,576.7 L910.8,575.7 L910.8,560.5 L904.3,561.5 Z" fill="#aa7650" stroke="#5a3a26" stroke-width="0.60" stroke-linejoin="round"/>
<path d="M904.3,561.5 L910.8,560.5 L820.4,516.7 L813.9,517.7 Z" fill="#93623e" stroke="#93623e" stroke-width="0.3"/>
<path d="M904.3,561.5L910.8,560.5M910.8,560.5L820.4,516.7M813.9,517.7L904.3,561.5" fill="none" stroke="#5a3a26" stroke-width="0.60" stroke-linecap="round"/>
<path d="M1017.1,325.7 L1017.1,320.2 L924.9,275.5 L924.9,281.1 Z" fill="#3aac95" stroke="#1c4a3d" stroke-width="0.50" stroke-linejoin="round"/>
<path d="M1017.1,325.7 L1018.5,325.5 L1018.5,319.9 L1017.1,320.2 Z" fill="#2f8e7b" stroke="#1c4a3d" stroke-width="0.50" stroke-linejoin="round"/>
<path d="M1017.1,320.2 L1018.5,319.9 L926.3,275.3 L924.9,275.5 Z" fill="#1f5246" stroke="#1c4a3d" stroke-width="0.50" stroke-linejoin="round"/>
<path d="M903.0,558.8 L821.7,519.4" fill="none" stroke="#6b4428" stroke-width="0.70" stroke-dasharray="1.6,1.1"/>
<path d="M394.1,554.2 L409.4,551.9 L409.4,521.1 L394.1,523.5 Z" fill="#aa7650" stroke="#5a3a26" stroke-width="0.60" stroke-linejoin="round"/>
<path d="M490.5,424.0 L490.5,415.8 L400.1,372.1 L400.1,380.3 Z" fill="#5f8a3a" stroke="#5f8a3a" stroke-width="0.3"/>
<path d="M490.5,415.8L400.1,372.1M400.1,380.3L490.5,424.0" fill="none" stroke="#2c4a1c" stroke-width="0.60" stroke-linecap="round"/>
<path d="M490.5,424.0 L494.6,423.4 L494.6,415.2 L490.5,415.8 Z" fill="#6f9b46" stroke="#6f9b46" stroke-width="0.3"/>
<path d="M490.5,415.8 L494.6,415.2 L404.2,371.4 L400.1,372.1 Z" fill="#78a44c" stroke="#78a44c" stroke-width="0.3"/>
<path d="M494.6,415.2L404.2,371.4M400.1,372.1L490.5,415.8" fill="none" stroke="#2c4a1c" stroke-width="0.60" stroke-linecap="round"/>
<path d="M734.6,322.5 L734.6,315.0 L732.3,313.9 L732.3,321.4 Z" fill="#5f8a3a" stroke="#5f8a3a" stroke-width="0.3"/>
<path d="M734.6,322.5 L815.8,318.2 L815.8,310.7 L734.6,315.0 Z" fill="#6f9b46" stroke="#6f9b46" stroke-width="0.3"/>
<path d="M734.6,322.5L815.8,318.2M815.8,310.7L734.6,315.0" fill="none" stroke="#2c4a1c" stroke-width="0.60" stroke-linecap="round"/>
<path d="M734.6,315.0 L815.8,310.7 L813.6,309.6 L732.3,313.9 Z" fill="#78a44c" stroke="#78a44c" stroke-width="0.3"/>
<path d="M734.6,315.0L815.8,310.7M813.6,309.6L732.3,313.9" fill="none" stroke="#2c4a1c" stroke-width="0.60" stroke-linecap="round"/>
<path d="M636.3,324.2 L636.3,318.6 L542.3,273.1 L542.3,278.7 Z" fill="#3aac95" stroke="#1c4a3d" stroke-width="0.50" stroke-linejoin="round"/>
<path d="M636.3,324.2 L637.8,323.9 L637.8,318.4 L636.3,318.6 Z" fill="#2f8e7b" stroke="#1c4a3d" stroke-width="0.50" stroke-linejoin="round"/>
<path d="M636.3,318.6 L637.8,318.4 L543.7,272.9 L542.3,273.1 Z" fill="#1f5246" stroke="#1c4a3d" stroke-width="0.50" stroke-linejoin="round"/>
<path d="M809.5,517.8 L824.8,515.5 L819.9,513.1 L804.6,515.4 Z" fill="#93623e" stroke="#5a3a26" stroke-width="0.60" stroke-linejoin="round"/>
<path d="M812.7,516.7 L812.7,311.4 L809.7,310.0 L809.7,515.3 Z" fill="#7b4490" stroke="#2e1838" stroke-width="0.80" stroke-linejoin="round"/>
<path d="M812.7,516.7 L819.7,515.7 L819.7,310.3 L812.7,311.4 Z" fill="#9756ac" stroke="#2e1838" stroke-width="0.80" stroke-linejoin="round"/>
<path d="M812.7,311.4 L819.7,310.3 L816.7,308.9 L809.7,310.0 Z" fill="#8b4ca0" stroke="#2e1838" stroke-width="0.80" stroke-linejoin="round"/>
<path d="M1001.5,329.6 L1001.5,324.1 L909.3,279.4 L909.3,285.0 Z" fill="#3aac95" stroke="#1c4a3d" stroke-width="0.50" stroke-linejoin="round"/>
<path d="M1001.5,329.6 L1003.0,329.4 L1003.0,323.8 L1001.5,324.1 Z" fill="#2f8e7b" stroke="#1c4a3d" stroke-width="0.50" stroke-linejoin="round"/>
<path d="M1001.5,324.1 L1003.0,323.8 L910.8,279.2 L909.3,279.4 Z" fill="#1f5246" stroke="#1c4a3d" stroke-width="0.50" stroke-linejoin="round"/>
<path d="M620.8,328.1 L620.8,322.5 L526.8,277.0 L526.8,282.6 Z" fill="#3aac95" stroke="#1c4a3d" stroke-width="0.50" stroke-linejoin="round"/>
<path d="M620.8,328.1 L622.2,327.8 L622.2,322.3 L620.8,322.5 Z" fill="#2f8e7b" stroke="#1c4a3d" stroke-width="0.50" stroke-linejoin="round"/>
<path d="M620.8,322.5 L622.2,322.3 L528.2,276.8 L526.8,277.0 Z" fill="#1f5246" stroke="#1c4a3d" stroke-width="0.50" stroke-linejoin="round"/>
<path d="M488.9,582.3 L488.9,567.1 L398.5,523.4 L398.5,538.6 Z" fill="#a77250" stroke="#a77250" stroke-width="0.3"/>
<path d="M488.9,567.1L398.5,523.4M398.5,538.6L488.9,582.3" fill="none" stroke="#5a3a26" stroke-width="0.60" stroke-linecap="round"/>
<path d="M488.9,582.3 L495.4,581.4 L495.4,566.1 L488.9,567.1 Z" fill="#aa7650" stroke="#aa7650" stroke-width="0.3"/>
<path d="M488.9,567.1 L495.4,566.1 L405.0,522.4 L398.5,523.4 Z" fill="#93623e" stroke="#93623e" stroke-width="0.3"/>
<path d="M495.4,566.1L405.0,522.4M398.5,523.4L488.9,567.1" fill="none" stroke="#5a3a26" stroke-width="0.60" stroke-linecap="round"/>
<path d="M809.5,548.6 L809.5,517.8 L804.6,515.4 L804.6,546.2 Z" fill="#a77250" stroke="#5a3a26" stroke-width="0.60" stroke-linejoin="round"/>
<path d="M986.0,333.5 L986.0,328.0 L893.8,283.3 L893.8,288.9 Z" fill="#3aac95" stroke="#1c4a3d" stroke-width="0.50" stroke-linejoin="round"/>
<path d="M986.0,333.5 L987.5,333.3 L987.5,327.7 L986.0,328.0 Z" fill="#2f8e7b" stroke="#1c4a3d" stroke-width="0.50" stroke-linejoin="round"/>
<path d="M986.0,328.0 L987.5,327.7 L895.3,283.1 L893.8,283.3 Z" fill="#1f5246" stroke="#1c4a3d" stroke-width="0.50" stroke-linejoin="round"/>
<path d="M487.6,564.4 L406.3,525.1" fill="none" stroke="#6b4428" stroke-width="0.70" stroke-dasharray="1.6,1.1"/>
<path d="M605.3,332.0 L605.3,326.4 L511.2,280.9 L511.2,286.5 Z" fill="#3aac95" stroke="#1c4a3d" stroke-width="0.50" stroke-linejoin="round"/>
<path d="M605.3,332.0 L606.7,331.7 L606.7,326.2 L605.3,326.4 Z" fill="#2f8e7b" stroke="#1c4a3d" stroke-width="0.50" stroke-linejoin="round"/>
<path d="M605.3,326.4 L606.7,326.2 L512.7,280.7 L511.2,280.9 Z" fill="#1f5246" stroke="#1c4a3d" stroke-width="0.50" stroke-linejoin="round"/>
<path d="M394.1,523.5 L409.4,521.1 L404.5,518.8 L389.2,521.1 Z" fill="#93623e" stroke="#5a3a26" stroke-width="0.60" stroke-linejoin="round"/>
<path d="M970.5,337.4 L970.5,331.8 L878.3,287.2 L878.3,292.8 Z" fill="#3aac95" stroke="#1c4a3d" stroke-width="0.50" stroke-linejoin="round"/>
<path d="M970.5,337.4 L972.0,337.2 L972.0,331.6 L970.5,331.8 Z" fill="#2f8e7b" stroke="#1c4a3d" stroke-width="0.50" stroke-linejoin="round"/>
<path d="M970.5,331.8 L972.0,331.6 L879.8,287.0 L878.3,287.2 Z" fill="#1f5246" stroke="#1c4a3d" stroke-width="0.50" stroke-linejoin="round"/>
<path d="M397.3,522.4 L397.3,317.0 L394.3,315.6 L394.3,520.9 Z" fill="#7b4490" stroke="#2e1838" stroke-width="0.80" stroke-linejoin="round"/>
<path d="M397.3,522.4 L404.3,521.3 L404.3,316.0 L397.3,317.0 Z" fill="#9756ac" stroke="#2e1838" stroke-width="0.80" stroke-linejoin="round"/>
<path d="M397.3,317.0 L404.3,316.0 L401.3,314.5 L394.3,315.6 Z" fill="#8b4ca0" stroke="#2e1838" stroke-width="0.80" stroke-linejoin="round"/>
<path d="M589.7,335.9 L589.7,330.3 L495.7,284.8 L495.7,290.4 Z" fill="#3aac95" stroke="#1c4a3d" stroke-width="0.50" stroke-linejoin="round"/>
<path d="M589.7,335.9 L591.2,335.6 L591.2,330.1 L589.7,330.3 Z" fill="#2f8e7b" stroke="#1c4a3d" stroke-width="0.50" stroke-linejoin="round"/>
<path d="M589.7,330.3 L591.2,330.1 L497.2,284.6 L495.7,284.8 Z" fill="#1f5246" stroke="#1c4a3d" stroke-width="0.50" stroke-linejoin="round"/>
<path d="M1068.7,321.2 L1068.7,313.6 L1066.5,312.5 L1066.5,320.1 Z" fill="#5f8a3a" stroke="#5f8a3a" stroke-width="0.3"/>
<path d="M1068.7,321.2 L1150.0,316.9 L1150.0,309.3 L1068.7,313.6 Z" fill="#6f9b46" stroke="#6f9b46" stroke-width="0.3"/>
<path d="M1068.7,321.2L1150.0,316.9M1150.0,309.3L1068.7,313.6" fill="none" stroke="#2c4a1c" stroke-width="0.60" stroke-linecap="round"/>
<path d="M1068.7,313.6 L1150.0,309.3 L1147.7,308.2 L1066.5,312.5 Z" fill="#78a44c" stroke="#78a44c" stroke-width="0.3"/>
<path d="M1068.7,313.6L1150.0,309.3M1147.7,308.2L1066.5,312.5" fill="none" stroke="#2c4a1c" stroke-width="0.60" stroke-linecap="round"/>
<path d="M955.0,341.3 L955.0,335.7 L862.8,291.1 L862.8,296.7 Z" fill="#3aac95" stroke="#1c4a3d" stroke-width="0.50" stroke-linejoin="round"/>
<path d="M955.0,341.3 L956.5,341.1 L956.5,335.5 L955.0,335.7 Z" fill="#2f8e7b" stroke="#1c4a3d" stroke-width="0.50" stroke-linejoin="round"/>
<path d="M955.0,335.7 L956.5,335.5 L864.2,290.9 L862.8,291.1 Z" fill="#1f5246" stroke="#1c4a3d" stroke-width="0.50" stroke-linejoin="round"/>
<path d="M394.1,554.2 L394.1,523.5 L389.2,521.1 L389.2,551.9 Z" fill="#a77250" stroke="#5a3a26" stroke-width="0.60" stroke-linejoin="round"/>
<path d="M907.0,575.3 L907.0,560.1 L903.2,558.3 L903.2,573.5 Z" fill="#a77250" stroke="#a77250" stroke-width="0.3"/>
<path d="M907.0,575.3 L1069.5,550.6 L1069.5,535.4 L907.0,560.1 Z" fill="#aa7650" stroke="#aa7650" stroke-width="0.3"/>
<path d="M907.0,575.3L1069.5,550.6M1069.5,535.4L907.0,560.1" fill="none" stroke="#5a3a26" stroke-width="0.60" stroke-linecap="round"/>
<path d="M907.0,560.1 L1069.5,535.4 L1065.7,533.6 L903.2,558.3 Z" fill="#93623e" stroke="#93623e" stroke-width="0.3"/>
<path d="M907.0,560.1L1069.5,535.4M1065.7,533.6L903.2,558.3" fill="none" stroke="#5a3a26" stroke-width="0.60" stroke-linecap="round"/>
<path d="M574.2,339.8 L574.2,334.2 L480.2,288.7 L480.2,294.3 Z" fill="#3aac95" stroke="#1c4a3d" stroke-width="0.50" stroke-linejoin="round"/>
<path d="M574.2,339.8 L575.7,339.5 L575.7,334.0 L574.2,334.2 Z" fill="#2f8e7b" stroke="#1c4a3d" stroke-width="0.50" stroke-linejoin="round"/>
<path d="M574.2,334.2 L575.7,334.0 L481.7,288.5 L480.2,288.7 Z" fill="#1f5246" stroke="#1c4a3d" stroke-width="0.50" stroke-linejoin="round"/>
<path d="M912.9,557.8 L1059.1,535.6" fill="none" stroke="#6b4428" stroke-width="0.70" stroke-dasharray="1.6,1.1"/>
<path d="M939.5,345.2 L939.5,339.6 L847.3,295.0 L847.3,300.6 Z" fill="#3aac95" stroke="#1c4a3d" stroke-width="0.50" stroke-linejoin="round"/>
<path d="M939.5,345.2 L940.9,345.0 L940.9,339.4 L939.5,339.6 Z" fill="#2f8e7b" stroke="#1c4a3d" stroke-width="0.50" stroke-linejoin="round"/>
<path d="M939.5,339.6 L940.9,339.4 L848.7,294.8 L847.3,295.0 Z" fill="#1f5246" stroke="#1c4a3d" stroke-width="0.50" stroke-linejoin="round"/>
<path d="M558.7,343.7 L558.7,338.1 L464.7,292.6 L464.7,298.2 Z" fill="#3aac95" stroke="#1c4a3d" stroke-width="0.50" stroke-linejoin="round"/>
<path d="M558.7,343.7 L560.2,343.4 L560.2,337.9 L558.7,338.1 Z" fill="#2f8e7b" stroke="#1c4a3d" stroke-width="0.50" stroke-linejoin="round"/>
<path d="M558.7,338.1 L560.2,337.9 L466.1,292.4 L464.7,292.6 Z" fill="#1f5246" stroke="#1c4a3d" stroke-width="0.50" stroke-linejoin="round"/>
<path d="M924.0,349.1 L924.0,343.5 L831.7,298.9 L831.7,304.5 Z" fill="#3aac95" stroke="#1c4a3d" stroke-width="0.50" stroke-linejoin="round"/>
<path d="M924.0,349.1 L925.4,348.9 L925.4,343.3 L924.0,343.5 Z" fill="#2f8e7b" stroke="#1c4a3d" stroke-width="0.50" stroke-linejoin="round"/>
<path d="M924.0,343.5 L925.4,343.3 L833.2,298.7 L831.7,298.9 Z" fill="#1f5246" stroke="#1c4a3d" stroke-width="0.50" stroke-linejoin="round"/>
<path d="M653.3,326.8 L653.3,319.3 L651.1,318.2 L651.1,325.7 Z" fill="#5f8a3a" stroke="#5f8a3a" stroke-width="0.3"/>
<path d="M653.3,326.8 L734.6,322.5 L734.6,315.0 L653.3,319.3 Z" fill="#6f9b46" stroke="#6f9b46" stroke-width="0.3"/>
<path d="M653.3,326.8L734.6,322.5M734.6,315.0L653.3,319.3" fill="none" stroke="#2c4a1c" stroke-width="0.60" stroke-linecap="round"/>
<path d="M653.3,319.3 L734.6,315.0 L732.3,313.9 L651.1,318.2 Z" fill="#78a44c" stroke="#78a44c" stroke-width="0.3"/>
<path d="M653.3,319.3L734.6,315.0M732.3,313.9L651.1,318.2" fill="none" stroke="#2c4a1c" stroke-width="0.60" stroke-linecap="round"/>
<path d="M543.2,347.5 L543.2,342.0 L449.2,296.5 L449.2,302.0 Z" fill="#3aac95" stroke="#1c4a3d" stroke-width="0.50" stroke-linejoin="round"/>
<path d="M543.2,347.5 L544.6,347.3 L544.6,341.8 L543.2,342.0 Z" fill="#2f8e7b" stroke="#1c4a3d" stroke-width="0.50" stroke-linejoin="round"/>
<path d="M543.2,342.0 L544.6,341.8 L450.6,296.3 L449.2,296.5 Z" fill="#1f5246" stroke="#1c4a3d" stroke-width="0.50" stroke-linejoin="round"/>
<path d="M908.4,353.0 L908.4,347.4 L816.2,302.8 L816.2,308.4 Z" fill="#3aac95" stroke="#1c4a3d" stroke-width="0.50" stroke-linejoin="round"/>
<path d="M908.4,353.0 L909.9,352.8 L909.9,347.2 L908.4,347.4 Z" fill="#2f8e7b" stroke="#1c4a3d" stroke-width="0.50" stroke-linejoin="round"/>
<path d="M908.4,347.4 L909.9,347.2 L817.7,302.6 L816.2,302.8 Z" fill="#1f5246" stroke="#1c4a3d" stroke-width="0.50" stroke-linejoin="round"/>
<path d="M527.7,351.4 L527.7,345.9 L433.6,300.4 L433.6,305.9 Z" fill="#3aac95" stroke="#1c4a3d" stroke-width="0.50" stroke-linejoin="round"/>
<path d="M527.7,351.4 L529.1,351.2 L529.1,345.7 L527.7,345.9 Z" fill="#2f8e7b" stroke="#1c4a3d" stroke-width="0.50" stroke-linejoin="round"/>
<path d="M527.7,345.9 L529.1,345.7 L435.1,300.2 L433.6,300.4 Z" fill="#1f5246" stroke="#1c4a3d" stroke-width="0.50" stroke-linejoin="round"/>
<path d="M899.7,354.3 L899.7,347.9 L807.5,303.2 L807.5,309.7 Z" fill="#3aac95" stroke="#1c4a3d" stroke-width="0.50" stroke-linejoin="round"/>
<path d="M899.7,354.3 L902.3,353.9 L902.3,347.5 L899.7,347.9 Z" fill="#2f8e7b" stroke="#1c4a3d" stroke-width="0.50" stroke-linejoin="round"/>
<path d="M899.7,347.9 L902.3,347.5 L810.1,302.8 L807.5,303.2 Z" fill="#7d8583" stroke="#1c4a3d" stroke-width="0.50" stroke-linejoin="round"/>
<path d="M897.3,603.4 L897.3,597.2 L878.5,588.1 L878.5,594.3 Z" fill="#a77250" stroke="#5a3a26" stroke-width="0.60" stroke-linejoin="round"/>
<path d="M897.3,603.4 L931.7,598.2 L931.7,591.9 L897.3,597.2 Z" fill="#aa7650" stroke="#5a3a26" stroke-width="0.60" stroke-linejoin="round"/>
<path d="M897.3,597.2 L931.7,591.9 L912.9,582.8 L878.5,588.1 Z" fill="#93623e" stroke="#5a3a26" stroke-width="0.60" stroke-linejoin="round"/>
<path d="M512.1,355.3 L512.1,349.8 L418.1,304.3 L418.1,309.8 Z" fill="#3aac95" stroke="#1c4a3d" stroke-width="0.50" stroke-linejoin="round"/>
<path d="M512.1,355.3 L513.6,355.1 L513.6,349.6 L512.1,349.8 Z" fill="#2f8e7b" stroke="#1c4a3d" stroke-width="0.50" stroke-linejoin="round"/>
<path d="M512.1,349.8 L513.6,349.6 L419.6,304.1 L418.1,304.3 Z" fill="#1f5246" stroke="#1c4a3d" stroke-width="0.50" stroke-linejoin="round"/>
<path d="M884.2,355.1 L884.2,348.7 L792.0,304.1 L792.0,310.5 Z" fill="#3aac95" stroke="#1c4a3d" stroke-width="0.50" stroke-linejoin="round"/>
<path d="M884.2,355.1 L886.8,354.7 L886.8,348.3 L884.2,348.7 Z" fill="#2f8e7b" stroke="#1c4a3d" stroke-width="0.50" stroke-linejoin="round"/>
<path d="M884.2,348.7 L886.8,348.3 L794.6,303.7 L792.0,304.1 Z" fill="#7d8583" stroke="#1c4a3d" stroke-width="0.50" stroke-linejoin="round"/>
<path d="M899.9,592.3 L899.9,561.6 L895.0,559.2 L895.0,590.0 Z" fill="#a77250" stroke="#5a3a26" stroke-width="0.60" stroke-linejoin="round"/>
<path d="M987.5,341.6 L987.5,334.0 L985.2,332.9 L985.2,340.5 Z" fill="#5f8a3a" stroke="#5f8a3a" stroke-width="0.3"/>
<path d="M987.5,341.6 L1068.7,321.2 L1068.7,313.6 L987.5,334.0 Z" fill="#6f9b46" stroke="#6f9b46" stroke-width="0.3"/>
<path d="M987.5,341.6L1068.7,321.2M1068.7,313.6L987.5,334.0" fill="none" stroke="#2c4a1c" stroke-width="0.60" stroke-linecap="round"/>
<path d="M987.5,334.0 L1068.7,313.6 L1066.5,312.5 L985.2,332.9 Z" fill="#78a44c" stroke="#78a44c" stroke-width="0.3"/>
<path d="M987.5,334.0L1068.7,313.6M1066.5,312.5L985.2,332.9" fill="none" stroke="#2c4a1c" stroke-width="0.60" stroke-linecap="round"/>
<path d="M496.6,359.2 L496.6,353.7 L402.6,308.2 L402.6,313.7 Z" fill="#3aac95" stroke="#1c4a3d" stroke-width="0.50" stroke-linejoin="round"/>
<path d="M496.6,359.2 L498.1,359.0 L498.1,353.5 L496.6,353.7 Z" fill="#2f8e7b" stroke="#1c4a3d" stroke-width="0.50" stroke-linejoin="round"/>
<path d="M496.6,353.7 L498.1,353.5 L404.1,308.0 L402.6,308.2 Z" fill="#1f5246" stroke="#1c4a3d" stroke-width="0.50" stroke-linejoin="round"/>
<path d="M868.7,356.0 L868.7,349.5 L776.5,304.9 L776.5,311.3 Z" fill="#3aac95" stroke="#1c4a3d" stroke-width="0.50" stroke-linejoin="round"/>
<path d="M868.7,356.0 L871.3,355.6 L871.3,349.1 L868.7,349.5 Z" fill="#2f8e7b" stroke="#1c4a3d" stroke-width="0.50" stroke-linejoin="round"/>
<path d="M868.7,349.5 L871.3,349.1 L779.1,304.5 L776.5,304.9 Z" fill="#7d8583" stroke="#1c4a3d" stroke-width="0.50" stroke-linejoin="round"/>
<path d="M481.9,609.1 L481.9,602.8 L463.1,593.7 L463.1,600.0 Z" fill="#a77250" stroke="#5a3a26" stroke-width="0.60" stroke-linejoin="round"/>
<path d="M481.9,609.1 L516.3,603.8 L516.3,597.6 L481.9,602.8 Z" fill="#aa7650" stroke="#5a3a26" stroke-width="0.60" stroke-linejoin="round"/>
<path d="M481.9,602.8 L516.3,597.6 L497.5,588.5 L463.1,593.7 Z" fill="#93623e" stroke="#5a3a26" stroke-width="0.60" stroke-linejoin="round"/>
<path d="M853.2,356.8 L853.2,350.3 L761.0,305.7 L761.0,312.1 Z" fill="#3aac95" stroke="#1c4a3d" stroke-width="0.50" stroke-linejoin="round"/>
<path d="M853.2,356.8 L855.8,356.4 L855.8,349.9 L853.2,350.3 Z" fill="#2f8e7b" stroke="#1c4a3d" stroke-width="0.50" stroke-linejoin="round"/>
<path d="M853.2,350.3 L855.8,349.9 L763.6,305.3 L761.0,305.7 Z" fill="#7d8583" stroke="#1c4a3d" stroke-width="0.50" stroke-linejoin="round"/>
<path d="M572.1,347.2 L572.1,339.7 L569.8,338.6 L569.8,346.1 Z" fill="#5f8a3a" stroke="#5f8a3a" stroke-width="0.3"/>
<path d="M572.1,347.2 L653.3,326.8 L653.3,319.3 L572.1,339.7 Z" fill="#6f9b46" stroke="#6f9b46" stroke-width="0.3"/>
<path d="M572.1,347.2L653.3,326.8M653.3,319.3L572.1,339.7" fill="none" stroke="#2c4a1c" stroke-width="0.60" stroke-linecap="round"/>
<path d="M572.1,339.7 L653.3,319.3 L651.1,318.2 L569.8,338.6 Z" fill="#78a44c" stroke="#78a44c" stroke-width="0.3"/>
<path d="M572.1,339.7L653.3,319.3M651.1,318.2L569.8,338.6" fill="none" stroke="#2c4a1c" stroke-width="0.60" stroke-linecap="round"/>
<path d="M837.7,357.6 L837.7,351.1 L745.5,306.5 L745.5,313.0 Z" fill="#3aac95" stroke="#1c4a3d" stroke-width="0.50" stroke-linejoin="round"/>
<path d="M837.7,357.6 L840.3,357.2 L840.3,350.8 L837.7,351.1 Z" fill="#2f8e7b" stroke="#1c4a3d" stroke-width="0.50" stroke-linejoin="round"/>
<path d="M837.7,351.1 L840.3,350.8 L748.1,306.1 L745.5,306.5 Z" fill="#7d8583" stroke="#1c4a3d" stroke-width="0.50" stroke-linejoin="round"/>
<path d="M822.1,358.4 L822.1,352.0 L729.9,307.3 L729.9,313.8 Z" fill="#3aac95" stroke="#1c4a3d" stroke-width="0.50" stroke-linejoin="round"/>
<path d="M822.1,358.4 L824.7,358.0 L824.7,351.6 L822.1,352.0 Z" fill="#2f8e7b" stroke="#1c4a3d" stroke-width="0.50" stroke-linejoin="round"/>
<path d="M822.1,352.0 L824.7,351.6 L732.5,306.9 L729.9,307.3 Z" fill="#7d8583" stroke="#1c4a3d" stroke-width="0.50" stroke-linejoin="round"/>
<path d="M806.6,359.2 L806.6,352.8 L714.4,308.2 L714.4,314.6 Z" fill="#3aac95" stroke="#1c4a3d" stroke-width="0.50" stroke-linejoin="round"/>
<path d="M806.6,359.2 L809.2,358.8 L809.2,352.4 L806.6,352.8 Z" fill="#2f8e7b" stroke="#1c4a3d" stroke-width="0.50" stroke-linejoin="round"/>
<path d="M806.6,352.8 L809.2,352.4 L717.0,307.8 L714.4,308.2 Z" fill="#7d8583" stroke="#1c4a3d" stroke-width="0.50" stroke-linejoin="round"/>
<path d="M906.2,362.0 L906.2,354.4 L904.0,353.4 L904.0,360.9 Z" fill="#5f8a3a" stroke="#5f8a3a" stroke-width="0.3"/>
<path d="M906.2,362.0 L987.5,341.6 L987.5,334.0 L906.2,354.4 Z" fill="#6f9b46" stroke="#6f9b46" stroke-width="0.3"/>
<path d="M906.2,362.0L987.5,341.6M987.5,334.0L906.2,354.4" fill="none" stroke="#2c4a1c" stroke-width="0.60" stroke-linecap="round"/>
<path d="M906.2,354.4 L987.5,334.0 L985.2,332.9 L904.0,353.4 Z" fill="#78a44c" stroke="#78a44c" stroke-width="0.3"/>
<path d="M906.2,354.4L987.5,334.0M985.2,332.9L904.0,353.4" fill="none" stroke="#2c4a1c" stroke-width="0.60" stroke-linecap="round"/>
<path d="M744.5,600.0 L744.5,584.8 L740.7,583.0 L740.7,598.2 Z" fill="#a77250" stroke="#a77250" stroke-width="0.3"/>
<path d="M744.5,600.0 L907.0,575.3 L907.0,560.1 L744.5,584.8 Z" fill="#aa7650" stroke="#aa7650" stroke-width="0.3"/>
<path d="M744.5,600.0L907.0,575.3M907.0,560.1L744.5,584.8" fill="none" stroke="#5a3a26" stroke-width="0.60" stroke-linecap="round"/>
<path d="M744.5,584.8 L907.0,560.1 L903.2,558.3 L740.7,583.0 Z" fill="#93623e" stroke="#93623e" stroke-width="0.3"/>
<path d="M744.5,584.8L907.0,560.1M903.2,558.3L740.7,583.0" fill="none" stroke="#5a3a26" stroke-width="0.60" stroke-linecap="round"/>
<path d="M791.1,360.1 L791.1,353.6 L698.9,309.0 L698.9,315.4 Z" fill="#3aac95" stroke="#1c4a3d" stroke-width="0.50" stroke-linejoin="round"/>
<path d="M791.1,360.1 L793.7,359.7 L793.7,353.2 L791.1,353.6 Z" fill="#2f8e7b" stroke="#1c4a3d" stroke-width="0.50" stroke-linejoin="round"/>
<path d="M791.1,353.6 L793.7,353.2 L701.5,308.6 L698.9,309.0 Z" fill="#7d8583" stroke="#1c4a3d" stroke-width="0.50" stroke-linejoin="round"/>
<path d="M750.4,582.5 L896.6,560.3" fill="none" stroke="#6b4428" stroke-width="0.70" stroke-dasharray="1.6,1.1"/>
<path d="M909.1,360.8 L909.1,371.2 L933.5,354.7 Z" fill="#6f9b46" stroke="#2c4a1c" stroke-width="0.60" stroke-linejoin="round"/>
<path d="M775.6,360.9 L775.6,354.4 L683.4,309.8 L683.4,316.2 Z" fill="#3aac95" stroke="#1c4a3d" stroke-width="0.50" stroke-linejoin="round"/>
<path d="M775.6,360.9 L778.2,360.5 L778.2,354.0 L775.6,354.4 Z" fill="#2f8e7b" stroke="#1c4a3d" stroke-width="0.50" stroke-linejoin="round"/>
<path d="M775.6,354.4 L778.2,354.0 L686.0,309.4 L683.4,309.8 Z" fill="#7d8583" stroke="#1c4a3d" stroke-width="0.50" stroke-linejoin="round"/>
<path d="M490.8,367.6 L490.8,360.1 L488.6,359.0 L488.6,366.5 Z" fill="#5f8a3a" stroke="#2c4a1c" stroke-width="0.60" stroke-linejoin="round"/>
<path d="M490.8,367.6 L572.1,347.2 L572.1,339.7 L490.8,360.1 Z" fill="#6f9b46" stroke="#6f9b46" stroke-width="0.3"/>
<path d="M490.8,367.6L572.1,347.2M572.1,339.7L490.8,360.1M490.8,360.1L490.8,367.6" fill="none" stroke="#2c4a1c" stroke-width="0.60" stroke-linecap="round"/>
<path d="M490.8,360.1 L572.1,339.7 L569.8,338.6 L488.6,359.0 Z" fill="#78a44c" stroke="#78a44c" stroke-width="0.3"/>
<path d="M490.8,360.1L572.1,339.7M569.8,338.6L488.6,359.0M488.6,359.0L490.8,360.1" fill="none" stroke="#2c4a1c" stroke-width="0.60" stroke-linecap="round"/>
<path d="M760.1,361.7 L760.1,355.2 L667.9,310.6 L667.9,317.1 Z" fill="#3aac95" stroke="#1c4a3d" stroke-width="0.50" stroke-linejoin="round"/>
<path d="M760.1,361.7 L762.7,361.3 L762.7,354.9 L760.1,355.2 Z" fill="#2f8e7b" stroke="#1c4a3d" stroke-width="0.50" stroke-linejoin="round"/>
<path d="M760.1,355.2 L762.7,354.9 L670.5,310.2 L667.9,310.6 Z" fill="#7d8583" stroke="#1c4a3d" stroke-width="0.50" stroke-linejoin="round"/>
<path d="M899.9,592.3 L915.2,590.0 L915.2,559.2 L899.9,561.6 Z" fill="#aa7650" stroke="#5a3a26" stroke-width="0.60" stroke-linejoin="round"/>
<path d="M902.1,361.9 L877.8,363.2 L902.1,372.2 Z" fill="#6f9b46" stroke="#2c4a1c" stroke-width="0.60" stroke-linejoin="round"/>
<path d="M493.7,366.5 L493.7,376.8 L518.1,360.3 Z" fill="#6f9b46" stroke="#2c4a1c" stroke-width="0.60" stroke-linejoin="round"/>
<path d="M744.5,362.5 L744.5,356.1 L652.3,311.4 L652.3,317.9 Z" fill="#3aac95" stroke="#1c4a3d" stroke-width="0.50" stroke-linejoin="round"/>
<path d="M744.5,362.5 L747.2,362.1 L747.2,355.7 L744.5,356.1 Z" fill="#2f8e7b" stroke="#1c4a3d" stroke-width="0.50" stroke-linejoin="round"/>
<path d="M744.5,356.1 L747.2,355.7 L654.9,311.0 L652.3,311.4 Z" fill="#7d8583" stroke="#1c4a3d" stroke-width="0.50" stroke-linejoin="round"/>
<path d="M738.6,363.4 L738.6,357.9 L646.4,313.2 L646.4,318.8 Z" fill="#3aac95" stroke="#1c4a3d" stroke-width="0.50" stroke-linejoin="round"/>
<path d="M738.6,363.4 L740.1,363.2 L740.1,357.6 L738.6,357.9 Z" fill="#2f8e7b" stroke="#1c4a3d" stroke-width="0.50" stroke-linejoin="round"/>
<path d="M738.6,357.9 L740.1,357.6 L647.9,313.0 L646.4,313.2 Z" fill="#1f5246" stroke="#1c4a3d" stroke-width="0.50" stroke-linejoin="round"/>
<path d="M484.5,598.0 L499.8,595.7 L499.8,564.9 L484.5,567.2 Z" fill="#aa7650" stroke="#5a3a26" stroke-width="0.60" stroke-linejoin="round"/>
<path d="M580.9,467.8 L580.9,459.6 L490.5,415.8 L490.5,424.0 Z" fill="#5f8a3a" stroke="#5f8a3a" stroke-width="0.3"/>
<path d="M580.9,467.8L580.9,459.6M580.9,459.6L490.5,415.8M490.5,424.0L580.9,467.8" fill="none" stroke="#2c4a1c" stroke-width="0.60" stroke-linecap="round"/>
<path d="M580.9,467.8 L585.0,467.2 L585.0,458.9 L580.9,459.6 Z" fill="#6f9b46" stroke="#2c4a1c" stroke-width="0.60" stroke-linejoin="round"/>
<path d="M580.9,459.6 L585.0,458.9 L494.6,415.2 L490.5,415.8 Z" fill="#78a44c" stroke="#78a44c" stroke-width="0.3"/>
<path d="M580.9,459.6L585.0,458.9M585.0,458.9L494.6,415.2M490.5,415.8L580.9,459.6" fill="none" stroke="#2c4a1c" stroke-width="0.60" stroke-linecap="round"/>
<path d="M825.0,366.3 L825.0,358.7 L822.7,357.6 L822.7,365.2 Z" fill="#5f8a3a" stroke="#5f8a3a" stroke-width="0.3"/>
<path d="M825.0,366.3 L906.2,362.0 L906.2,354.4 L825.0,358.7 Z" fill="#6f9b46" stroke="#6f9b46" stroke-width="0.3"/>
<path d="M825.0,366.3L906.2,362.0M906.2,354.4L825.0,358.7" fill="none" stroke="#2c4a1c" stroke-width="0.60" stroke-linecap="round"/>
<path d="M825.0,358.7 L906.2,354.4 L904.0,353.4 L822.7,357.6 Z" fill="#78a44c" stroke="#78a44c" stroke-width="0.3"/>
<path d="M825.0,358.7L906.2,354.4M904.0,353.4L822.7,357.6" fill="none" stroke="#2c4a1c" stroke-width="0.60" stroke-linecap="round"/>
<path d="M723.1,367.3 L723.1,361.8 L630.9,317.1 L630.9,322.7 Z" fill="#3aac95" stroke="#1c4a3d" stroke-width="0.50" stroke-linejoin="round"/>
<path d="M723.1,367.3 L724.6,367.1 L724.6,361.5 L723.1,361.8 Z" fill="#2f8e7b" stroke="#1c4a3d" stroke-width="0.50" stroke-linejoin="round"/>
<path d="M723.1,361.8 L724.6,361.5 L632.4,316.9 L630.9,317.1 Z" fill="#1f5246" stroke="#1c4a3d" stroke-width="0.50" stroke-linejoin="round"/>
<path d="M899.9,561.6 L915.2,559.2 L910.3,556.9 L895.0,559.2 Z" fill="#93623e" stroke="#5a3a26" stroke-width="0.60" stroke-linejoin="round"/>
<path d="M903.1,560.5 L903.1,355.1 L900.1,353.7 L900.1,559.0 Z" fill="#7b4490" stroke="#2e1838" stroke-width="0.80" stroke-linejoin="round"/>
<path d="M903.1,560.5 L910.1,559.4 L910.1,354.1 L903.1,355.1 Z" fill="#9756ac" stroke="#2e1838" stroke-width="0.80" stroke-linejoin="round"/>
<path d="M903.1,355.1 L910.1,354.1 L907.1,352.6 L900.1,353.7 Z" fill="#8b4ca0" stroke="#2e1838" stroke-width="0.80" stroke-linejoin="round"/>
<path d="M707.6,371.2 L707.6,365.7 L615.4,321.0 L615.4,326.6 Z" fill="#3aac95" stroke="#1c4a3d" stroke-width="0.50" stroke-linejoin="round"/>
<path d="M707.6,371.2 L709.0,371.0 L709.0,365.4 L707.6,365.7 Z" fill="#2f8e7b" stroke="#1c4a3d" stroke-width="0.50" stroke-linejoin="round"/>
<path d="M707.6,365.7 L709.0,365.4 L616.8,320.8 L615.4,321.0 Z" fill="#1f5246" stroke="#1c4a3d" stroke-width="0.50" stroke-linejoin="round"/>
<path d="M579.3,626.1 L579.3,610.9 L488.9,567.1 L488.9,582.3 Z" fill="#a77250" stroke="#a77250" stroke-width="0.3"/>
<path d="M579.3,626.1L579.3,610.9M579.3,610.9L488.9,567.1M488.9,582.3L579.3,626.1" fill="none" stroke="#5a3a26" stroke-width="0.60" stroke-linecap="round"/>
<path d="M579.3,626.1 L585.8,625.1 L585.8,609.9 L579.3,610.9 Z" fill="#aa7650" stroke="#5a3a26" stroke-width="0.60" stroke-linejoin="round"/>
<path d="M579.3,610.9 L585.8,609.9 L495.4,566.1 L488.9,567.1 Z" fill="#93623e" stroke="#93623e" stroke-width="0.3"/>
<path d="M579.3,610.9L585.8,609.9M585.8,609.9L495.4,566.1M488.9,567.1L579.3,610.9" fill="none" stroke="#5a3a26" stroke-width="0.60" stroke-linecap="round"/>
<path d="M692.1,375.1 L692.1,369.6 L599.9,324.9 L599.9,330.5 Z" fill="#3aac95" stroke="#1c4a3d" stroke-width="0.50" stroke-linejoin="round"/>
<path d="M692.1,375.1 L693.5,374.9 L693.5,369.3 L692.1,369.6 Z" fill="#2f8e7b" stroke="#1c4a3d" stroke-width="0.50" stroke-linejoin="round"/>
<path d="M692.1,369.6 L693.5,369.3 L601.3,324.7 L599.9,324.9 Z" fill="#1f5246" stroke="#1c4a3d" stroke-width="0.50" stroke-linejoin="round"/>
<path d="M578.0,608.2 L496.7,568.8" fill="none" stroke="#6b4428" stroke-width="0.70" stroke-dasharray="1.6,1.1"/>
<path d="M484.5,567.2 L499.8,564.9 L494.9,562.5 L479.6,564.8 Z" fill="#93623e" stroke="#5a3a26" stroke-width="0.60" stroke-linejoin="round"/>
<path d="M487.7,566.1 L487.7,360.8 L484.7,359.4 L484.7,564.7 Z" fill="#7b4490" stroke="#2e1838" stroke-width="0.80" stroke-linejoin="round"/>
<path d="M487.7,566.1 L494.7,565.1 L494.7,359.7 L487.7,360.8 Z" fill="#9756ac" stroke="#2e1838" stroke-width="0.80" stroke-linejoin="round"/>
<path d="M487.7,360.8 L494.7,359.7 L491.7,358.3 L484.7,359.4 Z" fill="#8b4ca0" stroke="#2e1838" stroke-width="0.80" stroke-linejoin="round"/>
<path d="M676.5,379.0 L676.5,373.5 L584.3,328.8 L584.3,334.4 Z" fill="#3aac95" stroke="#1c4a3d" stroke-width="0.50" stroke-linejoin="round"/>
<path d="M676.5,379.0 L678.0,378.8 L678.0,373.2 L676.5,373.5 Z" fill="#2f8e7b" stroke="#1c4a3d" stroke-width="0.50" stroke-linejoin="round"/>
<path d="M676.5,373.5 L678.0,373.2 L585.8,328.6 L584.3,328.8 Z" fill="#1f5246" stroke="#1c4a3d" stroke-width="0.50" stroke-linejoin="round"/>
<path d="M484.5,598.0 L484.5,567.2 L479.6,564.8 L479.6,595.6 Z" fill="#a77250" stroke="#5a3a26" stroke-width="0.60" stroke-linejoin="round"/>
<path d="M661.0,382.9 L661.0,377.4 L568.8,332.7 L568.8,338.3 Z" fill="#3aac95" stroke="#1c4a3d" stroke-width="0.50" stroke-linejoin="round"/>
<path d="M661.0,382.9 L662.5,382.7 L662.5,377.1 L661.0,377.4 Z" fill="#2f8e7b" stroke="#1c4a3d" stroke-width="0.50" stroke-linejoin="round"/>
<path d="M661.0,377.4 L662.5,377.1 L570.3,332.5 L568.8,332.7 Z" fill="#1f5246" stroke="#1c4a3d" stroke-width="0.50" stroke-linejoin="round"/>
<path d="M645.5,386.8 L645.5,381.2 L553.3,336.6 L553.3,342.2 Z" fill="#3aac95" stroke="#1c4a3d" stroke-width="0.50" stroke-linejoin="round"/>
<path d="M645.5,386.8 L647.0,386.6 L647.0,381.0 L645.5,381.2 Z" fill="#2f8e7b" stroke="#1c4a3d" stroke-width="0.50" stroke-linejoin="round"/>
<path d="M645.5,381.2 L647.0,381.0 L554.8,336.4 L553.3,336.6 Z" fill="#1f5246" stroke="#1c4a3d" stroke-width="0.50" stroke-linejoin="round"/>
<path d="M743.7,370.6 L743.7,363.0 L741.5,361.9 L741.5,369.5 Z" fill="#5f8a3a" stroke="#5f8a3a" stroke-width="0.3"/>
<path d="M743.7,370.6 L825.0,366.3 L825.0,358.7 L743.7,363.0 Z" fill="#6f9b46" stroke="#6f9b46" stroke-width="0.3"/>
<path d="M743.7,370.6L825.0,366.3M825.0,358.7L743.7,363.0" fill="none" stroke="#2c4a1c" stroke-width="0.60" stroke-linecap="round"/>
<path d="M743.7,363.0 L825.0,358.7 L822.7,357.6 L741.5,361.9 Z" fill="#78a44c" stroke="#78a44c" stroke-width="0.3"/>
<path d="M743.7,363.0L825.0,358.7M822.7,357.6L741.5,361.9" fill="none" stroke="#2c4a1c" stroke-width="0.60" stroke-linecap="round"/>
<path d="M630.0,390.7 L630.0,385.1 L537.8,340.5 L537.8,346.1 Z" fill="#3aac95" stroke="#1c4a3d" stroke-width="0.50" stroke-linejoin="round"/>
<path d="M630.0,390.7 L631.5,390.5 L631.5,384.9 L630.0,385.1 Z" fill="#2f8e7b" stroke="#1c4a3d" stroke-width="0.50" stroke-linejoin="round"/>
<path d="M630.0,385.1 L631.5,384.9 L539.2,340.3 L537.8,340.5 Z" fill="#1f5246" stroke="#1c4a3d" stroke-width="0.50" stroke-linejoin="round"/>
<path d="M582.0,624.7 L582.0,609.5 L578.2,607.7 L578.2,622.9 Z" fill="#a77250" stroke="#5a3a26" stroke-width="0.60" stroke-linejoin="round"/>
<path d="M582.0,624.7 L744.5,600.0 L744.5,584.8 L582.0,609.5 Z" fill="#aa7650" stroke="#aa7650" stroke-width="0.3"/>
<path d="M582.0,624.7L744.5,600.0M744.5,584.8L582.0,609.5M582.0,609.5L582.0,624.7" fill="none" stroke="#5a3a26" stroke-width="0.60" stroke-linecap="round"/>
<path d="M582.0,609.5 L744.5,584.8 L740.7,583.0 L578.2,607.7 Z" fill="#93623e" stroke="#93623e" stroke-width="0.3"/>
<path d="M582.0,609.5L744.5,584.8M740.7,583.0L578.2,607.7M578.2,607.7L582.0,609.5" fill="none" stroke="#5a3a26" stroke-width="0.60" stroke-linecap="round"/>
<path d="M587.9,607.2 L734.1,585.0" fill="none" stroke="#6b4428" stroke-width="0.70" stroke-dasharray="1.6,1.1"/>
<path d="M614.5,394.6 L614.5,389.0 L522.3,344.4 L522.3,350.0 Z" fill="#3aac95" stroke="#1c4a3d" stroke-width="0.50" stroke-linejoin="round"/>
<path d="M614.5,394.6 L615.9,394.4 L615.9,388.8 L614.5,389.0 Z" fill="#2f8e7b" stroke="#1c4a3d" stroke-width="0.50" stroke-linejoin="round"/>
<path d="M614.5,389.0 L615.9,388.8 L523.7,344.2 L522.3,344.4 Z" fill="#1f5246" stroke="#1c4a3d" stroke-width="0.50" stroke-linejoin="round"/>
<path d="M599.0,398.5 L599.0,392.9 L506.7,348.3 L506.7,353.9 Z" fill="#3aac95" stroke="#1c4a3d" stroke-width="0.50" stroke-linejoin="round"/>
<path d="M599.0,398.5 L600.4,398.3 L600.4,392.7 L599.0,392.9 Z" fill="#2f8e7b" stroke="#1c4a3d" stroke-width="0.50" stroke-linejoin="round"/>
<path d="M599.0,392.9 L600.4,392.7 L508.2,348.1 L506.7,348.3 Z" fill="#1f5246" stroke="#1c4a3d" stroke-width="0.50" stroke-linejoin="round"/>
<path d="M583.4,402.4 L583.4,396.8 L491.2,352.2 L491.2,357.8 Z" fill="#3aac95" stroke="#1c4a3d" stroke-width="0.50" stroke-linejoin="round"/>
<path d="M583.4,402.4 L584.9,402.2 L584.9,396.6 L583.4,396.8 Z" fill="#2f8e7b" stroke="#1c4a3d" stroke-width="0.50" stroke-linejoin="round"/>
<path d="M583.4,396.8 L584.9,396.6 L492.7,352.0 L491.2,352.2 Z" fill="#1f5246" stroke="#1c4a3d" stroke-width="0.50" stroke-linejoin="round"/>
<path d="M572.3,652.8 L572.3,646.6 L553.5,637.5 L553.5,643.7 Z" fill="#a77250" stroke="#5a3a26" stroke-width="0.60" stroke-linejoin="round"/>
<path d="M572.3,652.8 L606.7,647.6 L606.7,641.3 L572.3,646.6 Z" fill="#aa7650" stroke="#5a3a26" stroke-width="0.60" stroke-linejoin="round"/>
<path d="M572.3,646.6 L606.7,641.3 L587.9,632.2 L553.5,637.5 Z" fill="#93623e" stroke="#5a3a26" stroke-width="0.60" stroke-linejoin="round"/>
<path d="M662.5,391.0 L662.5,383.4 L660.2,382.3 L660.2,389.9 Z" fill="#5f8a3a" stroke="#5f8a3a" stroke-width="0.3"/>
<path d="M662.5,391.0 L743.7,370.6 L743.7,363.0 L662.5,383.4 Z" fill="#6f9b46" stroke="#6f9b46" stroke-width="0.3"/>
<path d="M662.5,391.0L743.7,370.6M743.7,363.0L662.5,383.4" fill="none" stroke="#2c4a1c" stroke-width="0.60" stroke-linecap="round"/>
<path d="M662.5,383.4 L743.7,363.0 L741.5,361.9 L660.2,382.3 Z" fill="#78a44c" stroke="#78a44c" stroke-width="0.3"/>
<path d="M662.5,383.4L743.7,363.0M741.5,361.9L660.2,382.3" fill="none" stroke="#2c4a1c" stroke-width="0.60" stroke-linecap="round"/>
<path d="M581.2,411.4 L581.2,403.8 L579.0,402.8 L579.0,410.3 Z" fill="#5f8a3a" stroke="#2c4a1c" stroke-width="0.60" stroke-linejoin="round"/>
<path d="M581.2,411.4 L662.5,391.0 L662.5,383.4 L581.2,403.8 Z" fill="#6f9b46" stroke="#6f9b46" stroke-width="0.3"/>
<path d="M581.2,411.4L662.5,391.0M662.5,383.4L581.2,403.8M581.2,403.8L581.2,411.4" fill="none" stroke="#2c4a1c" stroke-width="0.60" stroke-linecap="round"/>
<path d="M581.2,403.8 L662.5,383.4 L660.2,382.3 L579.0,402.8 Z" fill="#78a44c" stroke="#78a44c" stroke-width="0.3"/>
<path d="M581.2,403.8L662.5,383.4M660.2,382.3L579.0,402.8M579.0,402.8L581.2,403.8" fill="none" stroke="#2c4a1c" stroke-width="0.60" stroke-linecap="round"/>
<path d="M584.1,410.2 L584.1,420.6 L608.5,404.1 Z" fill="#6f9b46" stroke="#2c4a1c" stroke-width="0.60" stroke-linejoin="round"/>
<path d="M574.9,641.7 L590.2,639.4 L590.2,608.6 L574.9,611.0 Z" fill="#aa7650" stroke="#5a3a26" stroke-width="0.60" stroke-linejoin="round"/>
<path d="M574.9,611.0 L590.2,608.6 L585.3,606.3 L570.0,608.6 Z" fill="#93623e" stroke="#5a3a26" stroke-width="0.60" stroke-linejoin="round"/>
<path d="M578.1,609.9 L578.1,404.5 L575.1,403.1 L575.1,608.4 Z" fill="#7b4490" stroke="#2e1838" stroke-width="0.80" stroke-linejoin="round"/>
<path d="M578.1,609.9 L585.1,608.8 L585.1,403.5 L578.1,404.5 Z" fill="#9756ac" stroke="#2e1838" stroke-width="0.80" stroke-linejoin="round"/>
<path d="M578.1,404.5 L585.1,403.5 L582.1,402.0 L575.1,403.1 Z" fill="#8b4ca0" stroke="#2e1838" stroke-width="0.80" stroke-linejoin="round"/>
<path d="M574.9,641.7 L574.9,611.0 L570.0,608.6 L570.0,639.4 Z" fill="#a77250" stroke="#5a3a26" stroke-width="0.60" stroke-linejoin="round"/>
<line x1="560.00" y1="355.40" x2="1299.38" y2="243.02" stroke="#b4b4bc" stroke-width="0.6" stroke-dasharray="3,1" opacity="0.7"/>
<line x1="560.00" y1="355.40" x2="1299.38" y2="243.02" stroke="#8ee08e" stroke-width="0.8" stroke-dasharray="18,14" opacity="0.7"/>
<line x1="560.00" y1="355.40" x2="560.00" y2="800.22" stroke="#b4b4bc" stroke-width="0.6" stroke-dasharray="3,1" opacity="0.7"/>
<line x1="560.00" y1="355.40" x2="560.00" y2="800.22" stroke="#8ee08e" stroke-width="0.8" stroke-dasharray="18,14" opacity="0.7"/>
<text x="293.0" y="472.7" font-size="10.4" fill="#1a1a1c" text-anchor="middle">A</text>
<text x="283.0" y="482.7" font-size="10.4" fill="#1a1a1c" text-anchor="middle">4</text>
<text x="456.0" y="447.7" font-size="10.4" fill="#1a1a1c" text-anchor="middle">B</text>
<text x="617.0" y="423.7" font-size="10.4" fill="#1a1a1c" text-anchor="middle">C</text>
<text x="781.0" y="397.7" font-size="10.4" fill="#1a1a1c" text-anchor="middle">D</text>
<text x="942.0" y="373.7" font-size="10.4" fill="#1a1a1c" text-anchor="middle">E</text>
<text x="977.0" y="376.7" font-size="10.4" fill="#1a1a1c" text-anchor="middle">4</text>
<text x="373.0" y="525.7" font-size="10.4" fill="#1a1a1c" text-anchor="middle">3</text>
<text x="463.0" y="569.7" font-size="10.4" fill="#1a1a1c" text-anchor="middle">2</text>
<text x="553.0" y="612.7" font-size="10.4" fill="#1a1a1c" text-anchor="middle">1</text>
<text x="589.0" y="615.7" font-size="10.4" fill="#1a1a1c" text-anchor="middle">A</text>
<text x="751.0" y="591.7" font-size="10.4" fill="#1a1a1c" text-anchor="middle">B</text>
<text x="912.0" y="566.7" font-size="10.4" fill="#1a1a1c" text-anchor="middle">C</text>
<text x="1076.0" y="541.7" font-size="10.4" fill="#1a1a1c" text-anchor="middle">D</text>
<text x="1238.0" y="516.7" font-size="10.4" fill="#1a1a1c" text-anchor="middle">E</text>
<text x="1248.0" y="507.7" font-size="10.4" fill="#1a1a1c" text-anchor="middle">1</text>
<text x="1067.0" y="420.7" font-size="10.4" fill="#1a1a1c" text-anchor="middle">3</text>
<text x="1158.0" y="464.7" font-size="10.4" fill="#1a1a1c" text-anchor="middle">2</text>
<rect x="579.8" y="566.4" width="9.4" height="17" fill="#ffffff" opacity="0.6"/>
<text x="584.5" y="580.5" font-size="11.5" fill="#4848d0" text-anchor="middle">Z</text>
<rect x="566.2" y="587.8" width="9.4" height="15" fill="#ffffff" opacity="0.6"/>
<text x="570.9" y="600.4" font-size="11.5" fill="#1a9a48" text-anchor="middle">Y</text>
<rect x="604.2" y="590.7" width="9.8" height="15.6" fill="#ffffff" opacity="0.6"/>
<text x="609.1" y="603.9" font-size="11.5" fill="#d0204a" text-anchor="middle">X</text>
<path d="M585.4,588 L591,589.6 L595.2,591.5 L595.2,605 L591,607.4 L585.4,605.6 M585.4,588 L589,586.3 L595.2,591.5" stroke="#7fe07f" stroke-width="0.8" fill="none"/>
<path d="M565,606.6 L583,607.6 L600,605" stroke="#e05050" stroke-width="0.8" fill="none" opacity="0.7"/>
<circle cx="769.5" cy="444.4" r="9.9" fill="none" stroke="#f040f0" stroke-width="1.2" stroke-dasharray="1.2,1.5" opacity="0.8"/>
<circle cx="776.01" cy="450.91" r="1.9" fill="#f020f0"/>
<circle cx="762.99" cy="450.91" r="1.9" fill="#f020f0"/>
<circle cx="762.99" cy="437.89" r="1.9" fill="#f020f0"/>
<circle cx="776.01" cy="437.89" r="1.9" fill="#f020f0"/>
<circle cx="769.5" cy="444.4" r="0.7" fill="#f040f0"/>
</svg></body></html>
